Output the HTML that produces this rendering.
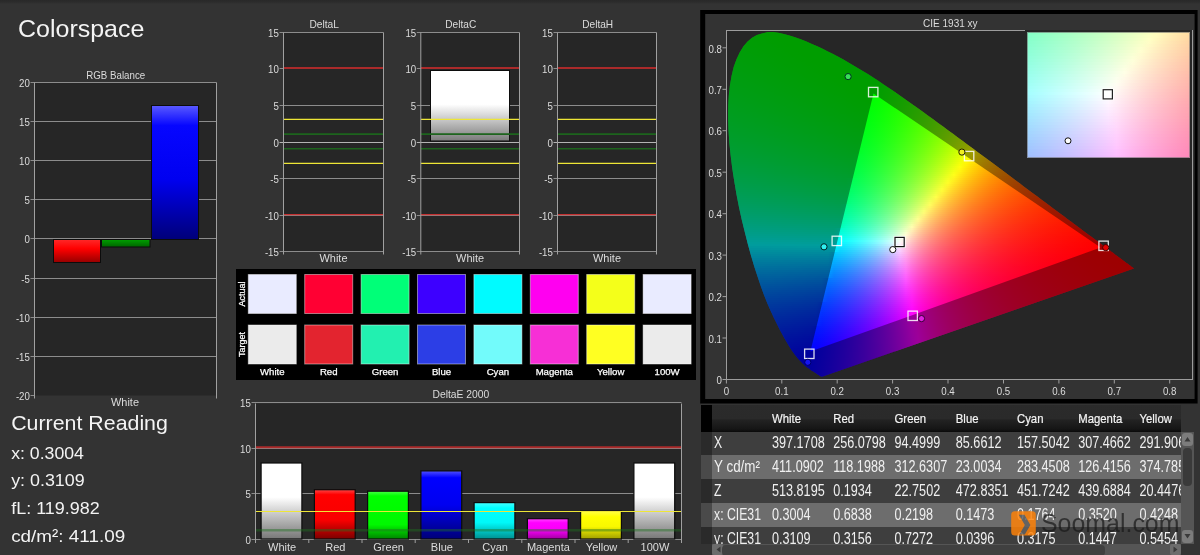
<!DOCTYPE html>
<html><head><meta charset="utf-8"><title>Colorspace</title>
<style>
html,body{margin:0;padding:0;background:#333;}
body{width:1200px;height:555px;overflow:hidden;position:relative;font-family:"Liberation Sans",sans-serif;color:#fff;}
#page{position:absolute;left:0;top:0;width:1200px;height:555px;overflow:hidden;background:#333;}
#topstrip{position:absolute;left:0;top:0;width:1200px;height:4px;background:linear-gradient(180deg,#292929,#2c2c2c 50%,#333);}
svg{position:absolute;left:0;top:0;will-change:transform;}
svg text{font-family:"Liberation Sans",sans-serif;}
#plot{position:absolute;left:726px;top:30px;width:467px;height:350px;background:#262626;border:1px solid #9c9c9c;box-sizing:border-box;}
#cie{position:absolute;left:726px;top:30px;width:414px;height:350px;clip-path:polygon(96.7px 346.6px,95.2px 346.6px,95.1px 346.5px,94.9px 346.5px,94.7px 346.4px,94.6px 346.3px,94.4px 346.2px,94.2px 346.1px,94.0px 346.0px,93.8px 345.8px,93.5px 345.7px,93.3px 345.5px,93.0px 345.3px,92.7px 345.1px,92.4px 344.9px,92.0px 344.7px,91.7px 344.4px,91.3px 344.2px,90.9px 343.9px,90.4px 343.6px,90.0px 343.3px,89.5px 343.0px,88.9px 342.6px,88.3px 342.2px,87.6px 341.8px,87.0px 341.3px,86.2px 340.9px,85.5px 340.4px,84.7px 339.9px,83.9px 339.3px,83.0px 338.6px,82.0px 338.0px,81.0px 337.2px,80.0px 336.4px,78.9px 335.5px,77.8px 334.5px,76.6px 333.4px,75.2px 332.1px,73.8px 330.6px,72.3px 328.9px,70.7px 326.9px,68.9px 324.7px,67.1px 322.2px,65.1px 319.4px,63.1px 316.3px,60.9px 312.6px,58.5px 308.6px,56.1px 304.1px,53.5px 299.2px,50.7px 293.6px,47.7px 287.4px,44.6px 280.7px,41.4px 273.4px,38.1px 265.3px,34.9px 256.5px,31.7px 247.0px,28.4px 236.9px,25.2px 226.2px,22.0px 214.7px,18.9px 202.5px,15.8px 189.9px,13.0px 177.3px,10.5px 164.4px,8.2px 151.1px,6.2px 137.9px,4.6px 125.0px,3.3px 112.5px,2.5px 100.1px,2.1px 88.1px,2.2px 76.7px,2.8px 65.8px,3.9px 55.5px,5.6px 45.8px,7.7px 37.1px,10.5px 29.3px,13.8px 22.3px,17.5px 16.3px,21.6px 11.4px,26.1px 7.7px,30.9px 5.1px,36.0px 3.4px,41.3px 2.3px,46.6px 2.1px,52.2px 2.8px,57.8px 4.1px,63.4px 5.5px,69.0px 7.2px,74.7px 9.3px,80.4px 11.6px,85.9px 13.9px,91.3px 16.3px,96.6px 18.8px,101.9px 21.4px,107.1px 24.0px,112.3px 26.7px,117.4px 29.5px,122.4px 32.4px,127.5px 35.4px,132.5px 38.4px,137.6px 41.5px,142.6px 44.6px,147.6px 47.8px,152.6px 51.1px,157.6px 54.4px,162.5px 57.7px,167.5px 61.1px,172.4px 64.5px,177.4px 68.0px,182.3px 71.5px,187.3px 75.0px,192.3px 78.5px,197.2px 82.1px,202.2px 85.7px,207.2px 89.3px,212.1px 92.9px,217.1px 96.5px,222.0px 100.2px,227.0px 103.8px,231.9px 107.4px,236.8px 111.0px,241.7px 114.7px,246.6px 118.3px,251.5px 121.9px,256.3px 125.5px,261.1px 129.1px,265.9px 132.6px,270.6px 136.1px,275.3px 139.6px,280.0px 143.1px,284.6px 146.6px,289.2px 150.0px,293.7px 153.3px,298.1px 156.7px,302.5px 159.9px,306.9px 163.2px,311.1px 166.3px,315.3px 169.4px,319.4px 172.5px,323.4px 175.5px,327.3px 178.4px,331.1px 181.2px,334.8px 184.0px,338.3px 186.6px,341.7px 189.2px,345.0px 191.6px,348.2px 194.0px,351.3px 196.3px,354.3px 198.5px,357.2px 200.7px,359.9px 202.7px,362.6px 204.7px,365.1px 206.5px,367.5px 208.3px,369.7px 210.0px,371.9px 211.6px,373.9px 213.1px,375.8px 214.5px,377.7px 215.9px,379.4px 217.2px,381.0px 218.4px,382.5px 219.5px,384.0px 220.6px,385.4px 221.7px,386.7px 222.6px,387.9px 223.5px,389.0px 224.4px,390.1px 225.2px,391.2px 226.0px,392.2px 226.7px,393.1px 227.4px,394.0px 228.1px,394.9px 228.7px,395.7px 229.3px,396.5px 229.9px,397.2px 230.5px,397.9px 231.0px,398.6px 231.5px,399.3px 232.0px,399.9px 232.5px,400.4px 232.9px,401.0px 233.3px,401.5px 233.6px,401.9px 234.0px,402.4px 234.3px,402.8px 234.6px,403.1px 234.9px,403.5px 235.1px,403.8px 235.4px,404.1px 235.6px,404.4px 235.8px,404.7px 236.0px,404.9px 236.2px,405.2px 236.4px,405.4px 236.5px,405.5px 236.7px,405.7px 236.8px,405.8px 236.9px,406.0px 237.0px,406.1px 237.1px,406.2px 237.2px,406.4px 237.3px,406.5px 237.4px,406.6px 237.5px,406.7px 237.5px,406.8px 237.6px,406.9px 237.7px,407.0px 237.7px,407.1px 237.8px,407.2px 237.9px,407.3px 238.0px,407.3px 238.0px,407.4px 238.1px,407.5px 238.1px,407.6px 238.2px,407.7px 238.3px,407.7px 238.3px,407.8px 238.3px,407.8px 238.4px,407.8px 238.4px,407.9px 238.4px,407.9px 238.4px,407.9px 238.5px,407.9px 238.5px,408.0px 238.5px,408.0px 238.5px,408.0px 238.5px);}
#cie i{display:block;height:2px;width:414px;}
#inset{position:absolute;left:1027px;top:32px;width:163px;height:126px;overflow:hidden;box-shadow:0 0 0 2px #262626;}
#inset::after{content:"";position:absolute;left:0;top:0;right:0;bottom:0;border:1px solid rgba(110,110,110,.6);}
#inset i{display:block;height:3px;width:163px;}
#tbl{position:absolute;left:701px;top:405px;width:480px;height:150px;overflow:hidden;}
#tbl div{position:absolute;left:0;width:480px;}
#tbl .hd{top:0;height:26.5px;background:linear-gradient(180deg,#2b2b2b 0%,#2a2a2a 50%,#222 56%,#161616 88%,#0a0a0a 100%);}
#tbl .hd b{position:absolute;left:0;top:0;width:11px;height:26.5px;background:#000;}
#tbl .r0{background:#3e3e3e;height:23.8px}
#tbl .r1{background:#6d6d6d;height:23.8px}
#hsb{position:absolute;left:701px;top:544px;width:480px;height:11px;background:#555;}
#hsb b{position:absolute;left:21px;top:0.5px;width:383px;height:11px;background:#404040;border-radius:4px;}
#hsb u{position:absolute;top:0;width:10.5px;height:11px;background:#6c6c6c;border-radius:2px;}
#vsb{position:absolute;left:1181px;top:431.5px;width:13px;height:112.5px;background:#555;}
#vsb .btn{position:absolute;left:1px;width:10.5px;height:13px;background:#7c7c7c;border-radius:3px;}
#vsb .thumb{position:absolute;left:2px;top:16.5px;width:9px;height:38px;background:#3a3a3a;border-radius:4px;}
</style></head>
<body><div id="page">
<div id="topstrip"></div>
<svg width="1200" height="555" viewBox="0 0 1200 555">
<defs>
<linearGradient id="gWht" x1="0" y1="0" x2="0" y2="1"><stop offset="0" stop-color="#fff"/><stop offset=".45" stop-color="#fff"/><stop offset="1" stop-color="#777"/></linearGradient>
<linearGradient id="gWhtC" x1="0" y1="0" x2="0" y2="1"><stop offset="0" stop-color="#fff"/><stop offset=".48" stop-color="#fff"/><stop offset="1" stop-color="#7a7a7a"/></linearGradient>
<linearGradient id="gRed" x1="0" y1="0" x2="0" y2="1"><stop offset="0" stop-color="#ff4646"/><stop offset="0.1" stop-color="#ff0000"/><stop offset="0.62" stop-color="#f80000"/><stop offset="1" stop-color="#7c0000"/></linearGradient>
<linearGradient id="gGrn" x1="0" y1="0" x2="0" y2="1"><stop offset="0" stop-color="#46ff46"/><stop offset="0.1" stop-color="#00ff00"/><stop offset="0.7" stop-color="#00f800"/><stop offset="1" stop-color="#008400"/></linearGradient>
<linearGradient id="gBlu" x1="0" y1="0" x2="0" y2="1"><stop offset="0" stop-color="#5050ff"/><stop offset="0.1" stop-color="#0000ff"/><stop offset="0.5" stop-color="#0000f0"/><stop offset="1" stop-color="#000078"/></linearGradient>
<linearGradient id="gCyn" x1="0" y1="0" x2="0" y2="1"><stop offset="0" stop-color="#46ffff"/><stop offset="0.15" stop-color="#00ffff"/><stop offset="0.55" stop-color="#00f8f8"/><stop offset="1" stop-color="#009090"/></linearGradient>
<linearGradient id="gMag" x1="0" y1="0" x2="0" y2="1"><stop offset="0" stop-color="#ff46ff"/><stop offset="0.2" stop-color="#ff00ff"/><stop offset="0.55" stop-color="#f800f8"/><stop offset="1" stop-color="#a000a0"/></linearGradient>
<linearGradient id="gYel" x1="0" y1="0" x2="0" y2="1"><stop offset="0" stop-color="#ffff46"/><stop offset="0.2" stop-color="#ffff00"/><stop offset="0.55" stop-color="#f8f800"/><stop offset="1" stop-color="#a0a000"/></linearGradient>
<linearGradient id="gBluP" x1="0" y1="0" x2="0" y2="1"><stop offset="0" stop-color="#5a5aff"/><stop offset=".15" stop-color="#0606ff"/><stop offset=".55" stop-color="#0000f0"/><stop offset="1" stop-color="#000078"/></linearGradient>
<linearGradient id="gRedN" x1="0" y1="0" x2="0" y2="1"><stop offset="0" stop-color="#ff2828"/><stop offset=".4" stop-color="#ff0000"/><stop offset="1" stop-color="#960000"/></linearGradient>
<linearGradient id="gGrnN" x1="0" y1="0" x2="0" y2="1"><stop offset="0" stop-color="#00a000"/><stop offset="1" stop-color="#006400"/></linearGradient>
</defs>
<rect x="34.5" y="82.5" width="182.0" height="313.0" fill="#262626" />
<line x1="30.5" y1="395.5" x2="34.5" y2="395.5" stroke="#8c8c8c" stroke-width="1" />
<text x="29.9" y="400.4" font-size="10.8" text-anchor="end" fill="#dcdcdc" textLength="14.0" lengthAdjust="spacingAndGlyphs" >-20</text>
<line x1="30.5" y1="356.5" x2="216.5" y2="356.5" stroke="#8c8c8c" stroke-width="1" />
<text x="29.9" y="361.4" font-size="10.8" text-anchor="end" fill="#dcdcdc" textLength="14.0" lengthAdjust="spacingAndGlyphs" >-15</text>
<line x1="30.5" y1="317.5" x2="216.5" y2="317.5" stroke="#8c8c8c" stroke-width="1" />
<text x="29.9" y="322.4" font-size="10.8" text-anchor="end" fill="#dcdcdc" textLength="14.0" lengthAdjust="spacingAndGlyphs" >-10</text>
<line x1="30.5" y1="278.5" x2="216.5" y2="278.5" stroke="#8c8c8c" stroke-width="1" />
<text x="29.9" y="283.4" font-size="10.8" text-anchor="end" fill="#dcdcdc" textLength="8.6" lengthAdjust="spacingAndGlyphs" >-5</text>
<line x1="30.5" y1="238.5" x2="216.5" y2="238.5" stroke="#8c8c8c" stroke-width="1" />
<text x="29.9" y="243.4" font-size="10.8" text-anchor="end" fill="#dcdcdc" textLength="5.4" lengthAdjust="spacingAndGlyphs" >0</text>
<line x1="30.5" y1="199.5" x2="216.5" y2="199.5" stroke="#8c8c8c" stroke-width="1" />
<text x="29.9" y="204.4" font-size="10.8" text-anchor="end" fill="#dcdcdc" textLength="5.4" lengthAdjust="spacingAndGlyphs" >5</text>
<line x1="30.5" y1="160.5" x2="216.5" y2="160.5" stroke="#8c8c8c" stroke-width="1" />
<text x="29.9" y="165.4" font-size="10.8" text-anchor="end" fill="#dcdcdc" textLength="10.8" lengthAdjust="spacingAndGlyphs" >10</text>
<line x1="30.5" y1="121.5" x2="216.5" y2="121.5" stroke="#8c8c8c" stroke-width="1" />
<text x="29.9" y="126.4" font-size="10.8" text-anchor="end" fill="#dcdcdc" textLength="10.8" lengthAdjust="spacingAndGlyphs" >15</text>
<line x1="30.5" y1="82.5" x2="216.5" y2="82.5" stroke="#8c8c8c" stroke-width="1" />
<text x="29.9" y="87.4" font-size="10.8" text-anchor="end" fill="#dcdcdc" textLength="10.8" lengthAdjust="spacingAndGlyphs" >20</text>
<line x1="34.5" y1="82.5" x2="34.5" y2="398.5" stroke="#a0a0a0" stroke-width="1" />
<line x1="216.5" y1="82.5" x2="216.5" y2="398.5" stroke="#a0a0a0" stroke-width="1" />
<rect x="53.5" y="239.5" width="47.0" height="23.0" fill="url(#gRedN)" stroke="#0c0c0c" stroke-width="1" />
<rect x="101.5" y="239.5" width="48.5" height="7.5" fill="url(#gGrnN)" stroke="#0c0c0c" stroke-width="1" />
<rect x="151.5" y="105.5" width="47.0" height="134.0" fill="url(#gBluP)" stroke="#0c0c0c" stroke-width="1" />
<text x="115.7" y="78.6" font-size="10.8" text-anchor="middle" fill="#dcdcdc" textLength="58.9" lengthAdjust="spacingAndGlyphs" >RGB Balance</text>
<text x="125.0" y="406.0" font-size="10.6" text-anchor="middle" fill="#dcdcdc" textLength="28.0" lengthAdjust="spacingAndGlyphs" >White</text>
<rect x="283.5" y="32.5" width="100.0" height="219.0" fill="#262626" />
<line x1="279.5" y1="251.5" x2="383.5" y2="251.5" stroke="#8c8c8c" stroke-width="1" />
<text x="278.9" y="256.4" font-size="10.8" text-anchor="end" fill="#dcdcdc" textLength="14.0" lengthAdjust="spacingAndGlyphs" >-15</text>
<line x1="279.5" y1="215.5" x2="383.5" y2="215.5" stroke="#8c8c8c" stroke-width="1" />
<text x="278.9" y="220.4" font-size="10.8" text-anchor="end" fill="#dcdcdc" textLength="14.0" lengthAdjust="spacingAndGlyphs" >-10</text>
<line x1="279.5" y1="178.5" x2="383.5" y2="178.5" stroke="#8c8c8c" stroke-width="1" />
<text x="278.9" y="183.4" font-size="10.8" text-anchor="end" fill="#dcdcdc" textLength="8.6" lengthAdjust="spacingAndGlyphs" >-5</text>
<line x1="279.5" y1="142.5" x2="383.5" y2="142.5" stroke="#b4b4b4" stroke-width="1" />
<text x="278.9" y="147.4" font-size="10.8" text-anchor="end" fill="#dcdcdc" textLength="5.4" lengthAdjust="spacingAndGlyphs" >0</text>
<line x1="279.5" y1="105.5" x2="383.5" y2="105.5" stroke="#8c8c8c" stroke-width="1" />
<text x="278.9" y="110.4" font-size="10.8" text-anchor="end" fill="#dcdcdc" textLength="5.4" lengthAdjust="spacingAndGlyphs" >5</text>
<line x1="279.5" y1="68.5" x2="383.5" y2="68.5" stroke="#8c8c8c" stroke-width="1" />
<text x="278.9" y="73.4" font-size="10.8" text-anchor="end" fill="#dcdcdc" textLength="10.8" lengthAdjust="spacingAndGlyphs" >10</text>
<line x1="279.5" y1="32.5" x2="383.5" y2="32.5" stroke="#8c8c8c" stroke-width="1" />
<text x="278.9" y="37.4" font-size="10.8" text-anchor="end" fill="#dcdcdc" textLength="10.8" lengthAdjust="spacingAndGlyphs" >15</text>
<line x1="283.5" y1="68.1" x2="383.5" y2="68.1" stroke="#aa2a2a" stroke-width="2" />
<line x1="283.5" y1="214.7" x2="383.5" y2="214.7" stroke="#c43030" stroke-width="1.3" />
<line x1="283.5" y1="119.4" x2="383.5" y2="119.4" stroke="#eee636" stroke-width="1.2" />
<line x1="283.5" y1="163.4" x2="383.5" y2="163.4" stroke="#eee636" stroke-width="1.2" />
<line x1="283.5" y1="134.1" x2="383.5" y2="134.1" stroke="#1d641d" stroke-width="1.6" />
<line x1="283.5" y1="148.7" x2="383.5" y2="148.7" stroke="#1d641d" stroke-width="1.6" />
<line x1="283.5" y1="32.5" x2="283.5" y2="254.5" stroke="#a0a0a0" stroke-width="1" />
<line x1="383.5" y1="32.5" x2="383.5" y2="254.5" stroke="#a0a0a0" stroke-width="1" />
<text x="324.2" y="27.8" font-size="10.8" text-anchor="middle" fill="#dcdcdc" textLength="29.5" lengthAdjust="spacingAndGlyphs" >DeltaL</text>
<text x="333.5" y="262.0" font-size="10.6" text-anchor="middle" fill="#dcdcdc" textLength="28.0" lengthAdjust="spacingAndGlyphs" >White</text>
<rect x="420.8" y="32.5" width="98.7" height="219.0" fill="#262626" />
<line x1="416.8" y1="251.5" x2="519.5" y2="251.5" stroke="#8c8c8c" stroke-width="1" />
<text x="416.2" y="256.4" font-size="10.8" text-anchor="end" fill="#dcdcdc" textLength="14.0" lengthAdjust="spacingAndGlyphs" >-15</text>
<line x1="416.8" y1="215.5" x2="519.5" y2="215.5" stroke="#8c8c8c" stroke-width="1" />
<text x="416.2" y="220.4" font-size="10.8" text-anchor="end" fill="#dcdcdc" textLength="14.0" lengthAdjust="spacingAndGlyphs" >-10</text>
<line x1="416.8" y1="178.5" x2="519.5" y2="178.5" stroke="#8c8c8c" stroke-width="1" />
<text x="416.2" y="183.4" font-size="10.8" text-anchor="end" fill="#dcdcdc" textLength="8.6" lengthAdjust="spacingAndGlyphs" >-5</text>
<line x1="416.8" y1="142.5" x2="519.5" y2="142.5" stroke="#b4b4b4" stroke-width="1" />
<text x="416.2" y="147.4" font-size="10.8" text-anchor="end" fill="#dcdcdc" textLength="5.4" lengthAdjust="spacingAndGlyphs" >0</text>
<line x1="416.8" y1="105.5" x2="519.5" y2="105.5" stroke="#8c8c8c" stroke-width="1" />
<text x="416.2" y="110.4" font-size="10.8" text-anchor="end" fill="#dcdcdc" textLength="5.4" lengthAdjust="spacingAndGlyphs" >5</text>
<line x1="416.8" y1="68.5" x2="519.5" y2="68.5" stroke="#8c8c8c" stroke-width="1" />
<text x="416.2" y="73.4" font-size="10.8" text-anchor="end" fill="#dcdcdc" textLength="10.8" lengthAdjust="spacingAndGlyphs" >10</text>
<line x1="416.8" y1="32.5" x2="519.5" y2="32.5" stroke="#8c8c8c" stroke-width="1" />
<text x="416.2" y="37.4" font-size="10.8" text-anchor="end" fill="#dcdcdc" textLength="10.8" lengthAdjust="spacingAndGlyphs" >15</text>
<rect x="430.5" y="70.5" width="79.0" height="70.5" fill="url(#gWhtC)" stroke="#0c0c0c" stroke-width="1" />
<line x1="420.8" y1="68.1" x2="519.5" y2="68.1" stroke="#aa2a2a" stroke-width="2" />
<line x1="420.8" y1="214.7" x2="519.5" y2="214.7" stroke="#c43030" stroke-width="1.3" />
<line x1="420.8" y1="119.4" x2="519.5" y2="119.4" stroke="#eee636" stroke-width="1.2" />
<line x1="420.8" y1="163.4" x2="519.5" y2="163.4" stroke="#eee636" stroke-width="1.2" />
<line x1="420.8" y1="134.1" x2="519.5" y2="134.1" stroke="#1d641d" stroke-width="1.6" />
<line x1="420.8" y1="148.7" x2="519.5" y2="148.7" stroke="#1d641d" stroke-width="1.6" />
<line x1="420.8" y1="32.5" x2="420.8" y2="254.5" stroke="#a0a0a0" stroke-width="1" />
<line x1="519.5" y1="32.5" x2="519.5" y2="254.5" stroke="#a0a0a0" stroke-width="1" />
<text x="460.8" y="27.8" font-size="10.8" text-anchor="middle" fill="#dcdcdc" textLength="31.0" lengthAdjust="spacingAndGlyphs" >DeltaC</text>
<text x="470.1" y="262.0" font-size="10.6" text-anchor="middle" fill="#dcdcdc" textLength="28.0" lengthAdjust="spacingAndGlyphs" >White</text>
<rect x="557.5" y="32.5" width="99.0" height="219.0" fill="#262626" />
<line x1="553.5" y1="251.5" x2="656.5" y2="251.5" stroke="#8c8c8c" stroke-width="1" />
<text x="552.9" y="256.4" font-size="10.8" text-anchor="end" fill="#dcdcdc" textLength="14.0" lengthAdjust="spacingAndGlyphs" >-15</text>
<line x1="553.5" y1="215.5" x2="656.5" y2="215.5" stroke="#8c8c8c" stroke-width="1" />
<text x="552.9" y="220.4" font-size="10.8" text-anchor="end" fill="#dcdcdc" textLength="14.0" lengthAdjust="spacingAndGlyphs" >-10</text>
<line x1="553.5" y1="178.5" x2="656.5" y2="178.5" stroke="#8c8c8c" stroke-width="1" />
<text x="552.9" y="183.4" font-size="10.8" text-anchor="end" fill="#dcdcdc" textLength="8.6" lengthAdjust="spacingAndGlyphs" >-5</text>
<line x1="553.5" y1="142.5" x2="656.5" y2="142.5" stroke="#b4b4b4" stroke-width="1" />
<text x="552.9" y="147.4" font-size="10.8" text-anchor="end" fill="#dcdcdc" textLength="5.4" lengthAdjust="spacingAndGlyphs" >0</text>
<line x1="553.5" y1="105.5" x2="656.5" y2="105.5" stroke="#8c8c8c" stroke-width="1" />
<text x="552.9" y="110.4" font-size="10.8" text-anchor="end" fill="#dcdcdc" textLength="5.4" lengthAdjust="spacingAndGlyphs" >5</text>
<line x1="553.5" y1="68.5" x2="656.5" y2="68.5" stroke="#8c8c8c" stroke-width="1" />
<text x="552.9" y="73.4" font-size="10.8" text-anchor="end" fill="#dcdcdc" textLength="10.8" lengthAdjust="spacingAndGlyphs" >10</text>
<line x1="553.5" y1="32.5" x2="656.5" y2="32.5" stroke="#8c8c8c" stroke-width="1" />
<text x="552.9" y="37.4" font-size="10.8" text-anchor="end" fill="#dcdcdc" textLength="10.8" lengthAdjust="spacingAndGlyphs" >15</text>
<line x1="557.5" y1="68.1" x2="656.5" y2="68.1" stroke="#aa2a2a" stroke-width="2" />
<line x1="557.5" y1="214.7" x2="656.5" y2="214.7" stroke="#c43030" stroke-width="1.3" />
<line x1="557.5" y1="119.4" x2="656.5" y2="119.4" stroke="#eee636" stroke-width="1.2" />
<line x1="557.5" y1="163.4" x2="656.5" y2="163.4" stroke="#eee636" stroke-width="1.2" />
<line x1="557.5" y1="134.1" x2="656.5" y2="134.1" stroke="#1d641d" stroke-width="1.6" />
<line x1="557.5" y1="148.7" x2="656.5" y2="148.7" stroke="#1d641d" stroke-width="1.6" />
<line x1="557.5" y1="32.5" x2="557.5" y2="254.5" stroke="#a0a0a0" stroke-width="1" />
<line x1="656.5" y1="32.5" x2="656.5" y2="254.5" stroke="#a0a0a0" stroke-width="1" />
<text x="597.7" y="27.8" font-size="10.8" text-anchor="middle" fill="#dcdcdc" textLength="31.0" lengthAdjust="spacingAndGlyphs" >DeltaH</text>
<text x="607.0" y="262.0" font-size="10.6" text-anchor="middle" fill="#dcdcdc" textLength="28.0" lengthAdjust="spacingAndGlyphs" >White</text>
<rect x="236.0" y="269.0" width="460.0" height="111.0" fill="#000" />
<rect x="248.3" y="274.5" width="48.0" height="39.0" fill="#e9ebff" stroke="rgba(255,255,255,0.45)" stroke-width="1" />
<rect x="248.3" y="325.0" width="48.0" height="39.0" fill="#ebebeb" stroke="rgba(255,255,255,0.45)" stroke-width="1" />
<text x="272.3" y="375.0" font-size="9.6" text-anchor="middle" fill="#fff" stroke="#fff" stroke-width="0.25">White</text>
<rect x="304.7" y="274.5" width="48.0" height="39.0" fill="#ff0033" stroke="rgba(255,255,255,0.45)" stroke-width="1" />
<rect x="304.7" y="325.0" width="48.0" height="39.0" fill="#e3242f" stroke="rgba(255,255,255,0.45)" stroke-width="1" />
<text x="328.7" y="375.0" font-size="9.6" text-anchor="middle" fill="#fff" stroke="#fff" stroke-width="0.25">Red</text>
<rect x="361.1" y="274.5" width="48.0" height="39.0" fill="#00ff78" stroke="rgba(255,255,255,0.45)" stroke-width="1" />
<rect x="361.1" y="325.0" width="48.0" height="39.0" fill="#22f0b0" stroke="rgba(255,255,255,0.45)" stroke-width="1" />
<text x="385.1" y="375.0" font-size="9.6" text-anchor="middle" fill="#fff" stroke="#fff" stroke-width="0.25">Green</text>
<rect x="417.5" y="274.5" width="48.0" height="39.0" fill="#3d00ff" stroke="rgba(255,255,255,0.45)" stroke-width="1" />
<rect x="417.5" y="325.0" width="48.0" height="39.0" fill="#2c3ee6" stroke="rgba(255,255,255,0.45)" stroke-width="1" />
<text x="441.5" y="375.0" font-size="9.6" text-anchor="middle" fill="#fff" stroke="#fff" stroke-width="0.25">Blue</text>
<rect x="473.9" y="274.5" width="48.0" height="39.0" fill="#00fbff" stroke="rgba(255,255,255,0.45)" stroke-width="1" />
<rect x="473.9" y="325.0" width="48.0" height="39.0" fill="#72fbfb" stroke="rgba(255,255,255,0.45)" stroke-width="1" />
<text x="497.9" y="375.0" font-size="9.6" text-anchor="middle" fill="#fff" stroke="#fff" stroke-width="0.25">Cyan</text>
<rect x="530.3" y="274.5" width="48.0" height="39.0" fill="#ff00f0" stroke="rgba(255,255,255,0.45)" stroke-width="1" />
<rect x="530.3" y="325.0" width="48.0" height="39.0" fill="#f72fd6" stroke="rgba(255,255,255,0.45)" stroke-width="1" />
<text x="554.3" y="375.0" font-size="9.6" text-anchor="middle" fill="#fff" stroke="#fff" stroke-width="0.25">Magenta</text>
<rect x="586.7" y="274.5" width="48.0" height="39.0" fill="#f4ff1a" stroke="rgba(255,255,255,0.45)" stroke-width="1" />
<rect x="586.7" y="325.0" width="48.0" height="39.0" fill="#ffff22" stroke="rgba(255,255,255,0.45)" stroke-width="1" />
<text x="610.7" y="375.0" font-size="9.6" text-anchor="middle" fill="#fff" stroke="#fff" stroke-width="0.25">Yellow</text>
<rect x="643.1" y="274.5" width="48.0" height="39.0" fill="#e9ebff" stroke="rgba(255,255,255,0.45)" stroke-width="1" />
<rect x="643.1" y="325.0" width="48.0" height="39.0" fill="#ebebeb" stroke="rgba(255,255,255,0.45)" stroke-width="1" />
<text x="667.1" y="375.0" font-size="9.6" text-anchor="middle" fill="#fff" stroke="#fff" stroke-width="0.25">100W</text>
<text x="0.0" y="0.0" font-size="9" text-anchor="middle" fill="#fff" stroke="#fff" stroke-width="0.25" transform="translate(245.3,294) rotate(-90)">Actual</text>
<text x="0.0" y="0.0" font-size="9" text-anchor="middle" fill="#fff" stroke="#fff" stroke-width="0.25" transform="translate(245.3,344.5) rotate(-90)">Target</text>
<rect x="255.5" y="403.5" width="426.0" height="136.0" fill="#262626" />
<line x1="251.5" y1="539.5" x2="681.5" y2="539.5" stroke="#8c8c8c" stroke-width="1" />
<text x="250.9" y="544.4" font-size="10.8" text-anchor="end" fill="#dcdcdc" textLength="5.4" lengthAdjust="spacingAndGlyphs" >0</text>
<line x1="251.5" y1="493.5" x2="681.5" y2="493.5" stroke="#8c8c8c" stroke-width="1" />
<text x="250.9" y="498.4" font-size="10.8" text-anchor="end" fill="#dcdcdc" textLength="5.4" lengthAdjust="spacingAndGlyphs" >5</text>
<line x1="251.5" y1="448.5" x2="681.5" y2="448.5" stroke="#8c8c8c" stroke-width="1" />
<text x="250.9" y="453.4" font-size="10.8" text-anchor="end" fill="#dcdcdc" textLength="10.8" lengthAdjust="spacingAndGlyphs" >10</text>
<line x1="251.5" y1="402.5" x2="681.5" y2="402.5" stroke="#8c8c8c" stroke-width="1" />
<text x="250.9" y="407.4" font-size="10.8" text-anchor="end" fill="#dcdcdc" textLength="10.8" lengthAdjust="spacingAndGlyphs" >15</text>
<rect x="261.1" y="463.0" width="40.8" height="76.0" fill="url(#gWht)" stroke="#0c0c0c" stroke-width="1.2" />
<text x="282.1" y="550.6" font-size="10.5" text-anchor="middle" fill="#dcdcdc" textLength="28.2" lengthAdjust="spacingAndGlyphs" >White</text>
<line x1="255.5" y1="539.5" x2="255.5" y2="543.0" stroke="#a0a0a0" stroke-width="1" />
<rect x="314.4" y="489.7" width="40.8" height="49.3" fill="url(#gRed)" stroke="#0c0c0c" stroke-width="1.2" />
<text x="335.4" y="550.6" font-size="10.5" text-anchor="middle" fill="#dcdcdc" textLength="20.2" lengthAdjust="spacingAndGlyphs" >Red</text>
<line x1="308.8" y1="539.5" x2="308.8" y2="543.0" stroke="#a0a0a0" stroke-width="1" />
<rect x="367.6" y="491.2" width="40.8" height="47.8" fill="url(#gGrn)" stroke="#0c0c0c" stroke-width="1.2" />
<text x="388.6" y="550.6" font-size="10.5" text-anchor="middle" fill="#dcdcdc" textLength="30.6" lengthAdjust="spacingAndGlyphs" >Green</text>
<line x1="362.0" y1="539.5" x2="362.0" y2="543.0" stroke="#a0a0a0" stroke-width="1" />
<rect x="420.9" y="470.9" width="40.8" height="68.1" fill="url(#gBlu)" stroke="#0c0c0c" stroke-width="1.2" />
<text x="441.9" y="550.6" font-size="10.5" text-anchor="middle" fill="#dcdcdc" textLength="22.1" lengthAdjust="spacingAndGlyphs" >Blue</text>
<line x1="415.2" y1="539.5" x2="415.2" y2="543.0" stroke="#a0a0a0" stroke-width="1" />
<rect x="474.1" y="502.6" width="40.8" height="36.4" fill="url(#gCyn)" stroke="#0c0c0c" stroke-width="1.2" />
<text x="495.1" y="550.6" font-size="10.5" text-anchor="middle" fill="#dcdcdc" textLength="25.7" lengthAdjust="spacingAndGlyphs" >Cyan</text>
<line x1="468.5" y1="539.5" x2="468.5" y2="543.0" stroke="#a0a0a0" stroke-width="1" />
<rect x="527.4" y="518.7" width="40.8" height="20.3" fill="url(#gMag)" stroke="#0c0c0c" stroke-width="1.2" />
<text x="548.4" y="550.6" font-size="10.5" text-anchor="middle" fill="#dcdcdc" textLength="42.9" lengthAdjust="spacingAndGlyphs" >Magenta</text>
<line x1="521.8" y1="539.5" x2="521.8" y2="543.0" stroke="#a0a0a0" stroke-width="1" />
<rect x="580.6" y="511.2" width="40.8" height="27.8" fill="url(#gYel)" stroke="#0c0c0c" stroke-width="1.2" />
<text x="601.6" y="550.6" font-size="10.5" text-anchor="middle" fill="#dcdcdc" textLength="31.5" lengthAdjust="spacingAndGlyphs" >Yellow</text>
<line x1="575.0" y1="539.5" x2="575.0" y2="543.0" stroke="#a0a0a0" stroke-width="1" />
<rect x="633.9" y="463.0" width="40.8" height="76.0" fill="url(#gWht)" stroke="#0c0c0c" stroke-width="1.2" />
<text x="654.9" y="550.6" font-size="10.5" text-anchor="middle" fill="#dcdcdc" textLength="28.8" lengthAdjust="spacingAndGlyphs" >100W</text>
<line x1="628.2" y1="539.5" x2="628.2" y2="543.0" stroke="#a0a0a0" stroke-width="1" />
<line x1="255.5" y1="447.3" x2="681.5" y2="447.3" stroke="#aa2a2a" stroke-width="2" />
<line x1="255.5" y1="511.5" x2="681.5" y2="511.5" stroke="#eee636" stroke-width="1.1" />
<line x1="255.5" y1="530.2" x2="681.5" y2="530.2" stroke="rgba(31,110,31,0.45)" stroke-width="2.4" />
<line x1="255.5" y1="403.5" x2="255.5" y2="543.0" stroke="#a0a0a0" stroke-width="1" />
<line x1="681.5" y1="403.5" x2="681.5" y2="543.0" stroke="#a0a0a0" stroke-width="1" />
<text x="460.9" y="397.8" font-size="10.8" text-anchor="middle" fill="#dcdcdc" textLength="56.8" lengthAdjust="spacingAndGlyphs" >DeltaE 2000</text>
<text x="18.0" y="37.4" font-size="24.4" text-anchor="start" fill="#f4f4f4" textLength="126.4" lengthAdjust="spacingAndGlyphs" >Colorspace</text>
<text x="11.2" y="429.7" font-size="20.4" text-anchor="start" fill="#f4f4f4" textLength="156.7" lengthAdjust="spacingAndGlyphs" >Current Reading</text>
<text x="11.2" y="458.6" font-size="17.3" text-anchor="start" fill="#f4f4f4" textLength="72.7" lengthAdjust="spacingAndGlyphs" >x: 0.3004</text>
<text x="11.2" y="486.3" font-size="17.3" text-anchor="start" fill="#f4f4f4" textLength="73.5" lengthAdjust="spacingAndGlyphs" >y: 0.3109</text>
<text x="11.2" y="514.2" font-size="17.3" text-anchor="start" fill="#f4f4f4" textLength="88.5" lengthAdjust="spacingAndGlyphs" >fL: 119.982</text>
<text x="11.2" y="541.8" font-size="17.3" text-anchor="start" fill="#f4f4f4" textLength="114.0" lengthAdjust="spacingAndGlyphs" >cd/m²: 411.09</text>
</svg>

<svg width="1200" height="555" viewBox="0 0 1200 555"><path d="M700.2 10H1197.6V403.5H700.2Z M705.2 14V399H1194.6V14Z" fill="#000" fill-rule="evenodd"/></svg>
<div id="plot"></div>
<div id="cie">
<i style="background:linear-gradient(90deg,#00ff09,#00ff08,#00ff06,#00ff05,#00ff04,#00ff03,#00ff02,#00ff01,#0f0,#0f0,#0f0,#0f0,#0f0,#0f0,#0f0,#0f0,#0f0,#0f0,#0f0,#0f0,#0f0,#0f0,#0f0,#0f0,#0f0,#0f0,#0f0,#0f0,#04ff00,#08ff00,#0eff00,#13ff00,#19ff00,#1fff00,#25ff00,#2cff00,#3f0,#3aff00,#41ff00,#49ff00,#50ff00,#58ff00,#60ff00,#69ff00,#72ff00,#7bff00,#84ff00,#8dff00,#97ff00,#a1ff00,#abff00,#b5ff00,#c0ff00,#cbff00,#d7ff00,#e2ff00,#ef0,#faff00,#fff700,#ffec00,#ffe100,#ffd700,#ffce00,#ffc500,#ffbc00,#ffb400,#ffad00,#ffa600,#ff9f00,#f90)"></i>
<i style="background:linear-gradient(90deg,#00ff09,#00ff08,#00ff07,#00ff06,#00ff05,#00ff04,#00ff02,#00ff01,#0f0,#0f0,#0f0,#0f0,#0f0,#0f0,#0f0,#0f0,#0f0,#0f0,#0f0,#0f0,#0f0,#0f0,#0f0,#0f0,#0f0,#0f0,#0f0,#0f0,#04ff00,#09ff00,#0eff00,#14ff00,#19ff00,#20ff00,#26ff00,#2dff00,#34ff00,#3bff00,#42ff00,#4aff00,#52ff00,#5aff00,#62ff00,#6bff00,#73ff00,#7cff00,#86ff00,#8fff00,#9f0,#a3ff00,#adff00,#b8ff00,#c3ff00,#ceff00,#d9ff00,#e5ff00,#f1ff00,#feff00,#fff400,#ffe900,#ffde00,#ffd400,#ffcb00,#ffc200,#ffba00,#ffb200,#ffab00,#ffa400,#ff9d00,#ff9700)"></i>
<i style="background:linear-gradient(90deg,#00ff0a,#00ff09,#00ff08,#00ff07,#00ff05,#00ff04,#00ff03,#00ff02,#00ff01,#0f0,#0f0,#0f0,#0f0,#0f0,#0f0,#0f0,#0f0,#0f0,#0f0,#0f0,#0f0,#0f0,#0f0,#0f0,#0f0,#0f0,#0f0,#0f0,#05ff00,#09ff00,#0fff00,#14ff00,#1aff00,#20ff00,#27ff00,#2eff00,#35ff00,#3cff00,#43ff00,#4bff00,#53ff00,#5bff00,#63ff00,#6cff00,#75ff00,#7eff00,#8f0,#91ff00,#9bff00,#a5ff00,#b0ff00,#baff00,#c5ff00,#d1ff00,#dcff00,#e8ff00,#f4ff00,#fffd00,#fff100,#ffe600,#ffdb00,#ffd100,#ffc800,#ffbf00,#ffb700,#ffb000,#ffa800,#ffa200,#ff9b00,#ff9500)"></i>
<i style="background:linear-gradient(90deg,#00ff0b,#00ff0a,#00ff08,#00ff07,#00ff06,#00ff05,#00ff04,#00ff02,#00ff01,#0f0,#0f0,#0f0,#0f0,#0f0,#0f0,#0f0,#0f0,#0f0,#0f0,#0f0,#0f0,#0f0,#0f0,#0f0,#0f0,#0f0,#0f0,#01ff00,#05ff00,#0aff00,#0fff00,#15ff00,#1bff00,#21ff00,#28ff00,#2fff00,#36ff00,#3dff00,#4f0,#4cff00,#54ff00,#5cff00,#65ff00,#6eff00,#7f0,#80ff00,#89ff00,#93ff00,#9dff00,#a8ff00,#b2ff00,#bdff00,#c8ff00,#d4ff00,#dfff00,#ebff00,#f8ff00,#fffa00,#fe0,#ffe300,#ffd800,#ffcf00,#ffc500,#ffbd00,#ffb500,#ffad00,#ffa600,#ff9f00,#f90,#ff9300)"></i>
<i style="background:linear-gradient(90deg,#00ff0c,#00ff0a,#00ff09,#00ff08,#00ff07,#00ff05,#00ff04,#00ff03,#00ff02,#00ff01,#0f0,#0f0,#0f0,#0f0,#0f0,#0f0,#0f0,#0f0,#0f0,#0f0,#0f0,#0f0,#0f0,#0f0,#0f0,#0f0,#0f0,#01ff00,#05ff00,#0aff00,#10ff00,#16ff00,#1cff00,#2f0,#29ff00,#2fff00,#37ff00,#3eff00,#46ff00,#4dff00,#56ff00,#5eff00,#67ff00,#6fff00,#78ff00,#82ff00,#8bff00,#95ff00,#9fff00,#af0,#b5ff00,#c0ff00,#cbff00,#d6ff00,#e2ff00,#efff00,#fbff00,#fff600,#ffeb00,#ffe000,#ffd500,#fc0,#ffc300,#ffba00,#ffb200,#ffab00,#ffa400,#ff9d00,#ff9700,#ff9100)"></i>
<i style="background:linear-gradient(90deg,#00ff0c,#00ff0b,#00ff0a,#00ff09,#00ff07,#00ff06,#00ff05,#00ff04,#00ff03,#00ff01,#0f0,#0f0,#0f0,#0f0,#0f0,#0f0,#0f0,#0f0,#0f0,#0f0,#0f0,#0f0,#0f0,#0f0,#0f0,#0f0,#0f0,#01ff00,#06ff00,#0bff00,#10ff00,#16ff00,#1cff00,#23ff00,#29ff00,#30ff00,#38ff00,#3fff00,#47ff00,#4fff00,#57ff00,#5fff00,#68ff00,#71ff00,#7aff00,#84ff00,#8dff00,#97ff00,#a2ff00,#acff00,#b7ff00,#c2ff00,#ceff00,#d9ff00,#e5ff00,#f2ff00,#ff0,#fff300,#ffe700,#fd0,#ffd200,#ffc900,#ffc000,#ffb800,#ffb000,#ffa900,#ffa200,#ff9b00,#ff9500,#ff8f00)"></i>
<i style="background:linear-gradient(90deg,#00ff0d,#00ff0c,#00ff0b,#00ff09,#00ff08,#00ff07,#00ff06,#00ff04,#00ff03,#00ff02,#00ff01,#0f0,#0f0,#0f0,#0f0,#0f0,#0f0,#0f0,#0f0,#0f0,#0f0,#0f0,#0f0,#0f0,#0f0,#0f0,#0f0,#02ff00,#06ff00,#0bff00,#1f0,#17ff00,#1dff00,#24ff00,#2aff00,#31ff00,#39ff00,#40ff00,#48ff00,#50ff00,#58ff00,#61ff00,#6aff00,#73ff00,#7cff00,#86ff00,#8fff00,#9aff00,#a4ff00,#afff00,#baff00,#c5ff00,#d1ff00,#dcff00,#e9ff00,#f5ff00,#fffc00,#fff000,#ffe400,#ffda00,#ffd000,#ffc600,#ffbd00,#ffb500,#ffad00,#ffa600,#ff9f00,#f90,#ff9300,#ff8d00)"></i>
<i style="background:linear-gradient(90deg,#00ff0e,#00ff0d,#00ff0b,#00ff0a,#00ff09,#00ff07,#00ff06,#00ff05,#00ff04,#00ff03,#00ff01,#0f0,#0f0,#0f0,#0f0,#0f0,#0f0,#0f0,#0f0,#0f0,#0f0,#0f0,#0f0,#0f0,#0f0,#0f0,#0f0,#02ff00,#07ff00,#0cff00,#12ff00,#17ff00,#1eff00,#24ff00,#2bff00,#32ff00,#3aff00,#41ff00,#49ff00,#51ff00,#5aff00,#62ff00,#6bff00,#74ff00,#7eff00,#8f0,#92ff00,#9cff00,#a6ff00,#b1ff00,#bcff00,#c8ff00,#d3ff00,#e0ff00,#ecff00,#f9ff00,#fff800,#ffec00,#ffe100,#ffd700,#ffcd00,#ffc300,#fb0,#ffb300,#ffab00,#ffa400,#ff9d00,#ff9700,#ff9100,#ff8b00)"></i>
<i style="background:linear-gradient(90deg,#00ff0f,#00ff0d,#00ff0c,#00ff0b,#00ff09,#00ff08,#00ff07,#00ff06,#00ff04,#00ff03,#00ff02,#00ff01,#0f0,#0f0,#0f0,#0f0,#0f0,#0f0,#0f0,#0f0,#0f0,#0f0,#0f0,#0f0,#0f0,#0f0,#0f0,#02ff00,#07ff00,#0cff00,#12ff00,#18ff00,#1fff00,#25ff00,#2cff00,#3f0,#3bff00,#43ff00,#4bff00,#53ff00,#5bff00,#64ff00,#6dff00,#76ff00,#80ff00,#8aff00,#94ff00,#9eff00,#a9ff00,#b4ff00,#bfff00,#cbff00,#d6ff00,#e3ff00,#efff00,#fcff00,#fff500,#ffe900,#ffde00,#ffd400,#ffca00,#ffc100,#ffb800,#ffb000,#ffa900,#ffa200,#ff9b00,#ff9400,#ff8e00,#ff8900)"></i>
<i style="background:linear-gradient(90deg,#00ff0f,#00ff0e,#00ff0d,#00ff0c,#00ff0a,#00ff09,#00ff08,#00ff06,#00ff05,#00ff04,#00ff03,#00ff01,#0f0,#0f0,#0f0,#0f0,#0f0,#0f0,#0f0,#0f0,#0f0,#0f0,#0f0,#0f0,#0f0,#0f0,#0f0,#03ff00,#08ff00,#0dff00,#13ff00,#19ff00,#1fff00,#26ff00,#2dff00,#34ff00,#3cff00,#4f0,#4cff00,#54ff00,#5dff00,#6f0,#6fff00,#78ff00,#82ff00,#8cff00,#96ff00,#a0ff00,#abff00,#b6ff00,#c2ff00,#cdff00,#d9ff00,#e6ff00,#f3ff00,#fffe00,#fff200,#ffe600,#ffdb00,#ffd100,#ffc700,#ffbe00,#ffb600,#ffae00,#ffa600,#ff9f00,#f90,#ff9200,#ff8c00,#ff8700)"></i>
<i style="background:linear-gradient(90deg,#00ff10,#00ff0f,#00ff0e,#00ff0c,#00ff0b,#00ff0a,#00ff08,#00ff07,#00ff06,#00ff05,#00ff03,#00ff02,#00ff01,#0f0,#0f0,#0f0,#0f0,#0f0,#0f0,#0f0,#0f0,#0f0,#0f0,#0f0,#0f0,#0f0,#0f0,#03ff00,#08ff00,#0eff00,#13ff00,#1aff00,#20ff00,#27ff00,#2eff00,#35ff00,#3dff00,#45ff00,#4dff00,#56ff00,#5eff00,#67ff00,#70ff00,#7aff00,#84ff00,#8eff00,#98ff00,#a3ff00,#aeff00,#b9ff00,#c4ff00,#d0ff00,#df0,#e9ff00,#f6ff00,#fffb00,#fe0,#ffe300,#ffd800,#ffce00,#ffc400,#fb0,#ffb300,#ffab00,#ffa400,#ff9d00,#ff9600,#ff9000,#ff8a00,#ff8500)"></i>
<i style="background:linear-gradient(90deg,#0f1,#00ff10,#00ff0e,#00ff0d,#00ff0c,#00ff0a,#00ff09,#00ff08,#00ff07,#00ff05,#00ff04,#00ff03,#00ff02,#0f0,#0f0,#0f0,#0f0,#0f0,#0f0,#0f0,#0f0,#0f0,#0f0,#0f0,#0f0,#0f0,#0f0,#04ff00,#09ff00,#0eff00,#14ff00,#1aff00,#21ff00,#28ff00,#2fff00,#36ff00,#3eff00,#46ff00,#4eff00,#57ff00,#60ff00,#69ff00,#72ff00,#7cff00,#86ff00,#90ff00,#9aff00,#a5ff00,#b0ff00,#bcff00,#c7ff00,#d3ff00,#e0ff00,#ecff00,#f9ff00,#fff700,#ffeb00,#ffdf00,#ffd500,#ffcb00,#ffc100,#ffb900,#ffb100,#ffa900,#ffa200,#ff9b00,#ff9400,#ff8e00,#f80,#ff8300)"></i>
<i style="background:linear-gradient(90deg,#00ff12,#0f1,#00ff0f,#00ff0e,#00ff0d,#00ff0b,#00ff0a,#00ff09,#00ff07,#00ff06,#00ff05,#00ff03,#00ff02,#00ff01,#0f0,#0f0,#0f0,#0f0,#0f0,#0f0,#0f0,#0f0,#0f0,#0f0,#0f0,#0f0,#0f0,#04ff00,#09ff00,#0fff00,#15ff00,#1bff00,#2f0,#29ff00,#30ff00,#38ff00,#3fff00,#47ff00,#50ff00,#58ff00,#61ff00,#6aff00,#74ff00,#7eff00,#8f0,#92ff00,#9dff00,#a8ff00,#b3ff00,#beff00,#caff00,#d6ff00,#e3ff00,#f0ff00,#fdff00,#fff400,#ffe800,#ffdc00,#ffd200,#ffc800,#ffbf00,#ffb600,#ffae00,#ffa600,#ff9f00,#ff9800,#ff9200,#ff8c00,#ff8600,#ff8100)"></i>
<i style="background:linear-gradient(90deg,#00ff13,#0f1,#00ff10,#00ff0f,#00ff0d,#00ff0c,#00ff0b,#00ff09,#00ff08,#00ff07,#00ff05,#00ff04,#00ff03,#00ff02,#0f0,#0f0,#0f0,#0f0,#0f0,#0f0,#0f0,#0f0,#0f0,#0f0,#0f0,#0f0,#0f0,#04ff00,#0aff00,#0fff00,#15ff00,#1cff00,#23ff00,#2aff00,#31ff00,#39ff00,#41ff00,#49ff00,#51ff00,#5aff00,#63ff00,#6cff00,#76ff00,#80ff00,#8aff00,#94ff00,#9fff00,#af0,#b5ff00,#c1ff00,#cdff00,#d9ff00,#e6ff00,#f3ff00,#fffd00,#fff000,#ffe400,#ffd900,#ffcf00,#ffc500,#ffbc00,#ffb300,#ffab00,#ffa400,#ff9d00,#ff9600,#ff9000,#ff8a00,#ff8400,#ff7f00)"></i>
<i style="background:linear-gradient(90deg,#00ff14,#00ff12,#0f1,#00ff10,#00ff0e,#00ff0d,#00ff0c,#00ff0a,#00ff09,#00ff07,#00ff06,#00ff05,#00ff03,#00ff02,#00ff01,#0f0,#0f0,#0f0,#0f0,#0f0,#0f0,#0f0,#0f0,#0f0,#0f0,#0f0,#0f0,#05ff00,#0aff00,#10ff00,#16ff00,#1dff00,#23ff00,#2bff00,#32ff00,#3aff00,#42ff00,#4aff00,#53ff00,#5bff00,#65ff00,#6eff00,#78ff00,#82ff00,#8cff00,#96ff00,#a1ff00,#adff00,#b8ff00,#c4ff00,#d0ff00,#df0,#eaff00,#f7ff00,#fffa00,#ffed00,#ffe100,#ffd600,#fc0,#ffc200,#ffb900,#ffb100,#ffa900,#ffa200,#ff9b00,#ff9400,#ff8e00,#f80,#ff8200,#ff7d00)"></i>
<i style="background:linear-gradient(90deg,#00ff15,#00ff13,#00ff12,#00ff10,#00ff0f,#00ff0e,#00ff0c,#00ff0b,#00ff0a,#00ff08,#00ff07,#00ff05,#00ff04,#00ff03,#00ff02,#0f0,#0f0,#0f0,#0f0,#0f0,#0f0,#0f0,#0f0,#0f0,#0f0,#0f0,#01ff00,#05ff00,#0bff00,#1f0,#17ff00,#1dff00,#24ff00,#2cff00,#3f0,#3bff00,#43ff00,#4bff00,#54ff00,#5dff00,#6f0,#70ff00,#7aff00,#84ff00,#8eff00,#9f0,#a4ff00,#afff00,#bf0,#c7ff00,#d3ff00,#e0ff00,#edff00,#faff00,#fff600,#ffe900,#ffde00,#ffd300,#ffc900,#ffbf00,#ffb700,#ffae00,#ffa600,#ff9f00,#ff9800,#ff9200,#ff8c00,#ff8600,#ff8000,#ff7b00)"></i>
<i style="background:linear-gradient(90deg,#00ff16,#00ff14,#00ff13,#0f1,#00ff10,#00ff0f,#00ff0d,#00ff0c,#00ff0a,#00ff09,#00ff08,#00ff06,#00ff05,#00ff04,#00ff02,#00ff01,#0f0,#0f0,#0f0,#0f0,#0f0,#0f0,#0f0,#0f0,#0f0,#0f0,#01ff00,#06ff00,#0bff00,#1f0,#17ff00,#1eff00,#25ff00,#2dff00,#34ff00,#3cff00,#4f0,#4dff00,#5f0,#5fff00,#68ff00,#72ff00,#7bff00,#86ff00,#90ff00,#9bff00,#a6ff00,#b2ff00,#beff00,#caff00,#d6ff00,#e3ff00,#f0ff00,#feff00,#fff300,#ffe600,#ffdb00,#ffd000,#ffc600,#ffbd00,#ffb400,#ffac00,#ffa400,#ff9d00,#ff9600,#ff9000,#ff8900,#ff8400,#ff7e00,#ff7900)"></i>
<i style="background:linear-gradient(90deg,#00ff16,#00ff15,#00ff14,#00ff12,#0f1,#00ff0f,#00ff0e,#00ff0d,#00ff0b,#00ff0a,#00ff08,#00ff07,#00ff06,#00ff04,#00ff03,#00ff02,#0f0,#0f0,#0f0,#0f0,#0f0,#0f0,#0f0,#0f0,#0f0,#0f0,#01ff00,#06ff00,#0cff00,#12ff00,#18ff00,#1fff00,#26ff00,#2eff00,#35ff00,#3dff00,#46ff00,#4eff00,#57ff00,#60ff00,#6aff00,#73ff00,#7dff00,#8f0,#92ff00,#9dff00,#a9ff00,#b4ff00,#c0ff00,#cdff00,#d9ff00,#e7ff00,#f4ff00,#fffc00,#ffef00,#ffe300,#ffd700,#ffcd00,#ffc300,#ffba00,#ffb100,#ffa900,#ffa200,#ff9a00,#ff9400,#ff8d00,#ff8700,#ff8200,#ff7c00,#f70)"></i>
<i style="background:linear-gradient(90deg,#00ff17,#00ff16,#00ff15,#00ff13,#00ff12,#00ff10,#00ff0f,#00ff0d,#00ff0c,#00ff0b,#00ff09,#00ff08,#00ff06,#00ff05,#00ff04,#00ff02,#00ff01,#0f0,#0f0,#0f0,#0f0,#0f0,#0f0,#0f0,#0f0,#0f0,#02ff00,#07ff00,#0cff00,#12ff00,#19ff00,#20ff00,#27ff00,#2fff00,#36ff00,#3eff00,#47ff00,#50ff00,#58ff00,#62ff00,#6bff00,#75ff00,#7fff00,#8aff00,#95ff00,#a0ff00,#abff00,#b7ff00,#c3ff00,#d0ff00,#df0,#eaff00,#f8ff00,#fff800,#ffeb00,#ffdf00,#ffd400,#ffca00,#ffc000,#ffb700,#ffaf00,#ffa700,#ff9f00,#ff9800,#ff9100,#ff8b00,#ff8500,#ff8000,#ff7a00,#ff7500)"></i>
<i style="background:linear-gradient(90deg,#00ff18,#00ff17,#00ff16,#00ff14,#00ff13,#0f1,#00ff10,#00ff0e,#00ff0d,#00ff0b,#00ff0a,#00ff09,#00ff07,#00ff06,#00ff04,#00ff03,#00ff02,#0f0,#0f0,#0f0,#0f0,#0f0,#0f0,#0f0,#0f0,#0f0,#02ff00,#07ff00,#0dff00,#13ff00,#1aff00,#21ff00,#28ff00,#30ff00,#37ff00,#40ff00,#48ff00,#51ff00,#5aff00,#63ff00,#6dff00,#7f0,#81ff00,#8cff00,#97ff00,#a2ff00,#aeff00,#baff00,#c6ff00,#d3ff00,#e0ff00,#ef0,#fbff00,#fff500,#ffe800,#ffdc00,#ffd100,#ffc700,#ffbd00,#ffb400,#ffac00,#ffa400,#ff9d00,#ff9600,#ff8f00,#ff8900,#ff8300,#ff7e00,#ff7800,#ff7300)"></i>
<i style="background:linear-gradient(90deg,#00ff19,#00ff18,#00ff17,#00ff15,#00ff14,#00ff12,#0f1,#00ff0f,#00ff0e,#00ff0c,#00ff0b,#00ff09,#00ff08,#00ff07,#00ff05,#00ff04,#00ff02,#00ff01,#0f0,#0f0,#0f0,#0f0,#0f0,#0f0,#0f0,#0f0,#03ff00,#08ff00,#0eff00,#14ff00,#1aff00,#2f0,#29ff00,#31ff00,#39ff00,#41ff00,#4aff00,#52ff00,#5cff00,#65ff00,#6fff00,#79ff00,#84ff00,#8eff00,#9f0,#a5ff00,#b1ff00,#bdff00,#c9ff00,#d6ff00,#e3ff00,#f1ff00,#ff0,#fff100,#ffe400,#ffd900,#ffce00,#ffc400,#ffba00,#ffb200,#ffa900,#ffa200,#ff9a00,#ff9300,#ff8d00,#ff8700,#ff8100,#ff7c00,#f70,#ff7200)"></i>
<i style="background:linear-gradient(90deg,#00ff1a,#00ff19,#00ff18,#00ff16,#00ff15,#00ff13,#00ff12,#00ff10,#00ff0f,#00ff0d,#00ff0c,#00ff0a,#00ff09,#00ff07,#00ff06,#00ff04,#00ff03,#00ff02,#0f0,#0f0,#0f0,#0f0,#0f0,#0f0,#0f0,#0f0,#03ff00,#08ff00,#0eff00,#15ff00,#1bff00,#2f0,#2aff00,#32ff00,#3aff00,#42ff00,#4bff00,#54ff00,#5dff00,#67ff00,#71ff00,#7bff00,#86ff00,#91ff00,#9cff00,#a7ff00,#b3ff00,#c0ff00,#cf0,#d9ff00,#e7ff00,#f5ff00,#fffb00,#fe0,#ffe100,#ffd600,#ffcb00,#ffc100,#ffb800,#ffaf00,#ffa700,#ff9f00,#ff9800,#ff9100,#ff8b00,#ff8500,#ff7f00,#ff7a00,#ff7500,#ff7000)"></i>
<i style="background:linear-gradient(90deg,#00ff1b,#00ff1a,#00ff19,#00ff17,#00ff16,#00ff14,#00ff13,#0f1,#00ff10,#00ff0e,#00ff0d,#00ff0b,#00ff0a,#00ff08,#00ff07,#00ff05,#00ff04,#00ff02,#00ff01,#0f0,#0f0,#0f0,#0f0,#0f0,#0f0,#0f0,#03ff00,#09ff00,#0fff00,#15ff00,#1cff00,#23ff00,#2bff00,#3f0,#3bff00,#43ff00,#4cff00,#5f0,#5fff00,#69ff00,#73ff00,#7dff00,#8f0,#93ff00,#9eff00,#af0,#b6ff00,#c3ff00,#d0ff00,#df0,#eaff00,#f9ff00,#fff700,#ffea00,#ffde00,#ffd200,#ffc800,#ffbe00,#ffb500,#ffac00,#ffa400,#ff9d00,#ff9600,#ff8f00,#ff8900,#ff8300,#ff7d00,#ff7800,#ff7300,#ff6e00)"></i>
<i style="background:linear-gradient(90deg,#00ff1c,#00ff1b,#00ff1a,#00ff18,#00ff17,#00ff15,#00ff14,#00ff12,#0f1,#00ff0f,#00ff0e,#00ff0c,#00ff0b,#00ff09,#00ff07,#00ff06,#00ff05,#00ff03,#00ff02,#00ff01,#0f0,#0f0,#0f0,#0f0,#0f0,#0f0,#04ff00,#09ff00,#0fff00,#16ff00,#1dff00,#24ff00,#2cff00,#34ff00,#3cff00,#45ff00,#4eff00,#57ff00,#61ff00,#6aff00,#75ff00,#7fff00,#8aff00,#95ff00,#a1ff00,#adff00,#b9ff00,#c6ff00,#d3ff00,#e0ff00,#ef0,#fcff00,#fff300,#ffe600,#ffda00,#ffcf00,#ffc500,#fb0,#ffb200,#ffa900,#ffa200,#ff9a00,#ff9300,#ff8d00,#ff8600,#ff8100,#ff7b00,#ff7600,#ff7100,#ff6c00)"></i>
<i style="background:linear-gradient(90deg,#00ff1e,#00ff1c,#00ff1b,#00ff19,#00ff18,#00ff16,#00ff15,#00ff13,#00ff12,#00ff10,#00ff0e,#00ff0d,#00ff0b,#00ff0a,#00ff08,#00ff07,#00ff05,#00ff04,#00ff02,#00ff01,#0f0,#0f0,#0f0,#0f0,#0f0,#0f0,#04ff00,#0aff00,#10ff00,#17ff00,#1eff00,#25ff00,#2dff00,#35ff00,#3dff00,#46ff00,#4fff00,#59ff00,#62ff00,#6cff00,#7f0,#81ff00,#8cff00,#98ff00,#a3ff00,#b0ff00,#bcff00,#c9ff00,#d6ff00,#e4ff00,#f2ff00,#fffe00,#fff000,#ffe300,#ffd700,#fc0,#ffc200,#ffb800,#ffaf00,#ffa700,#ff9f00,#ff9800,#ff9100,#ff8a00,#ff8400,#ff7e00,#ff7900,#ff7400,#ff6f00,#ff6a00)"></i>
<i style="background:linear-gradient(90deg,#00ff1f,#00ff1d,#00ff1c,#00ff1a,#00ff19,#00ff17,#00ff16,#00ff14,#00ff13,#0f1,#00ff0f,#00ff0e,#00ff0c,#00ff0b,#00ff09,#00ff08,#00ff06,#00ff05,#00ff03,#00ff02,#00ff01,#0f0,#0f0,#0f0,#0f0,#0f0,#05ff00,#0aff00,#1f0,#17ff00,#1fff00,#26ff00,#2eff00,#36ff00,#3fff00,#48ff00,#51ff00,#5aff00,#64ff00,#6eff00,#79ff00,#83ff00,#8fff00,#9aff00,#a6ff00,#b2ff00,#bfff00,#cf0,#d9ff00,#e7ff00,#f6ff00,#fffa00,#ffec00,#ffdf00,#ffd400,#ffc900,#ffbf00,#ffb500,#ffac00,#ffa400,#ff9c00,#ff9500,#ff8e00,#f80,#ff8200,#ff7c00,#f70,#ff7200,#ff6d00,#ff6800)"></i>
<i style="background:linear-gradient(90deg,#00ff20,#00ff1e,#00ff1d,#00ff1b,#00ff1a,#00ff18,#00ff17,#00ff15,#00ff14,#00ff12,#00ff10,#00ff0f,#00ff0d,#00ff0c,#00ff0a,#00ff09,#00ff07,#00ff05,#00ff04,#00ff03,#00ff01,#0f0,#0f0,#0f0,#0f0,#0f0,#05ff00,#0bff00,#1f0,#18ff00,#1fff00,#27ff00,#2fff00,#37ff00,#40ff00,#49ff00,#52ff00,#5cff00,#6f0,#70ff00,#7bff00,#86ff00,#91ff00,#9dff00,#a9ff00,#b5ff00,#c2ff00,#cfff00,#df0,#ebff00,#faff00,#fff600,#ffe800,#ffdc00,#ffd000,#ffc600,#ffbc00,#ffb200,#fa0,#ffa200,#ff9a00,#ff9300,#ff8c00,#ff8600,#ff8000,#ff7a00,#ff7500,#ff7000,#ff6b00,#ff6700)"></i>
<i style="background:linear-gradient(90deg,#00ff21,#00ff1f,#00ff1e,#00ff1c,#00ff1b,#00ff19,#00ff18,#00ff16,#00ff15,#00ff13,#0f1,#00ff10,#00ff0e,#00ff0d,#00ff0b,#00ff09,#00ff08,#00ff06,#00ff05,#00ff03,#00ff02,#00ff01,#0f0,#0f0,#0f0,#01ff00,#06ff00,#0cff00,#12ff00,#19ff00,#20ff00,#28ff00,#30ff00,#39ff00,#41ff00,#4aff00,#54ff00,#5eff00,#68ff00,#72ff00,#7dff00,#8f0,#93ff00,#9fff00,#acff00,#b8ff00,#c5ff00,#d3ff00,#e0ff00,#efff00,#fdff00,#fff200,#ffe500,#ffd800,#ffcd00,#ffc200,#ffb900,#ffaf00,#ffa700,#ff9f00,#ff9700,#ff9000,#ff8a00,#ff8400,#ff7e00,#ff7800,#ff7300,#ff6e00,#ff6900,#ff6500)"></i>
<i style="background:linear-gradient(90deg,#0f2,#00ff20,#00ff1f,#00ff1d,#00ff1c,#00ff1a,#00ff19,#00ff17,#00ff16,#00ff14,#00ff12,#0f1,#00ff0f,#00ff0e,#00ff0c,#00ff0a,#00ff09,#00ff07,#00ff06,#00ff04,#00ff03,#00ff01,#0f0,#0f0,#0f0,#01ff00,#06ff00,#0cff00,#13ff00,#1aff00,#21ff00,#29ff00,#31ff00,#3aff00,#43ff00,#4cff00,#5f0,#5fff00,#69ff00,#74ff00,#7fff00,#8aff00,#96ff00,#a2ff00,#aeff00,#bf0,#c8ff00,#d6ff00,#e4ff00,#f3ff00,#fffc00,#fe0,#ffe100,#ffd500,#ffca00,#ffbf00,#ffb600,#ffad00,#ffa400,#ff9c00,#ff9500,#ff8e00,#f80,#ff8100,#ff7c00,#ff7600,#ff7100,#ff6c00,#ff6700,#ff6300)"></i>
<i style="background:linear-gradient(90deg,#00ff23,#0f2,#00ff20,#00ff1f,#00ff1d,#00ff1b,#00ff1a,#00ff18,#00ff17,#00ff15,#00ff13,#00ff12,#00ff10,#00ff0f,#00ff0d,#00ff0b,#00ff0a,#00ff08,#00ff07,#00ff05,#00ff03,#00ff02,#00ff01,#0f0,#0f0,#01ff00,#07ff00,#0dff00,#14ff00,#1bff00,#2f0,#2aff00,#32ff00,#3bff00,#4f0,#4dff00,#57ff00,#61ff00,#6bff00,#76ff00,#81ff00,#8dff00,#98ff00,#a5ff00,#b1ff00,#beff00,#cf0,#d9ff00,#e8ff00,#f7ff00,#fff800,#ffea00,#fd0,#ffd200,#ffc600,#ffbc00,#ffb300,#fa0,#ffa200,#ff9a00,#ff9300,#ff8c00,#ff8500,#ff7f00,#ff7a00,#ff7400,#ff6f00,#ff6a00,#f60,#ff6100)"></i>
<i style="background:linear-gradient(90deg,#00ff24,#00ff23,#00ff21,#00ff20,#00ff1e,#00ff1d,#00ff1b,#00ff19,#00ff18,#00ff16,#00ff15,#00ff13,#0f1,#00ff10,#00ff0e,#00ff0c,#00ff0b,#00ff09,#00ff07,#00ff06,#00ff04,#00ff03,#00ff01,#0f0,#0f0,#02ff00,#07ff00,#0eff00,#14ff00,#1cff00,#23ff00,#2bff00,#34ff00,#3cff00,#45ff00,#4fff00,#59ff00,#63ff00,#6dff00,#78ff00,#83ff00,#8fff00,#9bff00,#a7ff00,#b4ff00,#c1ff00,#cfff00,#df0,#ecff00,#fbff00,#fff400,#ffe700,#ffda00,#ffce00,#ffc300,#ffb900,#ffb000,#ffa700,#ff9f00,#ff9700,#ff9000,#ff8900,#ff8300,#ff7d00,#f70,#ff7200,#ff6d00,#ff6800,#ff6400,#ff6000)"></i>
<i style="background:linear-gradient(90deg,#00ff25,#00ff24,#0f2,#00ff21,#00ff1f,#00ff1e,#00ff1c,#00ff1b,#00ff19,#00ff17,#00ff16,#00ff14,#00ff12,#0f1,#00ff0f,#00ff0d,#00ff0c,#00ff0a,#00ff08,#00ff07,#00ff05,#00ff03,#00ff02,#00ff01,#0f0,#02ff00,#08ff00,#0eff00,#15ff00,#1cff00,#24ff00,#2cff00,#35ff00,#3eff00,#47ff00,#50ff00,#5aff00,#65ff00,#6fff00,#7aff00,#86ff00,#91ff00,#9eff00,#af0,#b7ff00,#c5ff00,#d2ff00,#e1ff00,#efff00,#ff0,#fff100,#ffe300,#ffd600,#ffcb00,#ffc000,#ffb600,#ffad00,#ffa400,#ff9c00,#ff9500,#ff8e00,#ff8700,#ff8100,#ff7b00,#ff7500,#ff7000,#ff6b00,#f60,#ff6200,#ff5e00)"></i>
<i style="background:linear-gradient(90deg,#00ff27,#00ff25,#00ff24,#0f2,#00ff20,#00ff1f,#00ff1d,#00ff1c,#00ff1a,#00ff18,#00ff17,#00ff15,#00ff13,#00ff12,#00ff10,#00ff0e,#00ff0d,#00ff0b,#00ff09,#00ff08,#00ff06,#00ff04,#00ff03,#00ff01,#0f0,#03ff00,#08ff00,#0fff00,#16ff00,#1dff00,#25ff00,#2dff00,#36ff00,#3fff00,#48ff00,#52ff00,#5cff00,#67ff00,#71ff00,#7dff00,#8f0,#94ff00,#a0ff00,#adff00,#baff00,#c8ff00,#d6ff00,#e4ff00,#f3ff00,#fffb00,#ffed00,#ffdf00,#ffd300,#ffc700,#ffbd00,#ffb300,#fa0,#ffa200,#ff9a00,#ff9200,#ff8b00,#ff8500,#ff7f00,#ff7900,#ff7300,#ff6e00,#ff6900,#ff6500,#ff6000,#ff5c00)"></i>
<i style="background:linear-gradient(90deg,#00ff28,#00ff26,#00ff25,#00ff23,#0f2,#00ff20,#00ff1e,#00ff1d,#00ff1b,#00ff1a,#00ff18,#00ff16,#00ff15,#00ff13,#0f1,#00ff0f,#00ff0e,#00ff0c,#00ff0a,#00ff09,#00ff07,#00ff05,#00ff04,#00ff02,#00ff01,#03ff01,#09ff00,#10ff00,#17ff00,#1eff00,#26ff00,#2fff00,#37ff00,#40ff00,#4aff00,#54ff00,#5eff00,#68ff00,#73ff00,#7fff00,#8aff00,#97ff00,#a3ff00,#b0ff00,#bdff00,#cbff00,#d9ff00,#e8ff00,#f7ff00,#fff700,#ffe900,#ffdc00,#ffcf00,#ffc400,#ffba00,#ffb000,#ffa700,#ff9f00,#ff9700,#ff9000,#ff8900,#ff8200,#ff7c00,#f70,#ff7100,#ff6c00,#ff6700,#ff6300,#ff5e00,#ff5a00)"></i>
<i style="background:linear-gradient(90deg,#00ff29,#00ff28,#00ff26,#00ff24,#00ff23,#00ff21,#00ff20,#00ff1e,#00ff1c,#00ff1b,#00ff19,#00ff17,#00ff16,#00ff14,#00ff12,#0f1,#00ff0f,#00ff0d,#00ff0b,#00ff0a,#00ff08,#00ff06,#00ff04,#00ff03,#00ff01,#04ff02,#0aff00,#10ff00,#17ff00,#1fff00,#27ff00,#30ff00,#39ff00,#42ff00,#4bff00,#5f0,#60ff00,#6aff00,#76ff00,#81ff00,#8dff00,#9f0,#a6ff00,#b3ff00,#c1ff00,#cfff00,#df0,#ecff00,#fcff00,#fff300,#ffe500,#ffd800,#fc0,#ffc100,#ffb700,#ffad00,#ffa400,#ff9c00,#ff9400,#ff8d00,#ff8600,#ff8000,#ff7a00,#ff7500,#ff6f00,#ff6a00,#ff6500,#ff6100,#ff5d00,#ff5900)"></i>
<i style="background:linear-gradient(90deg,#00ff2a,#00ff29,#00ff27,#00ff26,#00ff24,#00ff23,#00ff21,#00ff1f,#00ff1e,#00ff1c,#00ff1a,#00ff19,#00ff17,#00ff15,#00ff13,#00ff12,#00ff10,#00ff0e,#00ff0c,#00ff0b,#00ff09,#00ff07,#00ff05,#00ff04,#00ff02,#04ff03,#0aff01,#1f0,#18ff00,#20ff00,#28ff00,#31ff00,#3aff00,#43ff00,#4dff00,#57ff00,#62ff00,#6cff00,#78ff00,#83ff00,#8fff00,#9cff00,#a9ff00,#b6ff00,#c4ff00,#d2ff00,#e1ff00,#f0ff00,#fffe00,#ffef00,#ffe100,#ffd400,#ffc900,#ffbe00,#ffb400,#fa0,#ffa200,#f90,#ff9200,#ff8b00,#ff8400,#ff7e00,#ff7800,#ff7200,#ff6d00,#ff6800,#ff6400,#ff5f00,#ff5b00,#ff5700)"></i>
<i style="background:linear-gradient(90deg,#00ff2c,#00ff2a,#00ff29,#00ff27,#00ff25,#00ff24,#0f2,#00ff21,#00ff1f,#00ff1d,#00ff1b,#00ff1a,#00ff18,#00ff16,#00ff15,#00ff13,#0f1,#00ff0f,#00ff0d,#00ff0c,#00ff0a,#00ff08,#00ff06,#00ff05,#00ff03,#05ff03,#0bff02,#12ff00,#19ff00,#21ff00,#29ff00,#32ff00,#3bff00,#45ff00,#4fff00,#59ff00,#63ff00,#6eff00,#7aff00,#86ff00,#92ff00,#9fff00,#acff00,#b9ff00,#c7ff00,#d6ff00,#e5ff00,#f4ff00,#fffa00,#ffeb00,#fd0,#ffd100,#ffc500,#ffba00,#ffb100,#ffa700,#ff9f00,#ff9700,#ff8f00,#f80,#ff8200,#ff7c00,#ff7600,#ff7000,#ff6b00,#f60,#ff6200,#ff5d00,#ff5900,#f50)"></i>
<i style="background:linear-gradient(90deg,#00ff2d,#00ff2c,#00ff2a,#00ff28,#00ff27,#00ff25,#00ff23,#0f2,#00ff20,#00ff1e,#00ff1d,#00ff1b,#00ff19,#00ff17,#00ff16,#00ff14,#00ff12,#00ff10,#00ff0f,#00ff0d,#00ff0b,#00ff09,#00ff07,#00ff06,#00ff04,#05ff04,#0bff03,#12ff01,#1aff00,#2f0,#2aff00,#3f0,#3dff00,#46ff00,#50ff00,#5bff00,#65ff00,#71ff00,#7cff00,#8f0,#95ff00,#a1ff00,#afff00,#bdff00,#cbff00,#d9ff00,#e9ff00,#f8ff00,#fff600,#ffe700,#ffda00,#ffcd00,#ffc200,#ffb700,#ffae00,#ffa400,#ff9c00,#ff9400,#ff8d00,#ff8600,#ff7f00,#ff7900,#ff7400,#ff6e00,#ff6900,#ff6400,#ff6000,#ff5b00,#ff5700,#ff5400)"></i>
<i style="background:linear-gradient(90deg,#00ff2e,#00ff2d,#00ff2b,#00ff2a,#00ff28,#00ff26,#00ff25,#00ff23,#00ff21,#00ff20,#00ff1e,#00ff1c,#00ff1a,#00ff19,#00ff17,#00ff15,#00ff13,#0f1,#00ff10,#00ff0e,#00ff0c,#00ff0a,#00ff08,#00ff07,#00ff07,#06ff05,#0cff04,#13ff02,#1bff00,#23ff00,#2cff00,#35ff00,#3eff00,#48ff00,#52ff00,#5cff00,#67ff00,#73ff00,#7eff00,#8bff00,#97ff00,#a4ff00,#b2ff00,#c0ff00,#ceff00,#df0,#edff00,#fdff00,#fff100,#ffe300,#ffd600,#ffca00,#ffbe00,#ffb400,#fa0,#ffa200,#f90,#ff9200,#ff8a00,#ff8400,#ff7d00,#f70,#ff7200,#ff6c00,#ff6700,#ff6200,#ff5e00,#ff5a00,#ff5600,#ff5200)"></i>
<i style="background:linear-gradient(90deg,#00ff30,#00ff2e,#00ff2d,#00ff2b,#00ff29,#00ff28,#00ff26,#00ff24,#00ff23,#00ff21,#00ff1f,#00ff1d,#00ff1c,#00ff1a,#00ff18,#00ff16,#00ff14,#00ff13,#0f1,#00ff0f,#00ff0d,#00ff0b,#00ff09,#00ff08,#01ff08,#06ff06,#0dff05,#14ff03,#1cff01,#24ff00,#2dff00,#36ff00,#3fff00,#49ff00,#54ff00,#5eff00,#69ff00,#75ff00,#81ff00,#8dff00,#9aff00,#a7ff00,#b5ff00,#c3ff00,#d2ff00,#e1ff00,#f1ff00,#fffd00,#ffed00,#ffdf00,#ffd200,#ffc600,#fb0,#ffb100,#ffa700,#ff9f00,#ff9700,#ff8f00,#f80,#ff8100,#ff7b00,#ff7500,#ff6f00,#ff6a00,#ff6500,#ff6100,#ff5c00,#ff5800,#ff5400,#ff5000)"></i>
<i style="background:linear-gradient(90deg,#00ff31,#00ff30,#00ff2e,#00ff2c,#00ff2b,#00ff29,#00ff27,#00ff26,#00ff24,#0f2,#00ff21,#00ff1f,#00ff1d,#00ff1b,#00ff19,#00ff18,#00ff16,#00ff14,#00ff12,#00ff10,#00ff0e,#00ff0c,#00ff0a,#00ff09,#01ff09,#07ff07,#0dff06,#15ff04,#1dff02,#25ff00,#2eff00,#37ff00,#41ff00,#4bff00,#5f0,#60ff00,#6bff00,#7f0,#83ff00,#90ff00,#9dff00,#af0,#b8ff00,#c7ff00,#d6ff00,#e5ff00,#f5ff00,#fff800,#ffe900,#ffdb00,#ffce00,#ffc300,#ffb800,#ffae00,#ffa500,#ff9c00,#ff9400,#ff8c00,#ff8500,#ff7f00,#ff7900,#ff7300,#ff6d00,#ff6800,#ff6300,#ff5f00,#ff5a00,#ff5600,#ff5200,#ff4f00)"></i>
<i style="background:linear-gradient(90deg,#0f3,#00ff31,#00ff2f,#00ff2e,#00ff2c,#00ff2b,#00ff29,#00ff27,#00ff25,#00ff24,#0f2,#00ff20,#00ff1e,#00ff1d,#00ff1b,#00ff19,#00ff17,#00ff15,#00ff13,#0f1,#00ff0f,#00ff0d,#00ff0c,#00ff0a,#01ff0b,#07ff09,#0eff07,#16ff05,#1eff03,#26ff01,#2fff00,#38ff00,#42ff00,#4cff00,#57ff00,#62ff00,#6eff00,#79ff00,#86ff00,#93ff00,#a0ff00,#adff00,#bcff00,#caff00,#daff00,#e9ff00,#faff00,#fff400,#ffe500,#ffd700,#ffcb00,#ffbf00,#ffb500,#ffab00,#ffa200,#f90,#ff9100,#ff8a00,#ff8300,#ff7c00,#ff7600,#ff7100,#ff6b00,#f60,#ff6100,#ff5d00,#ff5800,#ff5400,#ff5100,#ff4d00)"></i>
<i style="background:linear-gradient(90deg,#00ff34,#0f3,#00ff31,#00ff2f,#00ff2e,#00ff2c,#00ff2a,#00ff29,#00ff27,#00ff25,#00ff23,#00ff21,#00ff20,#00ff1e,#00ff1c,#00ff1a,#00ff18,#00ff16,#00ff14,#00ff13,#0f1,#00ff0f,#00ff0d,#00ff0b,#02ff0c,#08ff0a,#0fff08,#17ff06,#1fff04,#27ff02,#30ff00,#3aff00,#4f0,#4eff00,#59ff00,#64ff00,#70ff00,#7cff00,#8f0,#95ff00,#a3ff00,#b1ff00,#bfff00,#ceff00,#df0,#edff00,#feff00,#fff000,#ffe100,#ffd400,#ffc700,#ffbc00,#ffb100,#ffa800,#ff9f00,#ff9600,#ff8e00,#ff8700,#ff8000,#ff7a00,#ff7400,#ff6e00,#ff6900,#ff6400,#ff5f00,#ff5b00,#ff5700,#ff5300,#ff4f00,#ff4b00)"></i>
<i style="background:linear-gradient(90deg,#00ff36,#00ff34,#00ff32,#00ff31,#00ff2f,#00ff2d,#00ff2c,#00ff2a,#00ff28,#00ff26,#00ff25,#00ff23,#00ff21,#00ff1f,#00ff1d,#00ff1b,#00ff1a,#00ff18,#00ff16,#00ff14,#00ff12,#00ff10,#00ff0e,#00ff0c,#02ff0d,#09ff0b,#10ff09,#17ff07,#20ff05,#28ff03,#32ff01,#3bff00,#45ff00,#50ff00,#5bff00,#6f0,#72ff00,#7eff00,#8bff00,#98ff00,#a6ff00,#b4ff00,#c3ff00,#d2ff00,#e1ff00,#f2ff00,#fffb00,#ffec00,#fd0,#ffd000,#ffc400,#ffb800,#ffae00,#ffa500,#ff9c00,#ff9400,#ff8c00,#ff8500,#ff7e00,#ff7800,#ff7200,#ff6c00,#ff6700,#ff6200,#ff5d00,#ff5900,#f50,#ff5100,#ff4d00,#ff4a00)"></i>
<i style="background:linear-gradient(90deg,#00ff37,#00ff35,#00ff34,#00ff32,#00ff31,#00ff2f,#00ff2d,#00ff2b,#00ff2a,#00ff28,#00ff26,#00ff24,#0f2,#00ff21,#00ff1f,#00ff1d,#00ff1b,#00ff19,#00ff17,#00ff15,#00ff13,#0f1,#00ff0f,#00ff0d,#03ff0e,#09ff0c,#10ff0a,#18ff08,#21ff06,#2aff04,#33ff02,#3dff00,#47ff00,#52ff00,#5dff00,#68ff00,#74ff00,#81ff00,#8eff00,#9bff00,#a9ff00,#b7ff00,#c6ff00,#d6ff00,#e6ff00,#f6ff00,#fff700,#ffe700,#ffd900,#fc0,#ffc000,#ffb500,#ffab00,#ffa200,#f90,#ff9100,#ff8900,#ff8200,#ff7c00,#ff7500,#ff7000,#ff6a00,#ff6500,#ff6000,#ff5c00,#ff5700,#ff5300,#ff4f00,#ff4c00,#ff4800)"></i>
<i style="background:linear-gradient(90deg,#00ff39,#00ff37,#00ff35,#00ff34,#00ff32,#00ff30,#00ff2f,#00ff2d,#00ff2b,#00ff29,#00ff28,#00ff26,#00ff24,#0f2,#00ff20,#00ff1e,#00ff1c,#00ff1a,#00ff18,#00ff16,#00ff14,#00ff12,#00ff10,#00ff0e,#03ff0f,#0aff0d,#11ff0b,#19ff09,#22ff07,#2bff05,#34ff03,#3eff01,#49ff00,#53ff00,#5fff00,#6aff00,#7f0,#83ff00,#90ff00,#9eff00,#acff00,#bf0,#caff00,#daff00,#eaff00,#fbff00,#fff200,#ffe300,#ffd500,#ffc800,#ffbd00,#ffb200,#ffa800,#ff9f00,#ff9600,#ff8e00,#ff8700,#ff8000,#ff7900,#ff7300,#ff6d00,#ff6800,#ff6300,#ff5e00,#ff5a00,#f50,#ff5100,#ff4d00,#ff4a00,#ff4600)"></i>
<i style="background:linear-gradient(90deg,#00ff3a,#00ff39,#00ff37,#00ff35,#00ff34,#00ff32,#00ff30,#00ff2e,#00ff2d,#00ff2b,#00ff29,#00ff27,#00ff25,#00ff24,#0f2,#00ff20,#00ff1e,#00ff1c,#00ff1a,#00ff18,#00ff16,#00ff14,#00ff12,#00ff10,#04ff11,#0bff0f,#12ff0d,#1aff0a,#23ff08,#2cff06,#36ff04,#40ff02,#4aff00,#5f0,#61ff00,#6dff00,#79ff00,#86ff00,#93ff00,#a1ff00,#afff00,#beff00,#ceff00,#deff00,#ef0,#ff0,#fe0,#ffdf00,#ffd100,#ffc500,#ffb900,#ffae00,#ffa500,#ff9c00,#ff9300,#ff8b00,#ff8400,#ff7d00,#f70,#ff7100,#ff6b00,#f60,#ff6100,#ff5c00,#ff5800,#ff5400,#ff5000,#ff4c00,#ff4800,#ff4500)"></i>
<i style="background:linear-gradient(90deg,#00ff3c,#00ff3a,#00ff39,#00ff37,#00ff35,#0f3,#00ff32,#00ff30,#00ff2e,#00ff2c,#00ff2b,#00ff29,#00ff27,#00ff25,#00ff23,#00ff21,#00ff1f,#00ff1d,#00ff1b,#00ff19,#00ff17,#00ff15,#00ff13,#0f1,#04ff12,#0bff10,#13ff0e,#1bff0c,#24ff09,#2dff07,#37ff05,#41ff03,#4cff01,#57ff00,#63ff00,#6fff00,#7bff00,#8f0,#96ff00,#a4ff00,#b3ff00,#c2ff00,#d1ff00,#e2ff00,#f3ff00,#fffa00,#ffea00,#ffdb00,#ffcd00,#ffc100,#ffb600,#ffab00,#ffa200,#f90,#ff9000,#ff8900,#ff8100,#ff7b00,#ff7400,#ff6f00,#ff6900,#ff6400,#ff5f00,#ff5a00,#ff5600,#ff5200,#ff4e00,#ff4a00,#ff4700,#ff4300)"></i>
<i style="background:linear-gradient(90deg,#00ff3d,#00ff3c,#00ff3a,#00ff38,#00ff37,#00ff35,#0f3,#00ff32,#00ff30,#00ff2e,#00ff2c,#00ff2a,#00ff28,#00ff27,#00ff25,#00ff23,#00ff21,#00ff1f,#00ff1d,#00ff1b,#00ff19,#00ff16,#00ff14,#00ff12,#05ff14,#0cff11,#14ff0f,#1cff0d,#25ff0b,#2fff09,#38ff06,#43ff04,#4eff02,#59ff00,#65ff00,#71ff00,#7eff00,#8bff00,#9f0,#a7ff00,#b6ff00,#c5ff00,#d5ff00,#e6ff00,#f7ff00,#fff500,#ffe500,#ffd700,#ffca00,#ffbd00,#ffb200,#ffa800,#ff9f00,#ff9600,#ff8e00,#ff8600,#ff7f00,#ff7800,#ff7200,#ff6c00,#ff6700,#ff6200,#ff5d00,#ff5800,#ff5400,#ff5000,#ff4c00,#ff4800,#ff4500,#ff4200)"></i>
<i style="background:linear-gradient(90deg,#00ff3f,#00ff3d,#00ff3c,#00ff3a,#00ff38,#00ff37,#00ff35,#0f3,#00ff31,#00ff30,#00ff2e,#00ff2c,#00ff2a,#00ff28,#00ff26,#00ff24,#0f2,#00ff20,#00ff1e,#00ff1c,#00ff1a,#00ff18,#00ff16,#00ff14,#06ff15,#0dff13,#15ff11,#1dff0e,#26ff0c,#30ff0a,#3aff08,#44ff05,#4fff03,#5bff01,#67ff00,#73ff00,#80ff00,#8eff00,#9cff00,#af0,#baff00,#c9ff00,#daff00,#eaff00,#fcff00,#fff100,#ffe100,#ffd300,#ffc600,#ffba00,#ffaf00,#ffa500,#ff9b00,#ff9300,#ff8b00,#ff8300,#ff7c00,#ff7600,#ff7000,#ff6a00,#ff6500,#ff6000,#ff5b00,#ff5600,#ff5200,#ff4e00,#ff4a00,#ff4700,#ff4300,#ff4000)"></i>
<i style="background:linear-gradient(90deg,#00ff41,#00ff3f,#00ff3d,#00ff3c,#00ff3a,#00ff38,#00ff37,#00ff35,#0f3,#00ff31,#00ff2f,#00ff2e,#00ff2c,#00ff2a,#00ff28,#00ff26,#00ff24,#0f2,#00ff20,#00ff1e,#00ff1c,#00ff19,#00ff17,#00ff19,#06ff17,#0dff14,#16ff12,#1eff10,#27ff0d,#31ff0b,#3bff09,#46ff07,#51ff04,#5dff02,#69ff00,#76ff00,#83ff00,#91ff00,#9fff00,#aeff00,#bdff00,#cdff00,#deff00,#efff00,#fffd00,#ffec00,#fd0,#ffcf00,#ffc200,#ffb600,#ffac00,#ffa200,#ff9800,#ff9000,#f80,#ff8100,#ff7a00,#ff7300,#ff6d00,#ff6800,#ff6300,#ff5e00,#ff5900,#f50,#ff5000,#ff4c00,#ff4900,#ff4500,#ff4200,#ff3f00)"></i>
<i style="background:linear-gradient(90deg,#00ff42,#00ff41,#00ff3f,#00ff3e,#00ff3c,#00ff3a,#00ff38,#00ff37,#00ff35,#0f3,#00ff31,#00ff2f,#00ff2d,#00ff2b,#00ff29,#00ff27,#00ff25,#00ff23,#00ff21,#00ff1f,#00ff1d,#00ff1b,#00ff19,#01ff1a,#07ff18,#0eff16,#16ff14,#1fff11,#29ff0f,#33ff0d,#3dff0a,#48ff08,#53ff06,#5fff03,#6bff01,#78ff00,#86ff00,#94ff00,#a2ff00,#b1ff00,#c1ff00,#d1ff00,#e2ff00,#f4ff00,#fff800,#ffe800,#ffd900,#ffcb00,#ffbe00,#ffb300,#ffa800,#ff9e00,#ff9500,#ff8d00,#ff8500,#ff7e00,#f70,#ff7100,#ff6b00,#f60,#ff6000,#ff5c00,#ff5700,#ff5300,#ff4f00,#ff4b00,#ff4700,#ff4300,#ff4000,#ff3d00)"></i>
<i style="background:linear-gradient(90deg,#0f4,#00ff43,#00ff41,#00ff3f,#00ff3e,#00ff3c,#00ff3a,#00ff38,#00ff36,#00ff35,#0f3,#00ff31,#00ff2f,#00ff2d,#00ff2b,#00ff29,#00ff27,#00ff25,#00ff23,#00ff21,#00ff1f,#00ff1c,#00ff1a,#01ff1c,#07ff1a,#0fff17,#17ff15,#20ff13,#2aff10,#34ff0e,#3fff0c,#4aff09,#55ff07,#61ff05,#6eff02,#7bff00,#89ff00,#97ff00,#a6ff00,#b5ff00,#c5ff00,#d5ff00,#e6ff00,#f8ff00,#fff400,#ffe300,#ffd400,#ffc700,#fb0,#ffaf00,#ffa500,#ff9b00,#ff9200,#ff8a00,#ff8300,#ff7c00,#ff7500,#ff6f00,#ff6900,#ff6300,#ff5e00,#ff5a00,#f50,#ff5100,#ff4d00,#ff4900,#ff4500,#ff4200,#ff3f00,#ff3b00)"></i>
<i style="background:linear-gradient(90deg,#00ff46,#0f4,#00ff43,#00ff41,#00ff3f,#00ff3e,#00ff3c,#00ff3a,#00ff38,#00ff36,#00ff34,#0f3,#00ff31,#00ff2f,#00ff2d,#00ff2b,#00ff29,#00ff27,#00ff25,#0f2,#00ff20,#00ff1e,#00ff1c,#01ff1e,#08ff1b,#10ff19,#18ff17,#21ff14,#2bff12,#35ff0f,#40ff0d,#4bff0b,#57ff08,#63ff06,#70ff04,#7eff01,#8bff00,#9aff00,#a9ff00,#b8ff00,#c9ff00,#daff00,#ebff00,#fdff00,#ffef00,#ffdf00,#ffd000,#ffc300,#ffb700,#ffac00,#ffa200,#ff9800,#ff8f00,#ff8700,#ff8000,#ff7900,#ff7200,#ff6c00,#ff6700,#ff6100,#ff5c00,#ff5800,#ff5300,#ff4f00,#ff4b00,#ff4700,#f40,#ff4000,#ff3d00,#ff3a00)"></i>
<i style="background:linear-gradient(90deg,#00ff48,#00ff46,#00ff45,#00ff43,#00ff41,#00ff3f,#00ff3e,#00ff3c,#00ff3a,#00ff38,#00ff36,#00ff34,#00ff32,#00ff30,#00ff2e,#00ff2c,#00ff2a,#00ff28,#00ff26,#00ff24,#0f2,#00ff20,#00ff1d,#02ff1f,#09ff1d,#11ff1b,#19ff18,#23ff16,#2cff13,#37ff11,#42ff0f,#4dff0c,#59ff0a,#66ff07,#73ff05,#80ff02,#8eff00,#9dff00,#acff00,#bcff00,#cdff00,#deff00,#f0ff00,#fffc00,#ffea00,#ffda00,#fc0,#ffbf00,#ffb300,#ffa800,#ff9e00,#ff9500,#ff8d00,#ff8500,#ff7d00,#ff7600,#ff7000,#ff6a00,#ff6400,#ff5f00,#ff5a00,#ff5600,#ff5100,#ff4d00,#ff4900,#ff4500,#ff4200,#ff3f00,#ff3b00,#ff3800)"></i>
<i style="background:linear-gradient(90deg,#00ff4a,#00ff48,#00ff46,#00ff45,#00ff43,#00ff41,#00ff3f,#00ff3e,#00ff3c,#00ff3a,#00ff38,#00ff36,#00ff34,#00ff32,#00ff30,#00ff2e,#00ff2c,#00ff2a,#00ff28,#00ff26,#00ff24,#00ff21,#00ff1f,#03ff21,#0aff1f,#12ff1c,#1aff1a,#24ff18,#2eff15,#38ff13,#43ff10,#4fff0e,#5bff0b,#68ff09,#75ff06,#83ff04,#91ff01,#a0ff00,#b0ff00,#c0ff00,#d1ff00,#e2ff00,#f5ff00,#fff700,#ffe600,#ffd600,#ffc800,#fb0,#ffb000,#ffa500,#ff9b00,#ff9200,#ff8a00,#ff8200,#ff7b00,#ff7400,#ff6e00,#ff6800,#ff6200,#ff5d00,#ff5800,#ff5400,#ff4f00,#ff4b00,#ff4700,#f40,#ff4000,#ff3d00,#ff3a00,#ff3700)"></i>
<i style="background:linear-gradient(90deg,#00ff4c,#00ff4a,#00ff48,#00ff47,#00ff45,#00ff43,#00ff41,#00ff40,#00ff3e,#00ff3c,#00ff3a,#00ff38,#00ff36,#00ff34,#00ff32,#00ff30,#00ff2e,#00ff2c,#00ff2a,#00ff28,#00ff25,#00ff23,#00ff21,#03ff23,#0aff21,#12ff1e,#1bff1c,#25ff19,#2fff17,#3aff14,#45ff12,#51ff0f,#5dff0d,#6aff0a,#78ff07,#86ff05,#94ff03,#a4ff00,#b4ff00,#c4ff00,#d5ff00,#e7ff00,#faff00,#fff200,#ffe100,#ffd200,#ffc400,#ffb800,#ffac00,#ffa200,#ff9800,#ff8f00,#ff8700,#ff7f00,#ff7800,#ff7100,#ff6b00,#ff6500,#ff6000,#ff5b00,#ff5600,#ff5200,#ff4d00,#ff4900,#ff4600,#ff4200,#ff3f00,#ff3b00,#ff3800,#ff3500)"></i>
<i style="background:linear-gradient(90deg,#00ff4e,#00ff4c,#00ff4a,#00ff49,#00ff47,#00ff45,#00ff43,#00ff41,#00ff40,#00ff3e,#00ff3c,#00ff3a,#00ff38,#00ff36,#00ff34,#00ff32,#00ff30,#00ff2e,#00ff2c,#00ff29,#00ff27,#00ff25,#00ff23,#04ff25,#0bff22,#13ff20,#1dff1e,#26ff1b,#31ff19,#3cff16,#47ff13,#53ff11,#60ff0e,#6dff0c,#7aff09,#89ff06,#98ff04,#a7ff01,#b7ff00,#c8ff00,#daff00,#ecff00,#ff0,#ffed00,#ffdc00,#ffce00,#ffc000,#ffb400,#ffa900,#ff9e00,#ff9500,#ff8c00,#ff8400,#ff7c00,#ff7500,#ff6f00,#ff6900,#ff6300,#ff5e00,#ff5900,#ff5400,#ff5000,#ff4c00,#ff4800,#f40,#ff4000,#ff3d00,#ff3a00,#ff3700,#ff3400)"></i>
<i style="background:linear-gradient(90deg,#00ff50,#00ff4e,#00ff4c,#00ff4a,#00ff49,#00ff47,#00ff45,#00ff43,#00ff42,#00ff40,#00ff3e,#00ff3c,#00ff3a,#00ff38,#00ff36,#00ff34,#00ff32,#00ff30,#00ff2d,#00ff2b,#00ff29,#00ff27,#00ff24,#04ff27,#0cff24,#14ff22,#1eff1f,#28ff1d,#32ff1a,#3dff18,#49ff15,#55ff12,#62ff10,#6fff0d,#7dff0a,#8cff08,#9bff05,#abff03,#bf0,#cf0,#deff00,#f1ff00,#fffa00,#ffe800,#ffd800,#ffc900,#ffbc00,#ffb000,#ffa500,#ff9b00,#ff9200,#ff8900,#ff8100,#ff7a00,#ff7300,#ff6c00,#f60,#ff6100,#ff5c00,#ff5700,#ff5200,#ff4e00,#ff4a00,#ff4600,#ff4200,#ff3f00,#ff3b00,#ff3800,#ff3500,#f30)"></i>
<i style="background:linear-gradient(90deg,#00ff52,#00ff50,#00ff4e,#00ff4c,#00ff4b,#00ff49,#00ff47,#00ff45,#0f4,#00ff42,#00ff40,#00ff3e,#00ff3c,#00ff3a,#00ff38,#00ff36,#00ff34,#00ff31,#00ff2f,#00ff2d,#00ff2b,#00ff29,#00ff26,#05ff29,#0dff26,#15ff24,#1fff21,#29ff1f,#34ff1c,#3fff1a,#4bff17,#57ff14,#64ff12,#72ff0f,#80ff0c,#8fff09,#9eff07,#aeff04,#bfff02,#d1ff00,#e3ff00,#f6ff00,#fff500,#ffe300,#ffd400,#ffc500,#ffb800,#ffac00,#ffa200,#ff9800,#ff8f00,#ff8600,#ff7e00,#f70,#ff7000,#ff6a00,#ff6400,#ff5f00,#ff5900,#f50,#ff5000,#ff4c00,#ff4800,#f40,#ff4000,#ff3d00,#ff3a00,#ff3700,#ff3400,#ff3100)"></i>
<i style="background:linear-gradient(90deg,#00ff54,#00ff52,#00ff50,#00ff4f,#00ff4d,#00ff4b,#00ff49,#00ff47,#00ff46,#0f4,#00ff42,#00ff40,#00ff3e,#00ff3c,#00ff3a,#00ff38,#00ff36,#0f3,#00ff31,#00ff2f,#00ff2d,#00ff2a,#00ff28,#06ff2b,#0dff28,#16ff26,#20ff23,#2aff21,#35ff1e,#41ff1b,#4dff19,#59ff16,#67ff13,#74ff11,#83ff0e,#92ff0b,#a2ff08,#b2ff05,#c3ff03,#d5ff00,#e8ff00,#fbff00,#fff000,#ffdf00,#ffcf00,#ffc100,#ffb400,#ffa900,#ff9e00,#ff9400,#ff8b00,#ff8300,#ff7b00,#ff7400,#ff6e00,#ff6800,#ff6200,#ff5c00,#ff5700,#ff5300,#ff4e00,#ff4a00,#ff4600,#ff4200,#ff3f00,#ff3b00,#ff3800,#ff3500,#ff3200,#ff3000)"></i>
<i style="background:linear-gradient(90deg,#00ff56,#00ff54,#00ff52,#00ff51,#00ff4f,#00ff4d,#00ff4b,#00ff49,#00ff48,#00ff46,#0f4,#00ff42,#00ff40,#00ff3e,#00ff3c,#00ff3a,#00ff38,#00ff35,#0f3,#00ff31,#00ff2f,#00ff2c,#00ff2a,#06ff2d,#0eff2a,#17ff28,#21ff25,#2cff23,#37ff20,#42ff1d,#4fff1b,#5cff18,#69ff15,#77ff12,#86ff0f,#95ff0d,#a5ff0a,#b6ff07,#c7ff04,#daff02,#edff00,#fffe00,#ffeb00,#ffda00,#ffcb00,#ffbd00,#ffb100,#ffa500,#ff9b00,#ff9100,#f80,#ff8000,#ff7900,#ff7200,#ff6b00,#ff6500,#ff6000,#ff5a00,#f50,#ff5100,#ff4c00,#ff4800,#f40,#ff4000,#ff3d00,#ff3a00,#ff3700,#ff3400,#ff3100,#ff2e00)"></i>
<i style="background:linear-gradient(90deg,#00ff58,#00ff56,#00ff54,#00ff53,#00ff51,#00ff4f,#00ff4d,#00ff4c,#00ff4a,#00ff48,#00ff46,#0f4,#00ff42,#00ff40,#00ff3e,#00ff3c,#00ff3a,#00ff38,#00ff35,#0f3,#00ff31,#00ff2e,#00ff31,#07ff2f,#0fff2c,#18ff2a,#22ff27,#2dff25,#38ff22,#44ff1f,#51ff1d,#5eff1a,#6cff17,#7aff14,#89ff11,#99ff0e,#a9ff0b,#baff09,#ccff06,#deff03,#f2ff00,#fff800,#ffe600,#ffd500,#ffc600,#ffb900,#ffad00,#ffa200,#ff9700,#ff8e00,#ff8500,#ff7d00,#ff7600,#ff6f00,#ff6900,#ff6300,#ff5d00,#ff5800,#ff5300,#ff4f00,#ff4a00,#ff4600,#ff4200,#ff3f00,#ff3b00,#ff3800,#ff3500,#ff3200,#ff2f00,#ff2d00)"></i>
<i style="background:linear-gradient(90deg,#00ff5a,#00ff58,#00ff57,#0f5,#00ff53,#00ff51,#00ff50,#00ff4e,#00ff4c,#00ff4a,#00ff48,#00ff46,#0f4,#00ff42,#00ff40,#00ff3e,#00ff3c,#00ff3a,#00ff37,#00ff35,#0f3,#00ff31,#01ff34,#08ff31,#10ff2f,#1aff2c,#24ff29,#2fff27,#3aff24,#46ff21,#53ff1f,#60ff1c,#6eff19,#7dff16,#8cff13,#9cff10,#adff0d,#beff0a,#d0ff07,#e3ff04,#f7ff02,#fff300,#ffe100,#ffd100,#ffc200,#ffb500,#ffa900,#ff9e00,#ff9400,#ff8b00,#ff8200,#ff7b00,#ff7300,#ff6d00,#f60,#ff6000,#ff5b00,#ff5600,#ff5100,#ff4d00,#ff4800,#f40,#ff4100,#ff3d00,#ff3a00,#ff3600,#f30,#ff3100,#ff2e00,#ff2b00)"></i>
<i style="background:linear-gradient(90deg,#00ff5c,#00ff5b,#00ff59,#00ff57,#0f5,#00ff54,#00ff52,#00ff50,#00ff4e,#00ff4c,#00ff4a,#00ff48,#00ff46,#0f4,#00ff42,#00ff40,#00ff3e,#00ff3c,#00ff3a,#00ff37,#00ff35,#0f3,#01ff36,#08ff33,#11ff31,#1bff2e,#25ff2c,#30ff29,#3cff26,#48ff24,#55ff21,#63ff1e,#71ff1b,#80ff18,#8fff15,#a0ff12,#b1ff0f,#c2ff0c,#d5ff09,#e8ff06,#fcff03,#fe0,#ffdc00,#fc0,#ffbe00,#ffb100,#ffa500,#ff9b00,#ff9100,#f80,#ff7f00,#ff7800,#ff7100,#ff6a00,#ff6400,#ff5e00,#ff5900,#ff5400,#ff4f00,#ff4b00,#ff4600,#ff4200,#ff3f00,#ff3b00,#ff3800,#ff3500,#ff3200,#ff2f00,#ff2c00,#ff2a00)"></i>
<i style="background:linear-gradient(90deg,#00ff5e,#00ff5d,#00ff5b,#00ff59,#00ff58,#00ff56,#00ff54,#00ff52,#00ff50,#00ff4f,#00ff4d,#00ff4b,#00ff49,#00ff47,#00ff45,#00ff42,#00ff40,#00ff3e,#00ff3c,#00ff3a,#00ff37,#00ff35,#02ff38,#09ff36,#12ff33,#1cff31,#26ff2e,#32ff2b,#3dff29,#4aff26,#57ff23,#65ff20,#74ff1d,#83ff1a,#93ff17,#a3ff14,#b5ff11,#c7ff0e,#daff0b,#edff08,#fffc05,#ffe902,#ffd700,#ffc800,#ffba00,#ffad00,#ffa200,#ff9700,#ff8d00,#ff8500,#ff7c00,#ff7500,#ff6e00,#ff6700,#ff6100,#ff5c00,#ff5600,#ff5200,#ff4d00,#ff4900,#f40,#ff4100,#ff3d00,#ff3a00,#ff3600,#f30,#ff3000,#ff2e00,#ff2b00,#ff2900)"></i>
<i style="background:linear-gradient(90deg,#00ff61,#00ff5f,#00ff5d,#00ff5c,#00ff5a,#00ff58,#00ff56,#0f5,#00ff53,#00ff51,#00ff4f,#00ff4d,#00ff4b,#00ff49,#00ff47,#00ff45,#00ff43,#00ff40,#00ff3e,#00ff3c,#00ff3a,#00ff37,#02ff3b,#0aff38,#13ff36,#1dff33,#28ff30,#33ff2e,#3fff2b,#4cff28,#5aff25,#68ff22,#76ff1f,#86ff1c,#96ff19,#a7ff16,#b9ff13,#cbff10,#deff0d,#f3ff09,#fff706,#ffe403,#ffd300,#ffc300,#ffb600,#ffa900,#ff9e00,#ff9400,#ff8a00,#ff8100,#ff7900,#ff7200,#ff6b00,#ff6500,#ff5f00,#ff5900,#ff5400,#ff4f00,#ff4b00,#ff4700,#ff4300,#ff3f00,#ff3b00,#ff3800,#ff3500,#ff3200,#ff2f00,#ff2c00,#ff2a00,#ff2700)"></i>
<i style="background:linear-gradient(90deg,#00ff63,#00ff62,#00ff60,#00ff5e,#00ff5c,#00ff5b,#00ff59,#00ff57,#0f5,#00ff53,#00ff51,#00ff4f,#00ff4d,#00ff4b,#00ff49,#00ff47,#00ff45,#00ff43,#00ff40,#00ff3e,#00ff3c,#00ff39,#03ff3d,#0bff3b,#14ff38,#1eff35,#29ff33,#35ff30,#41ff2d,#4eff2a,#5cff28,#6aff25,#79ff22,#89ff1f,#9aff1b,#abff18,#bdff15,#d0ff12,#e4ff0f,#f8ff0b,#fff108,#ffde04,#ffce02,#ffbf00,#ffb200,#ffa500,#ff9a00,#ff9000,#ff8700,#ff7e00,#f70,#ff6f00,#ff6900,#ff6200,#ff5d00,#ff5700,#ff5200,#ff4d00,#ff4900,#ff4500,#ff4100,#ff3d00,#ff3a00,#ff3600,#f30,#ff3000,#ff2d00,#ff2b00,#ff2800,#ff2600)"></i>
<i style="background:linear-gradient(90deg,#0f6,#00ff64,#00ff62,#00ff61,#00ff5f,#00ff5d,#00ff5b,#00ff59,#00ff58,#00ff56,#00ff54,#00ff52,#00ff50,#00ff4e,#00ff4c,#00ff4a,#00ff47,#00ff45,#00ff43,#00ff41,#00ff3e,#00ff3c,#03ff40,#0cff3d,#15ff3b,#1fff38,#2bff35,#37ff33,#43ff30,#50ff2d,#5eff2a,#6dff27,#7cff24,#8cff21,#9dff1e,#afff1b,#c1ff17,#d5ff14,#e9ff11,#feff0d,#ffec09,#ffd906,#ffc903,#fb0,#ffae00,#ffa200,#ff9700,#ff8d00,#ff8400,#ff7b00,#ff7400,#ff6d00,#f60,#ff6000,#ff5a00,#f50,#ff5000,#ff4b00,#ff4700,#ff4300,#ff3f00,#ff3b00,#ff3800,#ff3500,#ff3200,#ff2f00,#ff2c00,#ff2900,#ff2700,#ff2400)"></i>
<i style="background:linear-gradient(90deg,#00ff68,#0f6,#00ff65,#00ff63,#00ff61,#00ff60,#00ff5e,#00ff5c,#00ff5a,#00ff58,#00ff56,#00ff54,#00ff52,#00ff50,#00ff4e,#00ff4c,#00ff4a,#00ff48,#00ff45,#00ff43,#00ff41,#00ff3e,#04ff42,#0dff40,#16ff3d,#21ff3b,#2cff38,#38ff35,#45ff32,#53ff2f,#61ff2c,#70ff29,#7fff26,#90ff23,#a1ff20,#b3ff1d,#c6ff1a,#daff16,#eeff13,#fffa0f,#ffe60b,#ffd507,#ffc504,#ffb601,#fa0,#ff9e00,#ff9300,#ff8a00,#ff8100,#ff7800,#ff7100,#ff6a00,#ff6300,#ff5d00,#ff5800,#ff5300,#ff4e00,#ff4900,#ff4500,#ff4100,#ff3d00,#ff3900,#ff3600,#f30,#ff3000,#ff2d00,#ff2a00,#ff2800,#ff2500,#ff2300)"></i>
<i style="background:linear-gradient(90deg,#00ff6b,#00ff69,#00ff67,#0f6,#00ff64,#00ff62,#00ff60,#00ff5e,#00ff5d,#00ff5b,#00ff59,#00ff57,#0f5,#00ff53,#00ff51,#00ff4f,#00ff4c,#00ff4a,#00ff48,#00ff46,#00ff43,#00ff41,#05ff45,#0dff42,#17ff40,#22ff3d,#2eff3a,#3aff38,#47ff35,#55ff32,#63ff2f,#73ff2c,#83ff29,#93ff26,#a5ff23,#b7ff1f,#cbff1c,#dfff19,#f4ff15,#fff511,#ffe10c,#ffd009,#ffc005,#ffb203,#ffa600,#ff9a00,#ff9000,#ff8600,#ff7d00,#ff7500,#ff6e00,#ff6700,#ff6100,#ff5b00,#f50,#ff5000,#ff4c00,#ff4700,#ff4300,#ff3f00,#ff3b00,#ff3800,#ff3400,#ff3100,#ff2e00,#ff2c00,#ff2900,#ff2600,#ff2400,#f20)"></i>
<i style="background:linear-gradient(90deg,#00ff6d,#00ff6c,#00ff6a,#00ff68,#0f6,#00ff65,#00ff63,#00ff61,#00ff5f,#00ff5d,#00ff5b,#00ff59,#00ff57,#0f5,#00ff53,#00ff51,#00ff4f,#00ff4d,#00ff4b,#00ff48,#00ff46,#00ff43,#05ff48,#0eff45,#19ff43,#24ff40,#2fff3d,#3cff3a,#49ff38,#57ff35,#66ff32,#76ff2f,#86ff2c,#97ff28,#a9ff25,#bcff22,#cfff1e,#e4ff1b,#faff17,#ffef13,#ffdc0e,#ffcb0a,#ffbc07,#ffae04,#ffa201,#ff9600,#ff8c00,#ff8300,#ff7a00,#ff7300,#ff6b00,#ff6500,#ff5e00,#ff5900,#ff5300,#ff4e00,#ff4900,#ff4500,#ff4100,#ff3d00,#ff3900,#ff3600,#f30,#ff3000,#ff2d00,#ff2a00,#ff2700,#ff2500,#ff2300,#ff2000)"></i>
<i style="background:linear-gradient(90deg,#00ff70,#00ff6e,#00ff6c,#00ff6b,#00ff69,#00ff67,#0f6,#00ff64,#00ff62,#00ff60,#00ff5e,#00ff5c,#00ff5a,#00ff58,#00ff56,#00ff54,#00ff52,#00ff4f,#00ff4d,#00ff4b,#00ff49,#00ff46,#06ff4b,#0fff48,#1aff45,#25ff43,#31ff40,#3eff3d,#4bff3a,#5aff37,#69ff34,#79ff31,#89ff2e,#9bff2b,#adff28,#c0ff24,#d4ff21,#eaff1e,#fffe1a,#ffe914,#ffd710,#ffc60c,#ffb708,#ffaa05,#ff9e02,#ff9300,#ff8900,#ff8000,#f70,#ff7000,#ff6800,#ff6200,#ff5c00,#ff5600,#ff5100,#ff4c00,#ff4700,#ff4300,#ff3f00,#ff3b00,#ff3800,#ff3400,#ff3100,#ff2e00,#ff2b00,#ff2900,#ff2600,#ff2400,#ff2100,#ff1f00)"></i>
<i style="background:linear-gradient(90deg,#00ff72,#00ff71,#00ff6f,#00ff6e,#00ff6c,#00ff6a,#00ff68,#00ff67,#00ff65,#00ff63,#00ff61,#00ff5f,#00ff5d,#00ff5b,#00ff59,#00ff57,#00ff54,#00ff52,#00ff50,#00ff4e,#00ff4b,#00ff49,#07ff4e,#10ff4b,#1bff48,#26ff46,#33ff43,#40ff40,#4eff3d,#5cff3a,#6cff37,#7cff34,#8dff31,#9fff2e,#b1ff2b,#c5ff27,#daff24,#efff20,#fff81c,#ffe416,#ffd211,#ffc10d,#ffb309,#ffa606,#ff9a04,#ff8f01,#ff8500,#ff7c00,#ff7400,#ff6d00,#f60,#ff5f00,#ff5900,#ff5400,#ff4f00,#ff4a00,#ff4500,#ff4100,#ff3d00,#ff3900,#ff3600,#f30,#ff2f00,#ff2c00,#ff2a00,#ff2700,#ff2500,#f20,#ff2000,#ff1e00)"></i>
<i style="background:linear-gradient(90deg,#00ff75,#00ff74,#00ff72,#00ff70,#00ff6f,#00ff6d,#00ff6b,#00ff69,#00ff67,#0f6,#00ff64,#00ff62,#00ff60,#00ff5e,#00ff5c,#00ff59,#00ff57,#0f5,#00ff53,#00ff50,#00ff4e,#00ff53,#08ff51,#11ff4e,#1cff4b,#28ff49,#34ff46,#42ff43,#50ff40,#5fff3d,#6fff3a,#7fff37,#90ff34,#a3ff31,#b6ff2d,#caff2a,#dfff27,#f5ff23,#fff21e,#ffde18,#ffcc13,#ffbd0f,#ffae0b,#ffa208,#ff9605,#ff8c02,#ff8200,#ff7900,#ff7100,#ff6a00,#ff6300,#ff5d00,#ff5700,#ff5100,#ff4c00,#ff4800,#ff4300,#ff3f00,#ff3b00,#ff3700,#ff3400,#ff3100,#ff2e00,#ff2b00,#ff2800,#ff2600,#ff2300,#ff2100,#ff1f00,#ff1d00)"></i>
<i style="background:linear-gradient(90deg,#00ff78,#00ff76,#00ff75,#00ff73,#00ff71,#00ff70,#00ff6e,#00ff6c,#00ff6a,#00ff68,#00ff67,#00ff65,#00ff63,#00ff61,#00ff5f,#00ff5c,#00ff5a,#00ff58,#00ff56,#00ff53,#00ff51,#00ff56,#09ff54,#13ff51,#1eff4f,#29ff4c,#36ff49,#44ff46,#52ff43,#62ff40,#72ff3d,#82ff3a,#94ff37,#a7ff34,#baff30,#cfff2d,#e5ff29,#fbff26,#ffed20,#ffd91a,#ffc715,#ffb810,#ffaa0c,#ff9e09,#ff9206,#ff8803,#ff7f01,#ff7600,#ff6e00,#ff6700,#ff6000,#ff5a00,#ff5400,#ff4f00,#ff4a00,#ff4500,#ff4100,#ff3d00,#ff3900,#ff3600,#ff3200,#ff2f00,#ff2c00,#ff2900,#ff2700,#ff2400,#f20,#ff1f00,#ff1d00,#ff1b00)"></i>
<i style="background:linear-gradient(90deg,#00ff7b,#00ff79,#00ff78,#00ff76,#00ff74,#00ff73,#00ff71,#00ff6f,#00ff6d,#00ff6b,#00ff6a,#00ff68,#0f6,#00ff64,#00ff62,#00ff5f,#00ff5d,#00ff5b,#00ff59,#00ff56,#00ff54,#01ff59,#0aff57,#14ff54,#1fff52,#2bff4f,#38ff4c,#46ff4a,#55ff47,#64ff44,#75ff41,#86ff3d,#98ff3a,#abff37,#bfff34,#d4ff30,#eaff2c,#fffd28,#ffe722,#ffd41c,#ffc316,#ffb312,#ffa60e,#ff9a0a,#ff8f07,#ff8504,#ff7b02,#ff7300,#ff6b00,#ff6400,#ff5e00,#ff5800,#ff5200,#ff4d00,#ff4800,#ff4300,#ff3f00,#ff3b00,#ff3700,#ff3400,#ff3100,#ff2d00,#ff2b00,#ff2800,#ff2500,#ff2300,#ff2000,#ff1e00,#ff1c00,#ff1a00)"></i>
<i style="background:linear-gradient(90deg,#00ff7e,#00ff7c,#00ff7b,#00ff79,#0f7,#00ff76,#00ff74,#00ff72,#00ff70,#00ff6e,#00ff6d,#00ff6b,#00ff69,#00ff67,#00ff65,#00ff62,#00ff60,#00ff5e,#00ff5c,#00ff59,#00ff57,#02ff5d,#0aff5a,#15ff58,#20ff55,#2dff52,#3aff50,#48ff4d,#57ff4a,#67ff47,#78ff44,#8aff41,#9cff3e,#b0ff3a,#c4ff37,#daff33,#f0ff30,#fff62a,#ffe123,#ffce1d,#ffbe18,#ffaf13,#ffa20f,#ff960c,#ff8b08,#ff8106,#ff7803,#ff7001,#ff6800,#ff6100,#ff5b00,#f50,#ff5000,#ff4a00,#ff4600,#ff4100,#ff3d00,#ff3900,#ff3600,#ff3200,#ff2f00,#ff2c00,#ff2900,#ff2600,#ff2400,#ff2100,#ff1f00,#ff1d00,#ff1b00,#ff1900)"></i>
<i style="background:linear-gradient(90deg,#00ff81,#00ff7f,#00ff7e,#00ff7c,#00ff7a,#00ff79,#0f7,#00ff75,#00ff73,#00ff72,#00ff70,#00ff6e,#00ff6c,#00ff6a,#00ff68,#0f6,#00ff63,#00ff61,#00ff5f,#00ff5d,#00ff5a,#02ff60,#0bff5e,#16ff5b,#22ff59,#2fff56,#3cff53,#4bff50,#5aff4d,#6aff4a,#7bff47,#8dff44,#a0ff41,#b4ff3e,#c9ff3a,#dfff37,#f6ff33,#fff02c,#ffdb25,#ffc91f,#ffb91a,#ffaa15,#ff9d11,#ff920d,#ff870a,#ff7e07,#ff7504,#ff6d02,#ff6500,#ff5f00,#ff5800,#ff5300,#ff4d00,#ff4800,#ff4300,#ff3f00,#ff3b00,#ff3700,#ff3400,#ff3000,#ff2d00,#ff2a00,#ff2700,#ff2500,#f20,#ff2000,#ff1e00,#ff1b00,#ff1900,#ff1700)"></i>
<i style="background:linear-gradient(90deg,#00ff84,#00ff82,#00ff81,#00ff7f,#00ff7e,#00ff7c,#00ff7a,#00ff78,#0f7,#00ff75,#00ff73,#00ff71,#00ff6f,#00ff6d,#00ff6b,#00ff69,#00ff67,#00ff65,#00ff62,#00ff60,#00ff5e,#03ff64,#0cff61,#17ff5f,#23ff5c,#30ff5a,#3eff57,#4dff54,#5dff51,#6dff4e,#7fff4b,#91ff48,#a5ff44,#b9ff41,#ceff3e,#e5ff3a,#fdff36,#ffea2e,#ffd627,#ffc421,#ffb41b,#ffa616,#ff9912,#ff8e0e,#ff840b,#ff7a08,#ff7205,#ff6a03,#ff6301,#ff5c00,#ff5600,#ff5000,#ff4b00,#ff4600,#ff4100,#ff3d00,#ff3900,#ff3500,#ff3200,#ff2f00,#ff2b00,#ff2900,#ff2600,#ff2300,#ff2100,#ff1e00,#ff1c00,#ff1a00,#ff1800,#ff1600)"></i>
<i style="background:linear-gradient(90deg,#00ff87,#00ff86,#00ff84,#00ff82,#00ff81,#00ff7f,#00ff7d,#00ff7c,#00ff7a,#00ff78,#00ff76,#00ff74,#00ff72,#00ff70,#00ff6e,#00ff6c,#00ff6a,#00ff68,#0f6,#00ff63,#00ff61,#04ff67,#0dff65,#19ff62,#25ff60,#32ff5d,#40ff5a,#4fff58,#5fff55,#70ff52,#82ff4f,#95ff4b,#a9ff48,#beff45,#d4ff41,#ebff3e,#fffb39,#ffe430,#ffd029,#ffbf23,#ffaf1d,#ffa218,#ff9514,#ff8a10,#ff800c,#ff7709,#ff6e06,#ff6704,#ff6002,#ff5900,#ff5300,#ff4e00,#ff4800,#f40,#ff3f00,#ff3b00,#ff3700,#f30,#ff3000,#ff2d00,#ff2a00,#ff2700,#ff2400,#f20,#ff1f00,#ff1d00,#ff1b00,#ff1900,#ff1700,#ff1500)"></i>
<i style="background:linear-gradient(90deg,#00ff8a,#00ff89,#00ff87,#00ff86,#00ff84,#00ff82,#00ff81,#00ff7f,#00ff7d,#00ff7b,#00ff7a,#00ff78,#00ff76,#00ff74,#00ff72,#00ff70,#00ff6e,#00ff6b,#00ff69,#00ff67,#00ff64,#04ff6b,#0eff69,#1aff66,#26ff64,#34ff61,#43ff5e,#52ff5b,#62ff59,#74ff56,#86ff52,#99ff4f,#aeff4c,#c3ff49,#daff45,#f1ff42,#fff43b,#ffde32,#ffcb2b,#ffba24,#ffab1f,#ff9d1a,#ff9115,#ff8611,#ff7c0d,#ff730a,#ff6b07,#ff6405,#ff5d03,#ff5701,#ff5100,#ff4b00,#ff4600,#ff4100,#ff3d00,#ff3900,#ff3500,#ff3200,#ff2e00,#ff2b00,#ff2800,#ff2500,#ff2300,#ff2000,#ff1e00,#ff1c00,#ff1a00,#ff1800,#ff1600,#ff1400)"></i>
<i style="background:linear-gradient(90deg,#00ff8e,#00ff8c,#00ff8b,#00ff89,#00ff87,#00ff86,#00ff84,#00ff82,#00ff81,#00ff7f,#00ff7d,#00ff7b,#00ff79,#0f7,#00ff75,#00ff73,#00ff71,#00ff6f,#00ff6d,#00ff6a,#00ff68,#05ff6f,#10ff6d,#1bff6a,#28ff68,#36ff65,#45ff62,#55ff5f,#65ff5d,#77ff5a,#8aff56,#9eff53,#b2ff50,#c8ff4d,#e0ff49,#f8ff45,#ffee3d,#ffd834,#ffc52d,#ffb526,#ffa620,#ff991b,#ff8d16,#ff8312,#ff790f,#ff700c,#ff6809,#ff6106,#ff5a04,#ff5402,#ff4e00,#ff4900,#f40,#ff3f00,#ff3b00,#ff3700,#f30,#ff3000,#ff2c00,#ff2900,#ff2600,#ff2400,#ff2100,#ff1f00,#ff1c00,#ff1a00,#ff1800,#ff1600,#ff1400,#ff1300)"></i>
<i style="background:linear-gradient(90deg,#00ff91,#00ff8f,#00ff8e,#00ff8c,#00ff8b,#00ff89,#0f8,#00ff86,#00ff84,#00ff82,#00ff81,#00ff7f,#00ff7d,#00ff7b,#00ff79,#0f7,#00ff75,#00ff73,#00ff70,#00ff6e,#00ff6c,#06ff73,#11ff71,#1dff6e,#2aff6c,#38ff69,#47ff66,#57ff64,#69ff61,#7bff5e,#8eff5b,#a2ff57,#b7ff54,#ceff51,#e6ff4d,#ffff4a,#ffe73f,#ffd236,#ffc02f,#ffb028,#ffa222,#ff951d,#ff8918,#ff7f14,#ff7510,#ff6d0d,#ff650a,#ff5e07,#ff5705,#ff5103,#ff4c01,#ff4600,#ff4200,#ff3d00,#ff3900,#ff3500,#ff3100,#ff2e00,#ff2b00,#ff2800,#ff2500,#f20,#ff2000,#ff1d00,#ff1b00,#ff1900,#ff1700,#ff1500,#ff1300,#f10)"></i>
<i style="background:linear-gradient(90deg,#00ff94,#00ff93,#00ff91,#00ff90,#00ff8e,#00ff8d,#00ff8b,#00ff89,#0f8,#00ff86,#00ff84,#00ff82,#00ff81,#00ff7f,#00ff7d,#00ff7b,#00ff79,#00ff76,#00ff74,#00ff72,#00ff70,#07ff77,#12ff75,#1eff73,#2cff70,#3aff6d,#4aff6b,#5aff68,#6cff65,#7eff62,#92ff5f,#a7ff5c,#bdff58,#d4ff55,#ecff52,#fff84c,#ffe141,#ffcd38,#ffbb31,#ffab2a,#ff9d24,#ff911e,#ff8519,#ff7b15,#ff7211,#ff6a0e,#ff620b,#ff5b08,#ff5506,#ff4f04,#ff4902,#f40,#ff3f00,#ff3b00,#ff3700,#f30,#ff2f00,#ff2c00,#ff2900,#ff2600,#ff2300,#ff2100,#ff1e00,#ff1c00,#ff1a00,#ff1800,#ff1600,#ff1400,#ff1200,#ff1000)"></i>
<i style="background:linear-gradient(90deg,#00ff98,#00ff96,#00ff95,#00ff94,#00ff92,#00ff90,#00ff8f,#00ff8d,#00ff8b,#00ff8a,#0f8,#00ff86,#00ff84,#00ff82,#00ff80,#00ff7e,#00ff7c,#00ff7a,#00ff78,#00ff76,#00ff74,#08ff7c,#13ff79,#20ff77,#2eff74,#3cff72,#4cff6f,#5dff6c,#6fff69,#82ff66,#96ff63,#abff60,#c2ff5d,#daff5a,#f3ff56,#fff24e,#ffdb44,#ffc73a,#ffb632,#ffa62b,#ff9925,#ff8d20,#ff821b,#ff7817,#ff6f13,#ff660f,#ff5f0c,#ff5809,#ff5207,#ff4c05,#ff4703,#ff4201,#ff3d00,#ff3900,#ff3500,#ff3100,#ff2e00,#ff2a00,#ff2700,#ff2400,#f20,#ff1f00,#ff1d00,#ff1a00,#ff1800,#ff1600,#ff1400,#ff1300,#f10,#ff0f00)"></i>
<i style="background:linear-gradient(90deg,#00ff9c,#00ff9a,#0f9,#00ff97,#00ff96,#00ff94,#00ff93,#00ff91,#00ff8f,#00ff8e,#00ff8c,#00ff8a,#0f8,#00ff86,#00ff84,#00ff82,#00ff80,#00ff7e,#00ff7c,#00ff7a,#00ff78,#09ff80,#14ff7e,#21ff7b,#2fff79,#3fff76,#4fff74,#60ff71,#73ff6e,#86ff6b,#9bff68,#b0ff65,#c8ff62,#e0ff5e,#faff5b,#ffeb50,#ffd546,#ffc13c,#ffb134,#ffa22d,#ff9427,#ff8821,#ff7e1c,#ff7418,#ff6b14,#ff6310,#ff5c0d,#ff550a,#ff4f08,#ff4a06,#ff4403,#ff3f02,#ff3b00,#ff3700,#f30,#ff2f00,#ff2c00,#ff2900,#ff2600,#ff2300,#ff2000,#ff1e00,#ff1b00,#ff1900,#ff1700,#ff1500,#ff1300,#f10,#ff1000,#ff0e00)"></i>
<i style="background:linear-gradient(90deg,#00ff9f,#00ff9e,#00ff9c,#00ff9b,#00ff9a,#00ff98,#00ff96,#00ff95,#00ff93,#00ff92,#00ff90,#00ff8e,#00ff8c,#00ff8a,#0f8,#00ff87,#00ff85,#00ff82,#00ff80,#00ff7e,#00ff87,#0aff85,#16ff82,#23ff80,#31ff7e,#41ff7b,#52ff78,#63ff76,#76ff73,#8aff70,#9fff6d,#b6ff6a,#cdff67,#e6ff63,#fffd5f,#ffe452,#ffcf48,#ffbc3e,#ffac36,#ff9d2f,#ff9029,#ff8423,#ff7a1e,#ff7119,#ff6815,#ff6012,#ff590e,#ff530b,#ff4d09,#ff4706,#ff4204,#ff3d02,#ff3901,#ff3500,#ff3100,#ff2d00,#ff2a00,#ff2700,#ff2400,#ff2100,#ff1e00,#ff1c00,#ff1a00,#ff1800,#ff1600,#ff1400,#ff1200,#ff1000,#ff0e00,#ff0d00)"></i>
<i style="background:linear-gradient(90deg,#00ffa3,#00ffa2,#00ffa0,#00ff9f,#00ff9d,#00ff9c,#00ff9a,#0f9,#00ff97,#00ff96,#00ff94,#00ff92,#00ff90,#00ff8f,#00ff8d,#00ff8b,#00ff89,#00ff87,#00ff85,#00ff82,#01ff8c,#0bff8a,#17ff87,#25ff85,#34ff82,#43ff80,#54ff7d,#67ff7b,#7aff78,#8eff75,#a4ff72,#bbff6f,#d3ff6c,#edff68,#fff661,#ffde55,#ffc94a,#ffb740,#ffa738,#ff9831,#ff8c2a,#ff8024,#ff761f,#ff6d1b,#ff6517,#ff5d13,#ff5610,#ff500d,#ff4a0a,#ff4407,#ff3f05,#ff3b03,#ff3702,#f30,#ff2f00,#ff2b00,#ff2800,#ff2500,#f20,#ff1f00,#ff1d00,#ff1b00,#ff1800,#ff1600,#ff1400,#ff1200,#f10,#ff0f00,#ff0d00,#ff0c00)"></i>
<i style="background:linear-gradient(90deg,#00ffa7,#00ffa6,#00ffa4,#00ffa3,#00ffa1,#00ffa0,#00ff9f,#00ff9d,#00ff9b,#00ff9a,#00ff98,#00ff96,#00ff95,#00ff93,#00ff91,#00ff8f,#00ff8d,#00ff8b,#00ff89,#00ff87,#02ff91,#0cff8f,#19ff8c,#27ff8a,#36ff88,#46ff85,#57ff82,#6aff80,#7eff7d,#93ff7a,#a9ff77,#c1ff74,#daff71,#f4ff6e,#ffef64,#ffd757,#ffc34c,#ffb142,#ffa23a,#ff9432,#ff882c,#ff7c26,#ff7321,#ff6a1c,#ff6118,#ff5a14,#ff5311,#ff4d0e,#ff470b,#ff4208,#ff3d06,#ff3904,#ff3402,#ff3001,#ff2d00,#ff2900,#ff2600,#ff2300,#ff2000,#ff1e00,#ff1b00,#ff1900,#ff1700,#ff1500,#ff1300,#f10,#ff0f00,#ff0e00,#ff0c00,#ff0b00)"></i>
<i style="background:linear-gradient(90deg,#00ffab,#0fa,#00ffa8,#00ffa7,#00ffa6,#00ffa4,#00ffa3,#00ffa1,#00ffa0,#00ff9e,#00ff9c,#00ff9b,#0f9,#00ff97,#00ff95,#00ff94,#00ff92,#00ff90,#00ff8e,#00ff8c,#03ff96,#0dff94,#1aff91,#28ff8f,#38ff8d,#49ff8a,#5bff88,#6eff85,#82ff83,#97ff80,#aeff7d,#c7ff7a,#e0ff77,#fcff73,#ffe866,#ffd159,#ffbd4e,#ffac44,#ff9d3c,#ff8f34,#ff832d,#ff7928,#ff6f22,#ff661e,#ff5e19,#ff5715,#ff5012,#ff4a0f,#ff450c,#ff4009,#ff3b07,#ff3605,#ff3203,#ff2e02,#ff2b00,#ff2800,#ff2400,#f20,#ff1f00,#ff1c00,#ff1a00,#ff1800,#ff1600,#ff1400,#ff1200,#ff1000,#ff0e00,#ff0d00,#ff0b00,#ff0a00)"></i>
<i style="background:linear-gradient(90deg,#00ffaf,#00ffae,#00ffad,#00ffab,#0fa,#00ffa8,#00ffa7,#00ffa6,#00ffa4,#00ffa3,#00ffa1,#00ff9f,#00ff9e,#00ff9c,#00ff9a,#00ff98,#00ff96,#00ff94,#00ff92,#00ff90,#03ff9b,#0fff99,#1cff97,#2aff95,#3aff92,#4bff90,#5eff8d,#71ff8b,#86ff88,#9cff85,#b4ff83,#cdff80,#e7ff7c,#fffb77,#ffe168,#ffcb5b,#ffb850,#ffa746,#ff983d,#ff8b36,#ff7f2f,#ff7529,#ff6b24,#ff631f,#ff5b1b,#ff5417,#ff4e13,#ff4810,#ff420d,#ff3d0a,#ff3808,#ff3406,#ff3004,#ff2c02,#ff2901,#ff2600,#ff2300,#ff2000,#ff1d00,#ff1b00,#ff1800,#ff1600,#ff1400,#ff1200,#ff1000,#ff0f00,#ff0d00,#ff0b00,#ff0a00,#ff0900)"></i>
<i style="background:linear-gradient(90deg,#00ffb3,#00ffb2,#00ffb1,#00ffb0,#00ffae,#00ffad,#00ffab,#0fa,#00ffa9,#00ffa7,#00ffa6,#00ffa4,#00ffa2,#00ffa1,#00ff9f,#00ff9d,#00ff9b,#0f9,#00ff97,#00ff95,#04ffa1,#10ff9e,#1dff9c,#2cff9a,#3dff98,#4eff96,#61ff93,#75ff91,#8bff8e,#a1ff8b,#b9ff89,#d3ff86,#eeff83,#fff37a,#ffda6a,#ffc55d,#ffb252,#ffa248,#ff933f,#ff8737,#ff7b31,#ff712b,#ff6825,#ff5f20,#ff581c,#ff5118,#ff4b14,#ff4511,#ff400e,#ff3b0b,#ff3609,#ff3207,#ff2e05,#ff2a03,#ff2701,#ff2400,#ff2100,#ff1e00,#ff1c00,#ff1900,#ff1700,#ff1500,#ff1300,#f10,#ff0f00,#ff0d00,#ff0c00,#ff0a00,#ff0900,#ff0800)"></i>
<i style="background:linear-gradient(90deg,#00ffb8,#00ffb6,#00ffb5,#00ffb4,#00ffb3,#00ffb1,#00ffb0,#00ffaf,#00ffad,#00ffac,#0fa,#00ffa9,#00ffa7,#00ffa5,#00ffa4,#00ffa2,#00ffa0,#00ff9e,#00ff9c,#00ff9a,#05ffa6,#11ffa4,#1fffa2,#2fffa0,#3fff9e,#51ff9c,#65ff99,#79ff97,#8fff94,#a6ff92,#bfff8f,#daff8c,#f6ff89,#ffec7c,#ffd46c,#ffbf5f,#ffac54,#ff9d4a,#ff8f41,#ff8239,#ff7732,#ff6d2c,#ff6427,#ff5c22,#ff551d,#ff4e19,#ff4816,#ff4212,#ff3d0f,#ff380c,#ff340a,#ff3008,#ff2c06,#ff2904,#ff2502,#ff2201,#ff1f00,#ff1d00,#ff1a00,#ff1800,#ff1500,#ff1300,#f10,#ff1000,#ff0e00,#ff0c00,#ff0b00,#ff0900,#ff0800,#ff0700)"></i>
<i style="background:linear-gradient(90deg,#00ffbc,#0fb,#00ffba,#00ffb9,#00ffb7,#00ffb6,#00ffb5,#00ffb3,#00ffb2,#00ffb1,#00ffaf,#00ffae,#00ffac,#0fa,#00ffa9,#00ffa7,#00ffa5,#00ffa4,#00ffa2,#00ffa0,#06ffac,#13ffaa,#21ffa8,#31ffa6,#42ffa4,#54ffa2,#68ffa0,#7dff9d,#94ff9b,#acff98,#c6ff95,#e1ff93,#feff90,#ffe57e,#ffcd6f,#ffb961,#ffa756,#ff984b,#ff8a43,#ff7e3b,#ff7334,#ff692e,#ff6128,#ff5923,#ff521f,#ff4b1a,#ff4517,#ff4013,#ff3b10,#ff360e,#ff320b,#ff2e09,#ff2a07,#ff2705,#ff2303,#ff2001,#ff1e00,#ff1b00,#ff1800,#ff1600,#ff1400,#ff1200,#ff1000,#ff0e00,#ff0d00,#ff0b00,#ff0a00,#ff0800,#ff0700,#ff0600)"></i>
<i style="background:linear-gradient(90deg,#00ffc1,#00ffc0,#00ffbe,#00ffbd,#00ffbc,#0fb,#00ffba,#00ffb8,#00ffb7,#00ffb6,#00ffb4,#00ffb3,#00ffb1,#00ffb0,#00ffae,#00ffac,#00ffab,#00ffa9,#00ffa7,#00ffa5,#07ffb2,#14ffb0,#23ffae,#33ffac,#45ffaa,#58ffa8,#6cffa6,#82ffa4,#99ffa1,#b2ff9f,#ccff9c,#e8ff9a,#fff893,#ffdd80,#ffc671,#ffb363,#ffa258,#ff934d,#ff8544,#ff7a3c,#ff6f35,#ff662f,#ff5d2a,#ff5624,#ff4f20,#ff481c,#ff4218,#ff3d15,#ff3811,#ff340f,#ff2f0c,#ff2c0a,#ff2807,#ff2505,#ff2204,#ff1f02,#ff1c01,#ff1900,#ff1700,#ff1500,#ff1300,#f10,#ff0f00,#ff0d00,#ff0b00,#ff0a00,#ff0800,#ff0700,#ff0600,#ff0500)"></i>
<i style="background:linear-gradient(90deg,#00ffc5,#00ffc4,#00ffc3,#00ffc2,#00ffc1,#00ffc0,#00ffbf,#00ffbd,#00ffbc,#0fb,#00ffb9,#00ffb8,#00ffb6,#00ffb5,#00ffb3,#00ffb2,#00ffb0,#00ffaf,#00ffad,#00ffab,#08ffb8,#16ffb7,#25ffb5,#35ffb3,#47ffb1,#5bffaf,#70ffad,#86ffab,#9effa8,#b8ffa6,#d3ffa4,#f0ffa1,#fff095,#ffd683,#ffc073,#ffad65,#ff9c59,#ff8e4f,#ff8146,#ff763e,#ff6b37,#ff6231,#ff5a2b,#ff5226,#ff4c21,#ff451d,#ff4019,#ff3b16,#ff3612,#ff3110,#ff2d0d,#ff2a0b,#ff2608,#ff2306,#ff2004,#ff1d03,#ff1a01,#ff1800,#ff1500,#ff1300,#f10,#ff0f00,#ff0d00,#ff0c00,#ff0a00,#ff0900,#ff0700,#ff0600,#ff0500,#ff0400)"></i>
<i style="background:linear-gradient(90deg,#00ffca,#00ffc9,#00ffc8,#00ffc7,#00ffc6,#00ffc5,#00ffc4,#00ffc2,#00ffc1,#00ffc0,#00ffbf,#00ffbd,#00ffbc,#0fb,#00ffb9,#00ffb8,#00ffb6,#00ffb4,#00ffb3,#00ffb1,#09ffbf,#17ffbd,#27ffbc,#38ffba,#4affb8,#5effb6,#74ffb4,#8bffb2,#a4ffb0,#beffae,#daffab,#f8ffa9,#ffe997,#ffcf85,#ffba75,#ffa767,#ff975b,#ff8951,#ff7d48,#ff7140,#ff6839,#ff5f32,#ff572c,#ff4f27,#ff4923,#ff431e,#ff3d1a,#ff3817,#ff3314,#ff2f11,#ff2b0e,#ff270b,#ff2409,#ff2107,#ff1e05,#ff1b04,#ff1902,#ff1601,#ff1400,#ff1200,#ff1000,#ff0e00,#ff0c00,#ff0b00,#ff0900,#ff0800,#ff0600,#ff0500,#ff0400,#ff0300)"></i>
<i style="background:linear-gradient(90deg,#00ffcf,#00ffce,#00ffcd,#0fc,#00ffcb,#00ffca,#00ffc9,#00ffc8,#00ffc7,#00ffc5,#00ffc4,#00ffc3,#00ffc2,#00ffc0,#00ffbf,#00ffbd,#00ffbc,#00ffba,#00ffb9,#00ffb7,#0bffc6,#19ffc4,#29ffc3,#3affc1,#4dffbf,#62ffbe,#78ffbc,#90ffba,#a9ffb8,#c4ffb5,#e1ffb3,#fffeb0,#ffe19a,#ffc987,#ffb477,#ffa269,#ff925d,#ff8453,#ff784a,#ff6d41,#ff643a,#ff5b34,#ff532e,#ff4c29,#ff4624,#ff401f,#ff3b1c,#ff3618,#ff3115,#ff2d12,#ff290f,#ff250c,#ff220a,#ff1f08,#ff1c06,#ff1904,#ff1703,#ff1501,#ff1200,#ff1000,#ff0e00,#ff0d00,#ff0b00,#ff0900,#ff0800,#ff0700,#ff0500,#ff0400,#ff0300,#ff0200)"></i>
<i style="background:linear-gradient(90deg,#00ffd4,#00ffd3,#00ffd2,#00ffd1,#00ffd0,#00ffcf,#00ffce,#00ffcd,#0fc,#00ffcb,#00ffca,#00ffc9,#00ffc7,#00ffc6,#00ffc5,#00ffc3,#00ffc2,#00ffc1,#00ffbf,#00ffce,#0cffcd,#1bffcc,#2bffca,#3dffc9,#51ffc7,#66ffc5,#7dffc3,#95ffc2,#afffc0,#cbffbe,#e9ffbb,#fff5b2,#ffd99c,#ffc289,#ffae79,#ff9c6b,#ff8d5f,#ff8055,#ff744b,#ff6943,#ff603c,#ff5835,#ff502f,#ff492a,#ff4325,#ff3d21,#ff381d,#ff3319,#ff2f16,#ff2b13,#ff2710,#ff230d,#ff200b,#ff1d09,#ff1a07,#ff1805,#ff1503,#ff1302,#ff1101,#ff0f00,#ff0d00,#ff0b00,#ff0a00,#ff0800,#ff0700,#ff0500,#ff0400,#ff0300,#ff0200,#ff0100)"></i>
<i style="background:linear-gradient(90deg,#00ffd9,#00ffd9,#00ffd8,#00ffd7,#00ffd6,#00ffd5,#00ffd4,#00ffd3,#00ffd2,#00ffd1,#00ffd0,#00ffcf,#00ffce,#0fc,#00ffcb,#00ffca,#00ffc8,#00ffc7,#00ffc6,#01ffd6,#0dffd5,#1cffd3,#2dffd2,#40ffd0,#54ffcf,#6affcd,#81ffcc,#9affca,#b5ffc8,#d2ffc6,#f1ffc4,#ffedb5,#ffd29e,#ffbb8b,#ffa87b,#ff976d,#ff8861,#ff7b56,#ff704d,#ff6545,#ff5c3d,#ff5437,#ff4d31,#ff462b,#ff4026,#ff3a22,#ff351e,#ff311a,#ff2c17,#ff2814,#ff2511,#ff210e,#ff1e0c,#ff1b0a,#ff1908,#ff1606,#ff1404,#ff1203,#ff1001,#ff0e00,#ff0c00,#ff0a00,#ff0900,#ff0700,#ff0600,#ff0400,#ff0300,#ff0200,#ff0100,#f00)"></i>
<i style="background:linear-gradient(90deg,#00ffdf,#00ffde,#0fd,#00ffdc,#00ffdc,#00ffdb,#00ffda,#00ffd9,#00ffd8,#00ffd7,#00ffd6,#00ffd5,#00ffd4,#00ffd3,#00ffd1,#00ffd0,#00ffcf,#00ffce,#0fc,#02ffdd,#0fffdc,#1effdb,#30ffda,#43ffd9,#58ffd7,#6effd6,#86ffd4,#a0ffd3,#bcffd1,#daffcf,#faffce,#ffe5b7,#ffcba0,#ffb58d,#ffa27d,#ff916f,#ff8363,#ff7658,#ff6b4f,#ff6246,#ff593f,#ff5138,#ff4a32,#ff432d,#ff3d28,#ff3823,#ff331f,#ff2e1b,#ff2a18,#ff2615,#ff2312,#ff1f0f,#ff1c0d,#ff1a0b,#ff1708,#ff1507,#ff1205,#ff1003,#ff0e02,#ff0c01,#ff0b00,#ff0900,#ff0700,#ff0600,#ff0500,#ff0300,#ff0200,#ff0100,#f00,#f00)"></i>
<i style="background:linear-gradient(90deg,#00ffe4,#00ffe4,#00ffe3,#00ffe2,#00ffe1,#00ffe1,#00ffe0,#00ffdf,#00ffde,#0fd,#00ffdc,#00ffdb,#00ffda,#00ffd9,#00ffd8,#00ffd7,#00ffd6,#00ffd5,#00ffd3,#03ffe5,#10ffe4,#20ffe3,#32ffe2,#46ffe1,#5bffe0,#72ffdf,#8bffdd,#a6ffdc,#c3ffda,#e2ffd9,#fffbd4,#ffddb9,#ffc4a3,#ffae8f,#ff9c7f,#ff8c71,#ff7e65,#ff725a,#ff6750,#ff5e48,#ff5540,#ff4d3a,#ff4634,#ff402e,#ff3a29,#ff3524,#ff3020,#ff2c1d,#ff2819,#ff2416,#ff2113,#ff1e10,#ff1b0e,#ff180b,#ff1509,#ff1307,#ff1106,#ff0f04,#ff0d03,#ff0b01,#ff0900,#ff0800,#ff0600,#ff0500,#ff0400,#ff0300,#ff0100,#ff0100,#f00,#f00)"></i>
<i style="background:linear-gradient(90deg,#00ffea,#00ffe9,#00ffe9,#00ffe8,#00ffe7,#00ffe7,#00ffe6,#00ffe5,#00ffe4,#00ffe4,#00ffe3,#00ffe2,#00ffe1,#00ffe0,#00ffdf,#00ffde,#0fd,#00ffdc,#00ffdb,#04ffee,#12ffed,#22ffec,#35ffeb,#49ffea,#5fffe9,#77ffe8,#91ffe7,#acffe6,#caffe4,#eaffe3,#fff2d6,#ffd5bb,#ffbda5,#ffa892,#ff9681,#ff8773,#ff7967,#ff6e5c,#ff6352,#ff5a4a,#ff5242,#ff4a3b,#ff4335,#ff3d2f,#ff382a,#ff3326,#ff2e22,#ff2a1e,#ff261a,#ff2217,#ff1f14,#ff1c11,#ff190f,#ff160c,#ff140a,#ff1108,#ff0f06,#ff0d05,#ff0b03,#ff0a02,#ff0801,#ff0700,#ff0500,#ff0400,#ff0300,#ff0200,#ff0100,#f00,#f00,#f00)"></i>
<i style="background:linear-gradient(90deg,#00fff0,#00ffef,#00ffef,#0fe,#0fe,#00ffed,#00ffec,#00ffec,#00ffeb,#00ffea,#00ffe9,#00ffe9,#00ffe8,#00ffe7,#00ffe6,#00ffe5,#00ffe4,#00ffe3,#00ffe2,#05fff6,#14fff6,#25fff5,#38fff4,#4dfff3,#63fff2,#7cfff2,#96fff1,#b3fff0,#d2ffef,#f3ffee,#ffead9,#ffcdbe,#ffb6a7,#ffa294,#ff9183,#ff8275,#ff7568,#ff695d,#ff5f54,#ff564b,#ff4e44,#ff473d,#ff4036,#ff3a31,#ff352c,#ff3027,#ff2b23,#ff271f,#ff241b,#ff2018,#ff1d15,#ff1a12,#ff1710,#ff140d,#ff120b,#ff1009,#ff0e07,#ff0c05,#ff0a04,#ff0802,#ff0701,#ff0500,#ff0400,#ff0300,#ff0200,#ff0100,#f00,#f00,#f00,#f00)"></i>
<i style="background:linear-gradient(90deg,#00fff6,#00fff6,#00fff5,#00fff5,#00fff4,#00fff4,#00fff3,#00fff2,#00fff2,#00fff1,#00fff0,#00fff0,#00ffef,#0fe,#0fe,#00ffed,#00ffec,#00ffeb,#00ffea,#06ffff,#15ffff,#27fffe,#3bfffe,#50fffd,#68fffc,#81fffc,#9cfffb,#bafffa,#dafffa,#fcfff9,#ffe1db,#ffc6c0,#ffafa9,#ff9c96,#ff8b85,#ff7d77,#ff706a,#ff655f,#ff5b55,#ff524d,#ff4b45,#ff443e,#ff3d38,#ff3732,#ff322d,#ff2d28,#ff2924,#ff2520,#ff211c,#ff1e19,#ff1b16,#ff1813,#ff1510,#ff130e,#ff100c,#ff0e0a,#ff0c08,#ff0a06,#ff0905,#ff0703,#ff0602,#ff0401,#ff0300,#ff0200,#ff0100,#f00,#f00,#f00,#f00,#f00)"></i>
<i style="background:linear-gradient(90deg,#00fffc,#00fffc,#00fffc,#00fffb,#00fffb,#00fffa,#00fffa,#00fff9,#00fff9,#00fff8,#00fff8,#00fff7,#00fff7,#00fff6,#00fff5,#00fff5,#00fff4,#00fff3,#00fff3,#07f6ff,#16f6ff,#28f6ff,#3cf7ff,#51f7ff,#69f7ff,#82f8ff,#9ef8ff,#bcf8ff,#ddf9ff,#fff8fe,#ffd9dd,#ffbec2,#ffa8ab,#ff9698,#ff8687,#ff7879,#ff6b6c,#ff6161,#ff5757,#ff4f4e,#ff4747,#ff4040,#ff3a39,#ff3533,#ff302e,#ff2b29,#ff2725,#ff2321,#ff1f1d,#ff1c1a,#ff1917,#ff1614,#ff1311,#ff110f,#ff0f0d,#ff0d0b,#ff0b09,#ff0907,#ff0705,#ff0604,#ff0402,#ff0301,#ff0200,#ff0100,#f00,#f00,#f00,#f00,#f00,#f00)"></i>
<i style="background:linear-gradient(90deg,#00fbff,#00fcff,#00fcff,#00fcff,#00fdff,#00fdff,#00fdff,#00feff,#00feff,#00feff,#0ff,#0ff,#00fffe,#00fffe,#00fffd,#00fffd,#00fffc,#00fffc,#00fffb,#08edff,#17edff,#29edff,#3cedff,#52edff,#69edff,#82edff,#9eedff,#bef,#dbeeff,#feeeff,#ffd0df,#ffb7c4,#ffa2ad,#ff909a,#ff8089,#ff737a,#ff676e,#ff5d63,#ff5359,#ff4b50,#ff4448,#ff3d41,#ff373b,#ff3235,#ff2d30,#ff282b,#ff2426,#ff2122,#ff1d1f,#ff1a1b,#ff1718,#ff1415,#ff1212,#ff0f10,#ff0d0e,#ff0b0b,#ff0909,#ff0808,#ff0606,#ff0504,#ff0303,#ff0202,#ff0101,#f00,#f00,#f00,#f00,#f00,#f00,#f00)"></i>
<i style="background:linear-gradient(90deg,#00f5ff,#00f5ff,#00f5ff,#00f6ff,#00f6ff,#00f6ff,#00f6ff,#00f6ff,#00f7ff,#00f7ff,#00f7ff,#00f7ff,#00f8ff,#00f8ff,#00f8ff,#00f9ff,#00f9ff,#00f9ff,#00faff,#09e4ff,#18e4ff,#2ae4ff,#3de4ff,#52e4ff,#69e4ff,#82e3ff,#9de3ff,#bae3ff,#dae3ff,#fce3ff,#ffc8e1,#ffb0c6,#ff9baf,#ff8a9c,#ff7b8b,#ff6e7c,#ff6270,#ff5864,#ff505a,#ff4852,#ff414a,#ff3a42,#ff343c,#ff2f36,#ff2a31,#ff262c,#ff2227,#ff1e23,#ff1b20,#ff181c,#ff1519,#ff1316,#ff1013,#ff0e11,#ff0c0e,#ff0a0c,#ff080a,#ff0608,#ff0507,#ff0405,#ff0204,#ff0102,#ff0001,#f00,#f00,#f00,#f00,#f00,#f00,#f00)"></i>
<i style="background:linear-gradient(90deg,#00efff,#00efff,#00efff,#00efff,#00efff,#00efff,#00efff,#00efff,#00f0ff,#00f0ff,#00f0ff,#00f0ff,#00f0ff,#00f0ff,#00f0ff,#00f1ff,#00f1ff,#00f1ff,#00f1ff,#0adcff,#19dcff,#2adbff,#3edbff,#52dbff,#69daff,#82daff,#9dd9ff,#b9d9ff,#d8d9ff,#fad8ff,#ffc0e3,#ffa9c8,#ff95b1,#ff849e,#ff768d,#ff697e,#ff5e71,#ff5466,#ff4c5c,#ff4453,#ff3d4b,#ff3744,#ff313d,#ff2c37,#ff2832,#ff242d,#ff2029,#ff1c25,#ff1921,#ff161d,#ff131a,#ff1117,#ff0e14,#ff0c12,#ff0a0f,#ff080d,#ff070b,#ff0509,#ff0407,#ff0206,#ff0104,#ff0003,#ff0002,#ff0001,#f00,#f00,#f00,#f00,#f00,#f00)"></i>
<i style="background:linear-gradient(90deg,#00e9ff,#00e9ff,#00e9ff,#00e9ff,#00e9ff,#00e9ff,#00e9ff,#00e9ff,#00e9ff,#00e9ff,#00e9ff,#00e9ff,#00e9ff,#00e9ff,#00e9ff,#00e9ff,#00e9ff,#00e8ff,#00e8ff,#0bd4ff,#1ad3ff,#2bd3ff,#3ed2ff,#53d2ff,#69d1ff,#82d0ff,#9cd0ff,#b8cfff,#d7ceff,#f8ceff,#ffb8e5,#ffa2ca,#ff8fb3,#ff7ea0,#ff718f,#ff6480,#ff5a73,#ff5068,#ff485e,#ff4155,#ff3a4d,#ff3445,#ff2f3f,#ff2a39,#ff2533,#ff212e,#ff1e2a,#ff1a26,#ff1722,#ff141e,#ff121b,#ff0f18,#ff0d15,#ff0b13,#ff0910,#ff070e,#ff050c,#ff040a,#ff0308,#ff0106,#ff0005,#ff0003,#ff0002,#ff0001,#f00,#f00,#f00,#f00,#f00,#f00)"></i>
<i style="background:linear-gradient(90deg,#00e3ff,#00e3ff,#00e3ff,#00e2ff,#00e2ff,#00e2ff,#00e2ff,#00e2ff,#00e2ff,#00e2ff,#00e2ff,#00e1ff,#00e1ff,#00e1ff,#00e1ff,#00e1ff,#00e1ff,#00e0ff,#00cdff,#0cccff,#1bcbff,#2ccbff,#3fcaff,#53c9ff,#6ac8ff,#82c7ff,#9cc7ff,#b8c6ff,#d6c5ff,#f6c4ff,#ffb1e7,#ff9bcc,#ff89b5,#ff79a1,#ff6b91,#ff6082,#ff5575,#ff4c69,#ff445f,#ff3d56,#ff374e,#ff3147,#ff2c40,#ff273a,#ff2335,#ff1f30,#ff1b2b,#ff1827,#ff1523,#ff121f,#ff101c,#ff0d19,#ff0b16,#ff0913,#ff0711,#ff060f,#ff040d,#ff030b,#ff0209,#ff0107,#ff0006,#ff0004,#ff0003,#ff0002,#ff0001,#f00,#f00,#f00,#f00,#f00)"></i>
<i style="background:linear-gradient(90deg,#0df,#0df,#0df,#00dcff,#00dcff,#00dcff,#00dcff,#00dbff,#00dbff,#00dbff,#00dbff,#00daff,#00daff,#00daff,#00daff,#00d9ff,#00d9ff,#00d9ff,#01c5ff,#0dc4ff,#1cc3ff,#2dc3ff,#3fc2ff,#54c1ff,#6ac0ff,#82bfff,#9bbeff,#b7bcff,#d4bbff,#f4baff,#ffa9e9,#ff94ce,#ff83b7,#ff73a3,#ff6692,#ff5b84,#ff5177,#ff496b,#ff4161,#ff3a58,#ff3450,#ff2e48,#ff2941,#ff253b,#ff2036,#ff1d31,#ff192c,#ff1628,#ff1324,#ff1020,#ff0e1d,#ff0c1a,#ff0a17,#ff0814,#ff0612,#ff0410,#ff030d,#ff020b,#ff010a,#ff0008,#ff0006,#ff0005,#ff0003,#ff0002,#ff0001,#f00,#f00,#f00,#f00,#f00)"></i>
<i style="background:linear-gradient(90deg,#00d7ff,#00d7ff,#00d7ff,#00d6ff,#00d6ff,#00d6ff,#00d5ff,#00d5ff,#00d5ff,#00d4ff,#00d4ff,#00d4ff,#00d3ff,#00d3ff,#00d2ff,#00d2ff,#00d1ff,#00d1ff,#02beff,#0ebdff,#1dbcff,#2ebbff,#40baff,#54b9ff,#6ab7ff,#81b6ff,#9bb5ff,#b6b4ff,#d3b2ff,#f2b1ff,#ffa2eb,#ff8ed0,#ff7db9,#ff6ea5,#ff6294,#ff5785,#ff4d78,#ff456d,#ff3d62,#ff3759,#ff3151,#ff2b4a,#ff2643,#ff223d,#ff1e37,#ff1a32,#ff172d,#ff1429,#ff1125,#ff0f21,#ff0c1e,#ff0a1b,#ff0818,#ff0615,#ff0513,#ff0310,#ff020e,#ff010c,#ff000a,#ff0009,#ff0007,#ff0005,#ff0004,#ff0003,#ff0002,#ff0001,#f00,#f00,#f00,#f00)"></i>
<i style="background:linear-gradient(90deg,#00d2ff,#00d1ff,#00d1ff,#00d1ff,#00d0ff,#00d0ff,#00cfff,#00cfff,#00ceff,#00ceff,#00cdff,#00cdff,#0cf,#0cf,#00cbff,#00cbff,#00caff,#00c9ff,#02b6ff,#0fb5ff,#1eb4ff,#2eb3ff,#41b2ff,#55b1ff,#6aafff,#81aeff,#9aadff,#b5abff,#d2a9ff,#f1a8ff,#ff9aed,#ff87d2,#f7b,#ff69a7,#ff5d96,#ff5287,#ff497a,#ff416e,#ff3a64,#ff335b,#ff2e52,#ff284b,#ff2444,#ff203e,#ff1c38,#ff1833,#ff152f,#ff122a,#ff0f26,#ff0d22,#ff0b1f,#ff091c,#ff0719,#ff0516,#ff0314,#ff0211,#ff010f,#ff000d,#ff000b,#ff0009,#ff0008,#ff0006,#ff0005,#ff0003,#ff0002,#ff0001,#f00,#f00,#f00,#f00)"></i>
<i style="background:linear-gradient(90deg,#0cf,#0cf,#00cbff,#00cbff,#00caff,#00caff,#00c9ff,#00c9ff,#00c8ff,#00c8ff,#00c7ff,#00c6ff,#00c6ff,#00c5ff,#00c4ff,#00c4ff,#00c3ff,#00c2ff,#03afff,#10aeff,#1eadff,#2facff,#41aaff,#55a9ff,#6aa8ff,#81a6ff,#9aa4ff,#b4a3ff,#d1a1ff,#ef9fff,#ff93ef,#ff81d4,#ff71bd,#ff64a9,#ff5898,#ff4e89,#ff457c,#ff3d70,#ff3666,#ff305c,#ff2b54,#ff264c,#ff2146,#ff1d3f,#ff193a,#ff1634,#ff1330,#ff102b,#ff0e27,#ff0b23,#ff0920,#ff071d,#ff051a,#ff0417,#ff0214,#ff0112,#ff0010,#ff000e,#ff000c,#ff000a,#ff0008,#ff0007,#ff0005,#ff0004,#ff0003,#ff0002,#ff0001,#f00,#f00,#f00)"></i>
<i style="background:linear-gradient(90deg,#00c7ff,#00c6ff,#00c6ff,#00c5ff,#00c5ff,#00c4ff,#00c3ff,#00c3ff,#00c2ff,#00c1ff,#00c1ff,#00c0ff,#00bfff,#00beff,#00beff,#00bdff,#00bcff,#0bf,#04a9ff,#11a7ff,#1fa6ff,#30a5ff,#42a3ff,#55a2ff,#6aa0ff,#819eff,#999cff,#b39bff,#cf99ff,#ed97ff,#ff8cf1,#ff7bd6,#ff6cbf,#ff5fab,#ff539a,#ff4a8b,#ff417d,#ff3a72,#ff3367,#ff2d5e,#ff2855,#ff234e,#ff1f47,#ff1b41,#ff173b,#ff1436,#ff1131,#ff0e2c,#ff0c28,#ff0a25,#ff0721,#ff061e,#ff041b,#ff0218,#ff0115,#ff0013,#f01,#ff000e,#ff000d,#ff000b,#ff0009,#ff0007,#ff0006,#ff0004,#ff0003,#ff0002,#ff0001,#f00,#f00,#f00)"></i>
<i style="background:linear-gradient(90deg,#00c1ff,#00c1ff,#00c0ff,#00c0ff,#00bfff,#00beff,#00beff,#00bdff,#00bcff,#0bf,#0bf,#00baff,#00b9ff,#00b8ff,#00b7ff,#00b6ff,#00b5ff,#00b4ff,#05a2ff,#11a1ff,#209fff,#309eff,#429cff,#569aff,#6a99ff,#8197ff,#9995ff,#b393ff,#ce91ff,#ec8eff,#ff86f3,#ff74d8,#ff66c1,#ff5aad,#ff4f9b,#ff468c,#ff3d7f,#ff3673,#ff3069,#ff2a5f,#ff2557,#ff204f,#ff1c48,#ff1842,#ff153c,#ff1237,#ff0f32,#ff0c2e,#ff0a29,#ff0826,#ff0622,#ff041f,#ff031c,#ff0119,#ff0016,#ff0014,#f01,#ff000f,#ff000d,#ff000b,#ff000a,#ff0008,#ff0006,#ff0005,#ff0004,#ff0003,#ff0001,#ff0001,#f00,#f00)"></i>
<i style="background:linear-gradient(90deg,#00bcff,#00bcff,#0bf,#00baff,#00b9ff,#00b9ff,#00b8ff,#00b7ff,#00b6ff,#00b5ff,#00b4ff,#00b4ff,#00b3ff,#00b2ff,#00b1ff,#00afff,#00aeff,#00adff,#069cff,#129aff,#2198ff,#3197ff,#4395ff,#5693ff,#6b91ff,#818fff,#988dff,#b28bff,#cd89ff,#ea87ff,#ff7ff5,#ff6eda,#ff61c2,#ff55ae,#ff4a9d,#ff418e,#ff3a81,#ff3375,#ff2c6a,#ff2761,#ff2258,#ff1e51,#ff1a4a,#ff1643,#ff133d,#ff1038,#ff0d33,#ff0b2f,#ff082a,#ff0627,#ff0423,#ff0320,#ff011d,#ff001a,#ff0017,#ff0015,#ff0012,#ff0010,#ff000e,#ff000c,#ff000a,#ff0009,#ff0007,#ff0006,#ff0004,#ff0003,#ff0002,#ff0001,#f00,#f00)"></i>
<i style="background:linear-gradient(90deg,#00b7ff,#00b6ff,#00b6ff,#00b5ff,#00b4ff,#00b3ff,#00b2ff,#00b1ff,#00b1ff,#00b0ff,#00afff,#00aeff,#00adff,#00abff,#0af,#00a9ff,#00a8ff,#00a7ff,#0795ff,#1394ff,#2292ff,#3290ff,#438eff,#568cff,#6b8aff,#8188ff,#9886ff,#b184ff,#cc81ff,#e97fff,#ff78f7,#ff69dc,#ff5bc4,#ff50b0,#ff469f,#ff3d90,#ff3682,#ff2f76,#ff296c,#ff2462,#ff1f5a,#ff1b52,#ff174b,#ff1445,#ff113f,#ff0e39,#ff0b34,#ff0930,#ff072c,#ff0528,#ff0324,#ff0221,#ff001e,#ff001b,#ff0018,#ff0015,#ff0013,#f01,#ff000f,#ff000d,#ff000b,#ff0009,#ff0008,#ff0006,#ff0005,#ff0004,#ff0002,#ff0001,#ff0001,#f00)"></i>
<i style="background:linear-gradient(90deg,#00b2ff,#00b1ff,#00b1ff,#00b0ff,#00afff,#00aeff,#00adff,#00acff,#00abff,#0af,#00a9ff,#00a8ff,#00a7ff,#00a5ff,#00a4ff,#00a3ff,#00a2ff,#00a0ff,#078fff,#148dff,#238cff,#328aff,#48f,#5786ff,#6b84ff,#8081ff,#987fff,#b07dff,#cb7aff,#e778ff,#ff72f9,#ff63dd,#ff56c6,#ff4bb2,#ff42a1,#ff3991,#ff3284,#ff2c78,#ff266d,#ff2164,#ff1c5b,#ff1853,#ff154c,#ff1146,#ff0e40,#ff0c3a,#ff0935,#ff0731,#ff052d,#ff0329,#ff0225,#f02,#ff001e,#ff001c,#ff0019,#ff0016,#ff0014,#ff0012,#ff0010,#ff000e,#ff000c,#ff000a,#ff0008,#ff0007,#ff0006,#ff0004,#ff0003,#ff0002,#ff0001,#f00)"></i>
<i style="background:linear-gradient(90deg,#00adff,#00acff,#00abff,#00abff,#0af,#00a9ff,#00a8ff,#00a7ff,#00a5ff,#00a4ff,#00a3ff,#00a2ff,#00a1ff,#009fff,#009eff,#009dff,#009bff,#009aff,#0889ff,#1587ff,#2385ff,#3383ff,#4481ff,#577fff,#6b7dff,#807bff,#9778ff,#b076ff,#ca73ff,#e670ff,#ff6cfb,#ff5ddf,#ff51c8,#ff46b4,#ff3da2,#ff3593,#ff2f86,#ff287a,#ff236f,#ff1e65,#ff1a5d,#ff1655,#ff124e,#ff0f47,#ff0c41,#ff0a3c,#ff0837,#ff0532,#ff042e,#ff022a,#ff0126,#ff0023,#ff001f,#ff001c,#ff001a,#ff0017,#ff0015,#ff0012,#ff0010,#ff000e,#ff000c,#ff000b,#ff0009,#ff0008,#ff0006,#ff0005,#ff0004,#ff0002,#ff0001,#ff0001)"></i>
<i style="background:linear-gradient(90deg,#00a8ff,#00a7ff,#00a6ff,#00a6ff,#00a4ff,#00a3ff,#00a2ff,#00a1ff,#00a0ff,#009fff,#009eff,#009cff,#009bff,#009aff,#0098ff,#0097ff,#0095ff,#0094ff,#0983ff,#1681ff,#247fff,#347dff,#457bff,#5779ff,#6b77ff,#8074ff,#9772ff,#af6fff,#c96cff,#e469ff,#ff65fc,#ff58e1,#ff4cca,#ff42b6,#ff39a4,#ff3295,#ff2b87,#ff257b,#ff2070,#ff1b67,#ff175e,#ff1356,#ff104f,#ff0d48,#ff0a42,#ff083d,#ff0638,#ff0433,#ff022f,#ff012b,#ff0027,#ff0024,#ff0020,#ff001d,#ff001b,#ff0018,#ff0015,#ff0013,#f01,#ff000f,#ff000d,#ff000b,#ff000a,#ff0008,#ff0007,#ff0005,#ff0004,#ff0003,#ff0002,#ff0001)"></i>
<i style="background:linear-gradient(90deg,#00a4ff,#00a3ff,#00a2ff,#00a1ff,#009fff,#009eff,#009dff,#009cff,#009bff,#009aff,#0098ff,#0097ff,#0096ff,#0094ff,#0093ff,#0091ff,#008fff,#008eff,#0a7eff,#177cff,#257aff,#3477ff,#4575ff,#5873ff,#6b70ff,#806eff,#976bff,#ae69ff,#c866ff,#e363ff,#ff5ffe,#ff52e3,#ff47cb,#ff3db7,#ff35a6,#ff2e96,#ff2889,#ff227d,#ff1d72,#ff1968,#ff155f,#ff1157,#ff0e50,#ff0b4a,#ff0844,#ff063e,#ff0439,#ff0234,#ff0130,#ff002c,#ff0028,#ff0025,#ff0021,#ff001e,#ff001b,#ff0019,#ff0016,#ff0014,#ff0012,#ff0010,#ff000e,#ff000c,#ff000a,#ff0009,#ff0007,#ff0006,#ff0005,#ff0003,#ff0002,#ff0001)"></i>
<i style="background:linear-gradient(90deg,#009fff,#009eff,#009dff,#009cff,#009bff,#09f,#0098ff,#0097ff,#0096ff,#0094ff,#0093ff,#0092ff,#0090ff,#008fff,#008dff,#008bff,#008aff,#017aff,#0b78ff,#1776ff,#2574ff,#3572ff,#466fff,#586dff,#6b6aff,#8068ff,#9665ff,#ae62ff,#c75fff,#e25cff,#fe59ff,#ff4de5,#ff42cd,#ff39b9,#ff31a7,#ff2a98,#ff248a,#ff1f7e,#ff1a73,#ff166a,#ff1261,#ff0f59,#ff0c51,#ff094b,#ff0745,#ff043f,#ff033a,#ff0135,#ff0031,#ff002d,#ff0029,#ff0026,#f02,#ff001f,#ff001c,#ff001a,#ff0017,#ff0015,#ff0013,#f01,#ff000f,#ff000d,#ff000b,#ff0009,#ff0008,#ff0007,#ff0005,#ff0004,#ff0003,#ff0002)"></i>
<i style="background:linear-gradient(90deg,#009aff,#09f,#0098ff,#0097ff,#0096ff,#0095ff,#0093ff,#0092ff,#0091ff,#008fff,#008eff,#008cff,#008bff,#0089ff,#08f,#0086ff,#0084ff,#0175ff,#0c73ff,#1870ff,#266eff,#366cff,#466aff,#5867ff,#6b64ff,#8062ff,#965fff,#ad5cff,#c659ff,#e056ff,#fc53ff,#ff48e6,#ff3dcf,#ff35bb,#ff2da9,#ff279a,#ff218c,#ff1c80,#ff1775,#ff136b,#ff1062,#ff0c5a,#ff0a53,#ff074c,#ff0546,#ff0340,#ff013b,#ff0036,#ff0032,#ff002e,#ff002a,#ff0026,#ff0023,#ff0020,#ff001d,#ff001a,#ff0018,#ff0016,#ff0013,#f01,#ff000f,#ff000d,#ff000c,#ff000a,#ff0009,#ff0007,#ff0006,#ff0005,#ff0003,#ff0002)"></i>
<i style="background:linear-gradient(90deg,#0096ff,#0095ff,#0094ff,#0092ff,#0091ff,#0090ff,#008eff,#008dff,#008cff,#008aff,#0089ff,#0087ff,#0086ff,#0084ff,#0082ff,#0080ff,#007fff,#026fff,#0c6dff,#196bff,#2769ff,#3666ff,#4764ff,#5961ff,#6c5fff,#805cff,#9559ff,#ac56ff,#c553ff,#df50ff,#fb4dff,#ff43e8,#ff39d1,#ff31bc,#ff29ab,#ff239b,#ff1e8d,#ff1981,#ff1476,#ff116c,#ff0d63,#ff0a5b,#ff0854,#ff054d,#ff0347,#ff0142,#ff003c,#ff0037,#f03,#ff002f,#ff002b,#ff0027,#ff0024,#ff0021,#ff001e,#ff001b,#ff0019,#ff0016,#ff0014,#ff0012,#ff0010,#ff000e,#ff000c,#ff000b,#ff0009,#ff0008,#ff0006,#ff0005,#ff0004,#ff0003)"></i>
<i style="background:linear-gradient(90deg,#0091ff,#0090ff,#008fff,#008eff,#008cff,#008bff,#008aff,#08f,#0087ff,#0085ff,#0084ff,#0082ff,#0080ff,#007fff,#007dff,#007bff,#0079ff,#036aff,#0d68ff,#1a66ff,#2864ff,#3761ff,#475fff,#595cff,#6c59ff,#8056ff,#9554ff,#ac51ff,#c44dff,#de4aff,#f947ff,#ff3eea,#ff34d2,#ff2cbe,#ff26ac,#ff209d,#ff1a8f,#ff1683,#ff1278,#ff0e6e,#ff0b65,#ff085d,#ff0655,#ff034f,#ff0248,#ff0043,#ff003d,#ff0039,#ff0034,#ff0030,#ff002c,#ff0028,#ff0025,#f02,#ff001f,#ff001c,#ff001a,#ff0017,#ff0015,#ff0013,#f01,#ff000f,#ff000d,#ff000b,#ff000a,#ff0008,#ff0007,#ff0006,#ff0004,#ff0003)"></i>
<i style="background:linear-gradient(90deg,#008dff,#008cff,#008bff,#0089ff,#08f,#0087ff,#0085ff,#0084ff,#0082ff,#0080ff,#007fff,#007dff,#007bff,#007aff,#0078ff,#0076ff,#0074ff,#0365ff,#0e63ff,#1a61ff,#285eff,#375cff,#4859ff,#5957ff,#6c54ff,#8051ff,#954eff,#ab4bff,#c348ff,#d4f,#f841ff,#ff39eb,#ff30d4,#ff28c0,#ff22ae,#ff1c9e,#ff1791,#ff1384,#ff0f79,#ff0c6f,#ff0966,#ff065e,#ff0457,#ff0250,#ff004a,#f04,#ff003f,#ff003a,#ff0035,#ff0031,#ff002d,#ff0029,#ff0026,#ff0023,#ff0020,#ff001d,#ff001a,#ff0018,#ff0016,#ff0013,#f01,#ff0010,#ff000e,#ff000c,#ff000a,#ff0009,#ff0007,#ff0006,#ff0005,#ff0004)"></i>
<i style="background:linear-gradient(90deg,#0089ff,#08f,#0086ff,#0085ff,#0083ff,#0082ff,#0081ff,#007fff,#007dff,#007cff,#007aff,#0078ff,#07f,#0075ff,#0073ff,#0071ff,#006fff,#0460ff,#0f5eff,#1b5cff,#2959ff,#3857ff,#4854ff,#5951ff,#6c4fff,#804cff,#9449ff,#ab46ff,#c242ff,#db3fff,#f63bff,#ff34ed,#ff2cd6,#ff24c1,#ff1eb0,#ff19a0,#ff1492,#ff1086,#ff0d7b,#ff0971,#ff0768,#ff045f,#ff0258,#ff0051,#ff004b,#ff0045,#ff0040,#ff003b,#ff0036,#ff0032,#ff002e,#ff002a,#ff0027,#ff0024,#ff0021,#ff001e,#ff001b,#ff0019,#ff0016,#ff0014,#ff0012,#ff0010,#ff000e,#ff000d,#ff000b,#ff000a,#ff0008,#ff0007,#ff0005,#ff0004)"></i>
<i style="background:linear-gradient(90deg,#0085ff,#0083ff,#0082ff,#0081ff,#007fff,#007eff,#007cff,#007aff,#0079ff,#07f,#0075ff,#0074ff,#0072ff,#0070ff,#006eff,#006cff,#006aff,#055cff,#0f59ff,#1c57ff,#2a54ff,#3852ff,#484fff,#5a4cff,#6c4aff,#7f47ff,#9443ff,#aa40ff,#c13dff,#da3aff,#f536ff,#ff2fef,#ff27d7,#ff21c3,#ff1bb1,#ff16a1,#ff1194,#ff0d87,#ff0a7c,#ff0772,#ff0569,#ff0261,#ff0159,#ff0052,#ff004c,#ff0046,#ff0041,#ff003c,#ff0037,#f03,#ff002f,#ff002b,#ff0028,#ff0025,#f02,#ff001f,#ff001c,#ff001a,#ff0017,#ff0015,#ff0013,#f01,#ff000f,#ff000d,#ff000c,#ff000a,#ff0009,#ff0007,#ff0006,#ff0005)"></i>
<i style="background:linear-gradient(90deg,#0081ff,#007fff,#007eff,#007cff,#007bff,#0079ff,#0078ff,#0076ff,#0074ff,#0073ff,#0071ff,#006fff,#006dff,#006bff,#0069ff,#0067ff,#0065ff,#0557ff,#1055ff,#1d52ff,#2a50ff,#394dff,#494aff,#5a47ff,#6c45ff,#7f42ff,#943eff,#aa3bff,#c138ff,#d934ff,#f331ff,#ff2bf0,#ff23d9,#ff1dc5,#ff17b3,#ff13a3,#ff0e95,#ff0b89,#ff087d,#ff0573,#ff036a,#ff0162,#ff005a,#ff0053,#ff004d,#ff0047,#ff0042,#ff003d,#ff0038,#ff0034,#ff0030,#ff002c,#ff0029,#ff0025,#f02,#ff0020,#ff001d,#ff001a,#ff0018,#ff0016,#ff0014,#ff0012,#ff0010,#ff000e,#ff000c,#ff000b,#ff0009,#ff0008,#ff0007,#ff0005)"></i>
<i style="background:linear-gradient(90deg,#007dff,#007bff,#007aff,#0078ff,#07f,#0075ff,#0073ff,#0072ff,#0070ff,#006eff,#006cff,#006bff,#0069ff,#0067ff,#0065ff,#0062ff,#0060ff,#0653ff,#1150ff,#1d4eff,#2b4bff,#3a48ff,#4946ff,#5a43ff,#6c40ff,#7f3dff,#933aff,#a936ff,#c033ff,#d82fff,#f22cff,#ff26f2,#ff1fda,#ff19c6,#ff14b4,#ff10a5,#ff0c97,#ff088a,#ff057f,#ff0375,#ff016c,#ff0063,#ff005c,#f05,#ff004e,#ff0048,#ff0043,#ff003e,#ff0039,#ff0035,#ff0031,#ff002d,#ff002a,#ff0026,#ff0023,#ff0020,#ff001e,#ff001b,#ff0019,#ff0016,#ff0014,#ff0012,#ff0010,#ff000f,#ff000d,#ff000b,#ff000a,#ff0008,#ff0007,#ff0006)"></i>
<i style="background:linear-gradient(90deg,#0079ff,#07f,#0076ff,#0074ff,#0072ff,#0071ff,#006fff,#006dff,#006cff,#006aff,#0068ff,#06f,#0064ff,#0062ff,#0060ff,#005eff,#005cff,#074eff,#124cff,#1e49ff,#2c46ff,#3a44ff,#4a41ff,#5a3eff,#6c3bff,#7f38ff,#9335ff,#a832ff,#bf2eff,#d72bff,#f027ff,#ff22f4,#ff1bdc,#ff16c8,#ff11b6,#ff0da6,#ff0998,#ff068c,#ff0380,#ff0176,#ff006d,#ff0065,#ff005d,#ff0056,#ff004f,#ff004a,#f04,#ff003f,#ff003a,#ff0036,#ff0032,#ff002e,#ff002b,#ff0027,#ff0024,#ff0021,#ff001e,#ff001c,#ff0019,#ff0017,#ff0015,#ff0013,#f01,#ff000f,#ff000e,#ff000c,#ff000a,#ff0009,#ff0008,#ff0006)"></i>
<i style="background:linear-gradient(90deg,#0075ff,#0073ff,#0072ff,#0070ff,#006eff,#006dff,#006bff,#0069ff,#0068ff,#06f,#0064ff,#0062ff,#0060ff,#005eff,#005cff,#0059ff,#0057ff,#084aff,#1247ff,#1f45ff,#2c42ff,#3b3fff,#4a3dff,#5b3aff,#6c37ff,#7f33ff,#9330ff,#a82dff,#be2aff,#d626ff,#ef22ff,#ff1ef5,#ff17de,#ff12c9,#ff0eb7,#ff0aa8,#ff069a,#ff048d,#ff0182,#f07,#ff006e,#f06,#ff005e,#ff0057,#ff0051,#ff004b,#ff0045,#ff0040,#ff003b,#ff0037,#f03,#ff002f,#ff002b,#ff0028,#ff0025,#f02,#ff001f,#ff001d,#ff001a,#ff0018,#ff0016,#ff0014,#ff0012,#ff0010,#ff000e,#ff000d,#ff000b,#ff000a,#ff0008,#ff0007)"></i>
<i style="background:linear-gradient(90deg,#0071ff,#006fff,#006eff,#006cff,#006aff,#0069ff,#0067ff,#0065ff,#0063ff,#0062ff,#0060ff,#005eff,#005cff,#0059ff,#0057ff,#05f,#0053ff,#0846ff,#1343ff,#1f40ff,#2d3eff,#3b3bff,#4b38ff,#5b35ff,#6c32ff,#7f2fff,#932cff,#a729ff,#bd25ff,#d522ff,#ed1eff,#ff19f7,#ff14df,#ff0fcb,#ff0bb9,#ff07a9,#ff049b,#ff028e,#ff0083,#ff0079,#ff0070,#ff0067,#ff005f,#ff0058,#ff0052,#ff004c,#ff0046,#ff0041,#ff003c,#ff0038,#ff0034,#ff0030,#ff002c,#ff0029,#ff0026,#ff0023,#ff0020,#ff001d,#ff001b,#ff0019,#ff0016,#ff0014,#ff0012,#f01,#ff000f,#ff000d,#ff000c,#ff000a,#ff0009,#ff0007)"></i>
<i style="background:linear-gradient(90deg,#006dff,#006cff,#006aff,#0068ff,#0067ff,#0065ff,#0063ff,#0061ff,#005fff,#005dff,#005bff,#0059ff,#0057ff,#05f,#0053ff,#0051ff,#04f,#0941ff,#143fff,#203cff,#2d3aff,#3c37ff,#4b34ff,#5b31ff,#6c2eff,#7f2bff,#9228ff,#a724ff,#bd21ff,#d41dff,#ec1aff,#ff15f8,#ff10e1,#ff0ccc,#ff08ba,#ff05ab,#ff029c,#ff0090,#ff0084,#ff007a,#ff0071,#ff0068,#ff0061,#ff005a,#ff0053,#ff004d,#ff0047,#ff0042,#ff003d,#ff0039,#ff0035,#ff0031,#ff002d,#ff002a,#ff0027,#ff0024,#ff0021,#ff001e,#ff001c,#ff0019,#ff0017,#ff0015,#ff0013,#f01,#ff0010,#ff000e,#ff000c,#ff000b,#ff0009,#ff0008)"></i>
<i style="background:linear-gradient(90deg,#0069ff,#0068ff,#06f,#0064ff,#0063ff,#0061ff,#005fff,#005dff,#005bff,#0059ff,#0057ff,#05f,#0053ff,#0051ff,#004fff,#004cff,#0140ff,#0a3dff,#153bff,#2138ff,#2e36ff,#3c33ff,#4b30ff,#5b2dff,#6d2aff,#7f27ff,#9223ff,#a620ff,#bc1dff,#d319ff,#eb16ff,#ff12fa,#ff0de2,#ff09ce,#ff05bc,#ff02ac,#ff009e,#ff0091,#ff0086,#ff007c,#ff0072,#ff006a,#ff0062,#ff005b,#ff0054,#ff004e,#ff0048,#ff0043,#ff003e,#ff003a,#ff0036,#ff0032,#ff002e,#ff002b,#ff0028,#ff0025,#f02,#ff001f,#ff001d,#ff001a,#ff0018,#ff0016,#ff0014,#ff0012,#ff0010,#ff000e,#ff000d,#ff000b,#ff000a,#ff0009)"></i>
<i style="background:linear-gradient(90deg,#06f,#0064ff,#0062ff,#0061ff,#005fff,#005dff,#005bff,#0059ff,#0058ff,#0056ff,#0053ff,#0051ff,#004fff,#004dff,#004bff,#0048ff,#013cff,#0a3aff,#1537ff,#2134ff,#2e32ff,#3d2fff,#4c2cff,#5c29ff,#6d26ff,#7f23ff,#921fff,#a61cff,#bb19ff,#d215ff,#ea12ff,#ff0efb,#ff09e4,#ff06cf,#ff03bd,#ff00ae,#ff009f,#ff0093,#ff0087,#ff007d,#ff0073,#ff006b,#ff0063,#ff005c,#f05,#ff004f,#ff004a,#f04,#ff003f,#ff003b,#ff0037,#f03,#ff002f,#ff002c,#ff0028,#ff0025,#ff0023,#ff0020,#ff001d,#ff001b,#ff0019,#ff0017,#ff0015,#ff0013,#f01,#ff000f,#ff000d,#ff000c,#ff000a,#ff0009)"></i>
<i style="background:linear-gradient(90deg,#0062ff,#0061ff,#005fff,#005dff,#005bff,#0059ff,#0058ff,#0056ff,#0054ff,#0052ff,#0050ff,#004dff,#004bff,#0049ff,#0047ff,#04f,#0238ff,#0b36ff,#1633ff,#2230ff,#2f2eff,#3d2bff,#4c28ff,#5c25ff,#6d22ff,#7f1fff,#921cff,#a518ff,#bb15ff,#d111ff,#e80eff,#ff0afd,#ff06e5,#ff03d1,#ff00bf,#ff00af,#ff00a1,#ff0094,#ff0089,#ff007e,#ff0075,#ff006c,#ff0064,#ff005d,#ff0056,#ff0050,#ff004b,#ff0045,#ff0041,#ff003c,#ff0038,#ff0034,#ff0030,#ff002d,#ff0029,#ff0026,#ff0023,#ff0021,#ff001e,#ff001c,#ff0019,#ff0017,#ff0015,#ff0013,#f01,#ff0010,#ff000e,#ff000d,#ff000b,#ff000a)"></i>
<i style="background:linear-gradient(90deg,#005fff,#005dff,#005bff,#005aff,#0058ff,#0056ff,#0054ff,#0052ff,#0050ff,#004eff,#004cff,#004aff,#0047ff,#0045ff,#0043ff,#0040ff,#0335ff,#0c32ff,#172fff,#232dff,#302aff,#3e27ff,#4c24ff,#5c21ff,#6d1eff,#7f1bff,#9118ff,#a515ff,#ba11ff,#d00eff,#e70aff,#ff07fe,#ff03e7,#ff01d2,#ff00c0,#ff00b0,#ff00a2,#ff0095,#ff008a,#ff0080,#ff0076,#ff006d,#f06,#ff005e,#ff0058,#ff0051,#ff004c,#ff0046,#ff0042,#ff003d,#ff0039,#ff0035,#ff0031,#ff002d,#ff002a,#ff0027,#ff0024,#ff0021,#ff001f,#ff001c,#ff001a,#ff0018,#ff0016,#ff0014,#ff0012,#ff0010,#ff000f,#ff000d,#ff000c,#ff000a)"></i>
<i style="background:linear-gradient(90deg,#005bff,#005aff,#0058ff,#0056ff,#0054ff,#0052ff,#0050ff,#004eff,#004cff,#004aff,#0048ff,#0046ff,#04f,#0041ff,#003fff,#003dff,#0331ff,#0d2eff,#172cff,#2329ff,#3026ff,#3e23ff,#4d21ff,#5c1eff,#6d1bff,#7e17ff,#9114ff,#a511ff,#b90eff,#cf0aff,#e607ff,#fe04ff,#ff01e8,#ff00d4,#ff00c2,#ff00b2,#ff00a4,#ff0097,#ff008b,#ff0081,#f07,#ff006f,#ff0067,#ff005f,#ff0059,#ff0053,#ff004d,#ff0047,#ff0043,#ff003e,#ff003a,#ff0036,#ff0032,#ff002e,#ff002b,#ff0028,#ff0025,#f02,#ff0020,#ff001d,#ff001b,#ff0019,#ff0017,#ff0015,#ff0013,#f01,#ff000f,#ff000e,#ff000c,#ff000b)"></i>
<i style="background:linear-gradient(90deg,#0058ff,#0056ff,#0054ff,#0053ff,#0051ff,#004fff,#004dff,#004bff,#0049ff,#0047ff,#0045ff,#0042ff,#0040ff,#003eff,#003bff,#0039ff,#042eff,#0d2bff,#1828ff,#2426ff,#3123ff,#3e20ff,#4d1dff,#5d1aff,#6d17ff,#7e14ff,#9111ff,#a40eff,#b90aff,#ce07ff,#e504ff,#fd01ff,#ff00ea,#ff00d5,#ff00c3,#ff00b3,#ff00a5,#ff0098,#ff008d,#ff0082,#ff0079,#ff0070,#ff0068,#ff0061,#ff005a,#ff0054,#ff004e,#ff0049,#f04,#ff003f,#ff003b,#ff0037,#f03,#ff002f,#ff002c,#ff0029,#ff0026,#ff0023,#ff0020,#ff001e,#ff001c,#ff0019,#ff0017,#ff0015,#ff0013,#ff0012,#ff0010,#ff000e,#ff000d,#ff000b)"></i>
<i style="background:linear-gradient(90deg,#05f,#0053ff,#0051ff,#004fff,#004dff,#004bff,#0049ff,#0047ff,#0045ff,#0043ff,#0041ff,#003fff,#003cff,#003aff,#0038ff,#0035ff,#052aff,#0e27ff,#1925ff,#2522ff,#311fff,#3f1cff,#4d1aff,#5d17ff,#6d14ff,#7e11ff,#900dff,#a40aff,#b807ff,#cd04ff,#e401ff,#fb00ff,#ff00eb,#ff00d7,#ff00c5,#ff00b5,#ff00a6,#ff009a,#ff008e,#ff0083,#ff007a,#ff0071,#ff0069,#ff0062,#ff005b,#f05,#ff004f,#ff004a,#ff0045,#ff0040,#ff003c,#ff0037,#ff0034,#ff0030,#ff002d,#ff002a,#ff0027,#ff0024,#ff0021,#ff001f,#ff001c,#ff001a,#ff0018,#ff0016,#ff0014,#ff0012,#f01,#ff000f,#ff000d,#ff000c)"></i>
<i style="background:linear-gradient(90deg,#0051ff,#004fff,#004eff,#004cff,#004aff,#0048ff,#0046ff,#04f,#0042ff,#0040ff,#003eff,#003bff,#0039ff,#0037ff,#0034ff,#0032ff,#0527ff,#0f24ff,#1921ff,#251fff,#321cff,#3f19ff,#4e16ff,#5d13ff,#6d10ff,#7e0dff,#900aff,#a307ff,#b704ff,#cc02ff,#e300ff,#fa00ff,#ff00ed,#ff00d8,#ff00c6,#ff00b6,#ff00a8,#ff009b,#ff008f,#ff0085,#ff007b,#ff0072,#ff006a,#ff0063,#ff005c,#ff0056,#ff0050,#ff004b,#ff0046,#ff0041,#ff003c,#ff0038,#ff0035,#ff0031,#ff002e,#ff002a,#ff0027,#ff0025,#f02,#ff001f,#ff001d,#ff001b,#ff0019,#ff0017,#ff0015,#ff0013,#f01,#ff000f,#ff000e,#ff000c)"></i>
<i style="background:linear-gradient(90deg,#004eff,#004cff,#004aff,#0049ff,#0047ff,#0045ff,#0043ff,#0041ff,#003eff,#003cff,#003aff,#0038ff,#0036ff,#03f,#0031ff,#002eff,#0623ff,#0f21ff,#1a1eff,#261cff,#3219ff,#4016ff,#4e13ff,#5d10ff,#6d0dff,#7e0aff,#9007ff,#a305ff,#b702ff,#c0f,#e200ff,#f900ff,#f0e,#ff00da,#ff00c8,#ff00b8,#ff00a9,#ff009c,#ff0091,#ff0086,#ff007c,#ff0074,#ff006b,#ff0064,#ff005d,#ff0057,#ff0051,#ff004c,#ff0047,#ff0042,#ff003d,#ff0039,#ff0035,#ff0032,#ff002e,#ff002b,#ff0028,#ff0025,#ff0023,#ff0020,#ff001e,#ff001b,#ff0019,#ff0017,#ff0015,#ff0013,#ff0012,#ff0010,#ff000f,#ff000d)"></i>
<i style="background:linear-gradient(90deg,#004bff,#0049ff,#0047ff,#0045ff,#0043ff,#0041ff,#003fff,#003dff,#003bff,#0039ff,#0037ff,#0035ff,#0032ff,#0030ff,#002dff,#002bff,#0620ff,#101eff,#1b1bff,#2618ff,#3316ff,#4013ff,#4e10ff,#5d0dff,#6d0aff,#7e07ff,#9005ff,#a202ff,#b600ff,#cb00ff,#e000ff,#f700ff,#ff00f0,#ff00db,#ff00c9,#ff00b9,#f0a,#ff009e,#ff0092,#ff0087,#ff007e,#ff0075,#ff006d,#ff0065,#ff005e,#ff0058,#ff0052,#ff004d,#ff0048,#ff0043,#ff003e,#ff003a,#ff0036,#f03,#ff002f,#ff002c,#ff0029,#ff0026,#ff0023,#ff0021,#ff001e,#ff001c,#ff001a,#ff0018,#ff0016,#ff0014,#ff0012,#f01,#ff000f,#ff000e)"></i>
<i style="background:linear-gradient(90deg,#0048ff,#0046ff,#04f,#0042ff,#0040ff,#003eff,#003cff,#003aff,#0038ff,#0036ff,#0034ff,#0031ff,#002fff,#002dff,#002aff,#0028ff,#071dff,#111bff,#1b18ff,#2715ff,#3313ff,#4110ff,#4f0dff,#5e0aff,#6d07ff,#7e05ff,#9002ff,#a200ff,#b500ff,#ca00ff,#df00ff,#f600ff,#ff00f1,#ff00dc,#ff00ca,#ff00ba,#ff00ac,#ff009f,#ff0093,#ff0089,#ff007f,#ff0076,#ff006e,#f06,#ff005f,#ff0059,#ff0053,#ff004e,#ff0049,#f04,#ff003f,#ff003b,#ff0037,#ff0034,#ff0030,#ff002d,#ff002a,#ff0027,#ff0024,#f02,#ff001f,#ff001d,#ff001b,#ff0019,#ff0017,#ff0015,#ff0013,#f01,#ff0010,#ff000e)"></i>
<i style="background:linear-gradient(90deg,#0045ff,#0043ff,#0041ff,#003fff,#003dff,#003bff,#0039ff,#0037ff,#0035ff,#03f,#0030ff,#002eff,#002cff,#0029ff,#0027ff,#001dff,#081aff,#1118ff,#1c15ff,#2712ff,#3410ff,#410dff,#4f0aff,#5e08ff,#6d05ff,#7e02ff,#8f00ff,#a200ff,#b500ff,#c900ff,#de00ff,#f500ff,#ff00f2,#ff00de,#f0c,#ff00bc,#ff00ad,#ff00a0,#ff0094,#ff008a,#ff0080,#f07,#ff006f,#ff0067,#ff0061,#ff005a,#ff0054,#ff004f,#ff004a,#ff0045,#ff0040,#ff003c,#ff0038,#ff0034,#ff0031,#ff002e,#ff002b,#ff0028,#ff0025,#f02,#ff0020,#ff001e,#ff001b,#ff0019,#ff0017,#ff0015,#ff0014,#ff0012,#ff0010,#ff000f)"></i>
<i style="background:linear-gradient(90deg,#0042ff,#0040ff,#003eff,#003cff,#003aff,#0038ff,#0036ff,#0034ff,#0032ff,#002fff,#002dff,#002bff,#0029ff,#0026ff,#0024ff,#011aff,#0817ff,#1215ff,#1d12ff,#2810ff,#340dff,#410aff,#4f08ff,#5e05ff,#6e02ff,#7e00ff,#8f00ff,#a100ff,#b400ff,#c800ff,#d0f,#f300ff,#ff00f4,#ff00df,#ff00cd,#ff00bd,#ff00af,#ff00a1,#ff0096,#ff008b,#ff0081,#ff0078,#ff0070,#ff0069,#ff0062,#ff005b,#f05,#ff0050,#ff004b,#ff0046,#ff0041,#ff003d,#ff0039,#ff0035,#ff0032,#ff002f,#ff002b,#ff0028,#ff0026,#ff0023,#ff0021,#ff001e,#ff001c,#ff001a,#ff0018,#ff0016,#ff0014,#ff0012,#f01,#ff000f)"></i>
<i style="background:linear-gradient(90deg,#003fff,#003dff,#003bff,#0039ff,#0037ff,#0035ff,#03f,#0031ff,#002fff,#002cff,#002aff,#0028ff,#0026ff,#0023ff,#0021ff,#0117ff,#0914ff,#1312ff,#1d0fff,#290dff,#350aff,#4208ff,#5005ff,#5e03ff,#6e00ff,#7e00ff,#8f00ff,#a100ff,#b400ff,#c800ff,#dc00ff,#f200ff,#ff00f5,#ff00e1,#ff00ce,#ff00be,#ff00b0,#ff00a3,#ff0097,#ff008c,#ff0082,#ff007a,#ff0071,#ff006a,#ff0063,#ff005c,#ff0056,#ff0051,#ff004c,#ff0047,#ff0042,#ff003e,#ff003a,#ff0036,#f03,#ff002f,#ff002c,#ff0029,#ff0026,#ff0024,#ff0021,#ff001f,#ff001d,#ff001b,#ff0019,#ff0017,#ff0015,#ff0013,#f01,#ff0010)"></i>
<i style="background:linear-gradient(90deg,#003cff,#003aff,#0038ff,#0036ff,#0034ff,#0032ff,#0030ff,#002eff,#002cff,#0029ff,#0027ff,#0025ff,#0023ff,#0020ff,#001eff,#0214ff,#0a12ff,#130fff,#1e0dff,#290aff,#3508ff,#4205ff,#5003ff,#5e01ff,#6e00ff,#7e00ff,#8f00ff,#a000ff,#b300ff,#c700ff,#db00ff,#f100ff,#ff00f6,#ff00e2,#ff00d0,#ff00c0,#ff00b1,#ff00a4,#ff0098,#ff008d,#ff0084,#ff007b,#ff0072,#ff006b,#ff0064,#ff005d,#ff0057,#ff0052,#ff004d,#ff0048,#ff0043,#ff003f,#ff003b,#ff0037,#ff0034,#ff0030,#ff002d,#ff002a,#ff0027,#ff0025,#f02,#ff0020,#ff001d,#ff001b,#ff0019,#ff0017,#ff0015,#ff0014,#ff0012,#ff0010)"></i>
<i style="background:linear-gradient(90deg,#0039ff,#0037ff,#0035ff,#03f,#0031ff,#002fff,#002dff,#002bff,#0029ff,#0027ff,#0024ff,#02f,#0020ff,#001dff,#001bff,#0212ff,#0a0fff,#140dff,#1e0aff,#2a08ff,#3605ff,#4303ff,#5001ff,#5f00ff,#6e00ff,#7e00ff,#8e00ff,#a000ff,#b300ff,#c600ff,#da00ff,#f000ff,#ff00f8,#ff00e3,#ff00d1,#ff00c1,#ff00b2,#ff00a5,#ff009a,#ff008f,#ff0085,#ff007c,#ff0074,#ff006c,#ff0065,#ff005e,#ff0058,#ff0053,#ff004d,#ff0049,#f04,#ff0040,#ff003c,#ff0038,#ff0034,#ff0031,#ff002e,#ff002b,#ff0028,#ff0025,#ff0023,#ff0020,#ff001e,#ff001c,#ff001a,#ff0018,#ff0016,#ff0014,#ff0013,#f01)"></i>
<i style="background:linear-gradient(90deg,#0036ff,#0034ff,#0032ff,#0030ff,#002eff,#002cff,#002aff,#0028ff,#0026ff,#0024ff,#0021ff,#001fff,#001dff,#001aff,#0018ff,#030fff,#0b0dff,#140aff,#1f08ff,#2a05ff,#3603ff,#4301ff,#5000ff,#5f00ff,#6e00ff,#7e00ff,#8e00ff,#a000ff,#b200ff,#c500ff,#da00ff,#ef00ff,#ff00f9,#ff00e5,#ff00d3,#ff00c2,#ff00b4,#ff00a7,#ff009b,#ff0090,#ff0086,#ff007d,#ff0075,#ff006d,#f06,#ff005f,#ff0059,#ff0054,#ff004e,#ff004a,#ff0045,#ff0041,#ff003d,#ff0039,#ff0035,#ff0032,#ff002f,#ff002c,#ff0029,#ff0026,#ff0024,#ff0021,#ff001f,#ff001d,#ff001b,#ff0019,#ff0017,#ff0015,#ff0013,#ff0012)"></i>
<i style="background:linear-gradient(90deg,#0034ff,#0032ff,#0030ff,#002eff,#002cff,#002aff,#0028ff,#0025ff,#0023ff,#0021ff,#001fff,#001cff,#001aff,#0018ff,#0015ff,#030dff,#0c0aff,#1508ff,#1f05ff,#2b03ff,#3701ff,#4300ff,#5100ff,#5f00ff,#6e00ff,#7e00ff,#8e00ff,#9f00ff,#b200ff,#c500ff,#d900ff,#e0f,#ff00fa,#ff00e6,#ff00d4,#ff00c4,#ff00b5,#ff00a8,#ff009c,#ff0091,#ff0087,#ff007e,#ff0076,#ff006e,#ff0067,#ff0061,#ff005a,#f05,#ff004f,#ff004b,#ff0046,#ff0042,#ff003d,#ff003a,#ff0036,#f03,#ff002f,#ff002c,#ff002a,#ff0027,#ff0024,#f02,#ff001f,#ff001d,#ff001b,#ff0019,#ff0017,#ff0016,#ff0014,#ff0012)"></i>
<i style="background:linear-gradient(90deg,#0031ff,#002fff,#002dff,#002bff,#0029ff,#0027ff,#0025ff,#0023ff,#0021ff,#001eff,#001cff,#001aff,#0017ff,#0015ff,#0013ff,#040aff,#0c08ff,#1606ff,#2003ff,#2b01ff,#3700ff,#40f,#5100ff,#5f00ff,#6e00ff,#7e00ff,#8e00ff,#9f00ff,#b100ff,#c400ff,#d800ff,#ec00ff,#ff00fc,#ff00e7,#ff00d5,#ff00c5,#ff00b6,#ff00a9,#ff009d,#ff0092,#f08,#ff007f,#f07,#ff006f,#ff0068,#ff0062,#ff005b,#ff0056,#ff0050,#ff004b,#ff0047,#ff0042,#ff003e,#ff003a,#ff0037,#f03,#ff0030,#ff002d,#ff002a,#ff0028,#ff0025,#f02,#ff0020,#ff001e,#ff001c,#ff001a,#ff0018,#ff0016,#ff0014,#ff0013)"></i>
<i style="background:linear-gradient(90deg,#002eff,#002cff,#002aff,#0028ff,#0026ff,#0024ff,#02f,#0020ff,#001eff,#001cff,#0019ff,#0017ff,#0015ff,#0012ff,#0010ff,#0408ff,#0d06ff,#1603ff,#2101ff,#2c00ff,#3800ff,#40f,#5100ff,#5f00ff,#6e00ff,#7d00ff,#8e00ff,#9f00ff,#b100ff,#c300ff,#d700ff,#eb00ff,#ff00fd,#ff00e9,#ff00d6,#ff00c6,#ff00b8,#f0a,#ff009e,#ff0094,#ff008a,#ff0081,#ff0078,#ff0070,#ff0069,#ff0063,#ff005c,#ff0057,#ff0051,#ff004c,#ff0048,#ff0043,#ff003f,#ff003b,#ff0038,#ff0034,#ff0031,#ff002e,#ff002b,#ff0028,#ff0026,#ff0023,#ff0021,#ff001f,#ff001c,#ff001a,#ff0019,#ff0017,#ff0015,#ff0013)"></i>
<i style="background:linear-gradient(90deg,#002cff,#002aff,#0028ff,#0026ff,#0024ff,#02f,#0020ff,#001dff,#001bff,#0019ff,#0017ff,#0015ff,#0012ff,#0010ff,#000eff,#0506ff,#0d04ff,#1701ff,#2100ff,#2c00ff,#3800ff,#40f,#5200ff,#5f00ff,#6e00ff,#7d00ff,#8d00ff,#9e00ff,#b000ff,#c300ff,#d600ff,#ea00ff,#ff00fe,#ff00ea,#ff00d8,#ff00c7,#ff00b9,#ff00ac,#ff00a0,#ff0095,#ff008b,#ff0082,#ff0079,#ff0071,#ff006a,#ff0064,#ff005d,#ff0058,#ff0052,#ff004d,#ff0049,#f04,#ff0040,#ff003c,#ff0039,#ff0035,#ff0032,#ff002f,#ff002c,#ff0029,#ff0026,#ff0024,#f02,#ff001f,#ff001d,#ff001b,#ff0019,#ff0017,#ff0016,#ff0014)"></i>
<i style="background:linear-gradient(90deg,#0029ff,#0027ff,#0025ff,#0023ff,#0021ff,#001fff,#001dff,#001bff,#0019ff,#0017ff,#0014ff,#0012ff,#0010ff,#000eff,#000bff,#0604ff,#0e02ff,#1700ff,#20f,#2d00ff,#3800ff,#4500ff,#5200ff,#6000ff,#6e00ff,#7d00ff,#8d00ff,#9e00ff,#b000ff,#c200ff,#d500ff,#e900ff,#fe00ff,#ff00eb,#ff00d9,#ff00c9,#ff00ba,#ff00ad,#ff00a1,#ff0096,#ff008c,#ff0083,#ff007a,#ff0073,#ff006b,#ff0065,#ff005e,#ff0059,#ff0053,#ff004e,#ff004a,#ff0045,#ff0041,#ff003d,#ff0039,#ff0036,#f03,#ff002f,#ff002d,#ff002a,#ff0027,#ff0025,#f02,#ff0020,#ff001e,#ff001c,#ff001a,#ff0018,#ff0016,#ff0014)"></i>
<i style="background:linear-gradient(90deg,#0027ff,#0025ff,#0023ff,#0021ff,#001fff,#001dff,#001bff,#0018ff,#0016ff,#0014ff,#0012ff,#0010ff,#000dff,#000bff,#0009ff,#0602ff,#0f00ff,#1800ff,#20f,#2d00ff,#3900ff,#4500ff,#5200ff,#6000ff,#6e00ff,#7d00ff,#8d00ff,#9e00ff,#af00ff,#c100ff,#d400ff,#e800ff,#fd00ff,#ff00ec,#ff00da,#ff00ca,#f0b,#ff00ae,#ff00a2,#ff0097,#ff008d,#ff0084,#ff007b,#ff0074,#ff006c,#f06,#ff005f,#ff005a,#ff0054,#ff004f,#ff004a,#ff0046,#ff0042,#ff003e,#ff003a,#ff0037,#f03,#ff0030,#ff002d,#ff002a,#ff0028,#ff0025,#ff0023,#ff0021,#ff001e,#ff001c,#ff001a,#ff0019,#ff0017,#ff0015)"></i>
<i style="background:linear-gradient(90deg,#0024ff,#02f,#0020ff,#001eff,#001cff,#001aff,#0018ff,#0016ff,#0014ff,#0012ff,#0010ff,#000dff,#000bff,#0009ff,#0002ff,#0700ff,#0f00ff,#1900ff,#2300ff,#2e00ff,#3900ff,#4500ff,#5200ff,#6000ff,#6e00ff,#7d00ff,#8d00ff,#9d00ff,#af00ff,#c100ff,#d300ff,#e700ff,#fc00ff,#f0e,#ff00dc,#ff00cb,#ff00bd,#ff00af,#ff00a3,#ff0098,#ff008e,#ff0085,#ff007d,#ff0075,#ff006d,#ff0067,#ff0060,#ff005b,#f05,#ff0050,#ff004b,#ff0047,#ff0043,#ff003f,#ff003b,#ff0037,#ff0034,#ff0031,#ff002e,#ff002b,#ff0029,#ff0026,#ff0024,#ff0021,#ff001f,#ff001d,#ff001b,#ff0019,#ff0017,#ff0016)"></i>
<i style="background:linear-gradient(90deg,#02f,#0020ff,#001eff,#001cff,#001aff,#0018ff,#0016ff,#0014ff,#0012ff,#000fff,#000dff,#000bff,#0009ff,#0007ff,#00f,#0700ff,#1000ff,#1900ff,#2300ff,#2e00ff,#3a00ff,#4600ff,#5300ff,#6000ff,#6e00ff,#7d00ff,#8d00ff,#9d00ff,#ae00ff,#c000ff,#d300ff,#e600ff,#fb00ff,#ff00ef,#f0d,#ff00cd,#ff00be,#ff00b1,#ff00a4,#f09,#ff008f,#ff0086,#ff007e,#ff0076,#ff006f,#ff0068,#ff0061,#ff005c,#ff0056,#ff0051,#ff004c,#ff0048,#f04,#ff0040,#ff003c,#ff0038,#ff0035,#ff0032,#ff002f,#ff002c,#ff0029,#ff0027,#ff0024,#f02,#ff0020,#ff001e,#ff001c,#ff001a,#ff0018,#ff0016)"></i>
<i style="background:linear-gradient(90deg,#0020ff,#001eff,#001cff,#001aff,#0018ff,#0016ff,#0014ff,#01f,#000fff,#000dff,#000bff,#0009ff,#0007ff,#0005ff,#0100ff,#0800ff,#1000ff,#1a00ff,#2400ff,#2f00ff,#3a00ff,#4600ff,#5300ff,#6000ff,#6e00ff,#7d00ff,#8d00ff,#9d00ff,#ae00ff,#bf00ff,#d200ff,#e500ff,#f900ff,#ff00f0,#ff00de,#ff00ce,#ff00bf,#ff00b2,#ff00a6,#ff009b,#ff0091,#ff0087,#ff007f,#f07,#ff0070,#ff0069,#ff0062,#ff005d,#ff0057,#ff0052,#ff004d,#ff0049,#f04,#ff0040,#ff003d,#ff0039,#ff0036,#f03,#ff0030,#ff002d,#ff002a,#ff0027,#ff0025,#ff0023,#ff0020,#ff001e,#ff001c,#ff001a,#ff0019,#ff0017)"></i>
<i style="background:linear-gradient(90deg,#001dff,#001bff,#0019ff,#0017ff,#0015ff,#0013ff,#01f,#000fff,#000dff,#000bff,#0009ff,#0007ff,#0005ff,#0003ff,#0100ff,#0800ff,#10f,#1a00ff,#2400ff,#2f00ff,#3a00ff,#4600ff,#5300ff,#6000ff,#6e00ff,#7d00ff,#8c00ff,#9c00ff,#ad00ff,#bf00ff,#d100ff,#e400ff,#f800ff,#ff00f1,#ff00df,#ff00cf,#ff00c0,#ff00b3,#ff00a7,#ff009c,#ff0092,#f08,#ff0080,#ff0078,#ff0071,#ff006a,#ff0063,#ff005e,#ff0058,#ff0053,#ff004e,#ff004a,#ff0045,#ff0041,#ff003d,#ff003a,#ff0037,#f03,#ff0030,#ff002d,#ff002b,#ff0028,#ff0026,#ff0023,#ff0021,#ff001f,#ff001d,#ff001b,#ff0019,#ff0017)"></i>
<i style="background:linear-gradient(90deg,#001bff,#0019ff,#0017ff,#0015ff,#0013ff,#01f,#000fff,#000dff,#000bff,#0009ff,#0007ff,#0005ff,#0003ff,#0001ff,#0200ff,#0900ff,#1200ff,#1b00ff,#2500ff,#3000ff,#3b00ff,#4700ff,#5300ff,#6100ff,#6e00ff,#7d00ff,#8c00ff,#9c00ff,#ad00ff,#be00ff,#d000ff,#e300ff,#f700ff,#ff00f3,#ff00e1,#ff00d0,#ff00c1,#ff00b4,#ff00a8,#ff009d,#ff0093,#ff008a,#ff0081,#ff0079,#ff0072,#ff006b,#ff0064,#ff005f,#ff0059,#ff0054,#ff004f,#ff004a,#ff0046,#ff0042,#ff003e,#ff003b,#ff0037,#ff0034,#ff0031,#ff002e,#ff002b,#ff0029,#ff0026,#ff0024,#f02,#ff0020,#ff001e,#ff001c,#ff001a,#ff0018)"></i>
<i style="background:linear-gradient(90deg,#0019ff,#0017ff,#0015ff,#0013ff,#01f,#000fff,#000dff,#000bff,#0009ff,#0007ff,#0005ff,#0003ff,#0001ff,#00f,#0200ff,#0a00ff,#1200ff,#1b00ff,#2500ff,#3000ff,#3b00ff,#4700ff,#5400ff,#6100ff,#6f00ff,#7d00ff,#8c00ff,#9c00ff,#ac00ff,#be00ff,#d000ff,#e200ff,#f600ff,#ff00f4,#ff00e2,#ff00d1,#ff00c3,#ff00b5,#ff00a9,#ff009e,#ff0094,#ff008b,#ff0082,#ff007a,#ff0073,#ff006c,#ff0065,#ff0060,#ff005a,#f05,#ff0050,#ff004b,#ff0047,#ff0043,#ff003f,#ff003b,#ff0038,#ff0035,#ff0032,#ff002f,#ff002c,#ff0029,#ff0027,#ff0025,#f02,#ff0020,#ff001e,#ff001c,#ff001a,#ff0019)"></i>
<i style="background:linear-gradient(90deg,#0017ff,#0015ff,#0013ff,#01f,#000fff,#000dff,#000bff,#0009ff,#0007ff,#0005ff,#0003ff,#0001ff,#00f,#00f,#0300ff,#0a00ff,#1300ff,#1c00ff,#2600ff,#3000ff,#3c00ff,#4700ff,#5400ff,#6100ff,#6f00ff,#7d00ff,#8c00ff,#9c00ff,#ac00ff,#bd00ff,#cf00ff,#e100ff,#f500ff,#ff00f5,#ff00e3,#ff00d3,#ff00c4,#ff00b7,#f0a,#ff009f,#ff0095,#ff008c,#ff0083,#ff007b,#ff0074,#ff006d,#f06,#ff0060,#ff005b,#ff0056,#ff0051,#ff004c,#ff0048,#f04,#ff0040,#ff003c,#ff0039,#ff0036,#f03,#ff0030,#ff002d,#ff002a,#ff0028,#ff0025,#ff0023,#ff0021,#ff001f,#ff001d,#ff001b,#ff0019)"></i>
<i style="background:linear-gradient(90deg,#0015ff,#0013ff,#01f,#000fff,#000dff,#000bff,#0009ff,#0007ff,#0005ff,#0003ff,#0002ff,#00f,#00f,#00f,#0300ff,#0b00ff,#1300ff,#1c00ff,#2600ff,#3100ff,#3c00ff,#4800ff,#5400ff,#6100ff,#6f00ff,#7d00ff,#8c00ff,#9b00ff,#ab00ff,#bc00ff,#ce00ff,#e100ff,#f400ff,#ff00f6,#ff00e4,#ff00d4,#ff00c5,#ff00b8,#ff00ab,#ff00a0,#ff0096,#ff008d,#ff0084,#ff007c,#ff0075,#ff006e,#ff0067,#ff0061,#ff005c,#ff0057,#ff0052,#ff004d,#ff0049,#ff0045,#ff0041,#ff003d,#ff003a,#ff0036,#f03,#ff0030,#ff002e,#ff002b,#ff0028,#ff0026,#ff0024,#ff0021,#ff001f,#ff001d,#ff001b,#ff001a)"></i>
<i style="background:linear-gradient(90deg,#0012ff,#01f,#000fff,#000dff,#000bff,#0009ff,#0007ff,#0005ff,#0003ff,#0002ff,#00f,#00f,#00f,#00f,#0400ff,#0b00ff,#1400ff,#1d00ff,#2700ff,#3100ff,#3c00ff,#4800ff,#5400ff,#6100ff,#6f00ff,#7d00ff,#8c00ff,#9b00ff,#ab00ff,#bc00ff,#cd00ff,#e000ff,#f300ff,#ff00f8,#ff00e5,#ff00d5,#ff00c6,#ff00b9,#ff00ad,#ff00a1,#ff0097,#ff008e,#ff0085,#ff007d,#ff0076,#ff006f,#ff0068,#ff0062,#ff005d,#ff0057,#ff0053,#ff004e,#ff004a,#ff0045,#ff0042,#ff003e,#ff003a,#ff0037,#ff0034,#ff0031,#ff002e,#ff002c,#ff0029,#ff0027,#ff0024,#f02,#ff0020,#ff001e,#ff001c,#ff001a)"></i>
<i style="background:linear-gradient(90deg,#0010ff,#000fff,#000dff,#000bff,#0009ff,#0007ff,#0005ff,#0004ff,#0002ff,#00f,#00f,#00f,#00f,#00f,#0400ff,#0c00ff,#1400ff,#1d00ff,#2700ff,#3200ff,#3d00ff,#4800ff,#50f,#6100ff,#6f00ff,#7d00ff,#8b00ff,#9b00ff,#ab00ff,#b0f,#cd00ff,#df00ff,#f200ff,#ff00f9,#ff00e7,#ff00d6,#ff00c7,#ff00ba,#ff00ae,#ff00a3,#ff0098,#ff008f,#ff0086,#ff007e,#f07,#ff0070,#ff0069,#ff0063,#ff005e,#ff0058,#ff0053,#ff004f,#ff004a,#ff0046,#ff0042,#ff003f,#ff003b,#ff0038,#ff0035,#ff0032,#ff002f,#ff002c,#ff002a,#ff0027,#ff0025,#ff0023,#ff0021,#ff001f,#ff001d,#ff001b)"></i>
<i style="background:linear-gradient(90deg,#000fff,#000dff,#000bff,#0009ff,#0007ff,#0005ff,#0004ff,#0002ff,#00f,#00f,#00f,#00f,#00f,#00f,#0500ff,#0c00ff,#1500ff,#1e00ff,#2800ff,#3200ff,#3d00ff,#4900ff,#50f,#6100ff,#6f00ff,#7d00ff,#8b00ff,#9a00ff,#a0f,#b0f,#c0f,#de00ff,#f100ff,#ff00fa,#ff00e8,#ff00d7,#ff00c9,#f0b,#ff00af,#ff00a4,#f09,#ff0090,#ff0087,#ff007f,#ff0078,#ff0071,#ff006a,#ff0064,#ff005f,#ff0059,#ff0054,#ff0050,#ff004b,#ff0047,#ff0043,#ff003f,#ff003c,#ff0039,#ff0035,#ff0032,#ff0030,#ff002d,#ff002a,#ff0028,#ff0026,#ff0023,#ff0021,#ff001f,#ff001d,#ff001b)"></i>
<i style="background:linear-gradient(90deg,#000dff,#000bff,#0009ff,#0007ff,#0005ff,#0004ff,#0002ff,#0001ff,#00f,#00f,#00f,#00f,#00f,#00f,#0500ff,#0d00ff,#1500ff,#1e00ff,#2800ff,#30f,#3d00ff,#4900ff,#50f,#6200ff,#6f00ff,#7d00ff,#8b00ff,#9a00ff,#a0f,#ba00ff,#cb00ff,#d0f,#f000ff,#ff00fb,#ff00e9,#ff00d9,#ff00ca,#ff00bc,#ff00b0,#ff00a5,#ff009b,#ff0091,#f08,#ff0080,#ff0079,#ff0072,#ff006b,#ff0065,#ff0060,#ff005a,#f05,#ff0051,#ff004c,#ff0048,#f04,#ff0040,#ff003d,#ff0039,#ff0036,#f03,#ff0030,#ff002e,#ff002b,#ff0029,#ff0026,#ff0024,#f02,#ff0020,#ff001e,#ff001c)"></i>
<i style="background:linear-gradient(90deg,#000bff,#0009ff,#0007ff,#0006ff,#0004ff,#0002ff,#0001ff,#00f,#00f,#00f,#00f,#00f,#00f,#00f,#0600ff,#0d00ff,#1600ff,#1f00ff,#2900ff,#30f,#3e00ff,#4900ff,#50f,#6200ff,#6f00ff,#7d00ff,#8b00ff,#9a00ff,#a900ff,#ba00ff,#cb00ff,#dc00ff,#ef00ff,#ff00fc,#ff00ea,#ff00da,#ff00cb,#ff00bd,#ff00b1,#ff00a6,#ff009c,#ff0092,#ff0089,#ff0081,#ff007a,#ff0073,#ff006c,#f06,#ff0060,#ff005b,#ff0056,#ff0051,#ff004d,#ff0049,#ff0045,#ff0041,#ff003d,#ff003a,#ff0037,#ff0034,#ff0031,#ff002e,#ff002c,#ff0029,#ff0027,#ff0025,#f02,#ff0020,#ff001e,#ff001d)"></i>
<i style="background:linear-gradient(90deg,#0009ff,#0007ff,#0006ff,#0004ff,#0002ff,#0001ff,#00f,#00f,#00f,#00f,#00f,#00f,#00f,#00f,#0600ff,#0e00ff,#1600ff,#1f00ff,#2900ff,#30f,#3e00ff,#4a00ff,#50f,#6200ff,#6f00ff,#7d00ff,#8b00ff,#9a00ff,#a900ff,#b900ff,#ca00ff,#db00ff,#e0f,#ff00fd,#ff00eb,#ff00db,#f0c,#ff00bf,#ff00b2,#ff00a7,#ff009d,#ff0093,#ff008a,#ff0082,#ff007b,#ff0074,#ff006d,#ff0067,#ff0061,#ff005c,#ff0057,#ff0052,#ff004e,#ff004a,#ff0046,#ff0042,#ff003e,#ff003b,#ff0038,#ff0035,#ff0032,#ff002f,#ff002c,#ff002a,#ff0028,#ff0025,#ff0023,#ff0021,#ff001f,#ff001d)"></i>
<i style="background:linear-gradient(90deg,#0008ff,#0006ff,#0004ff,#0003ff,#0001ff,#00f,#00f,#00f,#00f,#00f,#00f,#00f,#00f,#0100ff,#0700ff,#0e00ff,#1700ff,#2000ff,#2a00ff,#3400ff,#3e00ff,#4a00ff,#5600ff,#6200ff,#6f00ff,#7d00ff,#8b00ff,#90f,#a900ff,#b900ff,#c900ff,#db00ff,#ed00ff,#ff00fe,#ff00ec,#ff00dc,#ff00cd,#ff00bf,#ff00b3,#ff00a8,#ff009e,#ff0094,#ff008b,#ff0083,#ff007c,#ff0075,#ff006e,#ff0068,#ff0062,#ff005d,#ff0058,#ff0053,#ff004e,#ff004a,#ff0046,#ff0042,#ff003f,#ff003b,#ff0038,#ff0035,#ff0032,#ff0030,#ff002d,#ff002a,#ff0028,#ff0026,#ff0024,#f02,#ff0020,#ff001e)"></i>
</div>
<svg width="1200" height="555" viewBox="0 0 1200 555">
<path d="M822.7,376.6 821.2,376.6 821.1,376.5 820.9,376.5 820.7,376.4 820.6,376.3 820.4,376.2 820.2,376.1 820.0,376.0 819.8,375.8 819.5,375.7 819.3,375.5 819.0,375.3 818.7,375.1 818.4,374.9 818.0,374.7 817.7,374.4 817.3,374.2 816.9,373.9 816.4,373.6 816.0,373.3 815.5,373.0 814.9,372.6 814.3,372.2 813.6,371.8 813.0,371.3 812.2,370.9 811.5,370.4 810.7,369.9 809.9,369.3 809.0,368.6 808.0,368.0 807.0,367.2 806.0,366.4 804.9,365.5 803.8,364.5 802.6,363.4 801.2,362.1 799.8,360.6 798.3,358.9 796.7,356.9 794.9,354.7 793.1,352.2 791.1,349.4 789.1,346.3 786.9,342.6 784.5,338.6 782.1,334.1 779.5,329.2 776.7,323.6 773.7,317.4 770.6,310.7 767.4,303.4 764.1,295.3 760.9,286.5 757.7,277.0 754.4,266.9 751.2,256.2 748.0,244.7 744.9,232.5 741.8,219.9 739.0,207.3 736.5,194.4 734.2,181.1 732.2,167.9 730.6,155.0 729.3,142.5 728.5,130.1 728.1,118.1 728.2,106.7 728.8,95.8 729.9,85.5 731.6,75.8 733.7,67.1 736.5,59.3 739.8,52.3 743.5,46.3 747.6,41.4 752.1,37.7 756.9,35.1 762.0,33.4 767.3,32.3 772.6,32.1 778.2,32.8 783.8,34.1 789.4,35.5 795.0,37.2 800.7,39.3 806.4,41.6 811.9,43.9 817.3,46.3 822.6,48.8 827.9,51.4 833.1,54.0 838.3,56.7 843.4,59.5 848.4,62.4 853.5,65.4 858.5,68.4 863.6,71.5 868.6,74.6 873.6,77.8 878.6,81.1 883.6,84.4 888.5,87.7 893.5,91.1 898.4,94.5 903.4,98.0 908.3,101.5 913.3,105.0 918.3,108.5 923.2,112.1 928.2,115.7 933.2,119.3 938.1,122.9 943.1,126.5 948.0,130.2 953.0,133.8 957.9,137.4 962.8,141.0 967.7,144.7 972.6,148.3 977.5,151.9 982.3,155.5 987.1,159.1 991.9,162.6 996.6,166.1 1001.3,169.6 1006.0,173.1 1010.6,176.6 1015.2,180.0 1019.7,183.3 1024.1,186.7 1028.5,189.9 1032.9,193.2 1037.1,196.3 1041.3,199.4 1045.4,202.5 1049.4,205.5 1053.3,208.4 1057.1,211.2 1060.8,214.0 1064.3,216.6 1067.7,219.2 1071.0,221.6 1074.2,224.0 1077.3,226.3 1080.3,228.5 1083.2,230.7 1085.9,232.7 1088.6,234.7 1091.1,236.5 1093.5,238.3 1095.7,240.0 1097.9,241.6 1099.9,243.1 1101.8,244.5 1103.7,245.9 1105.4,247.2 1107.0,248.4 1108.5,249.5 1110.0,250.6 1111.4,251.7 1112.7,252.6 1113.9,253.5 1115.0,254.4 1116.1,255.2 1117.2,256.0 1118.2,256.7 1119.1,257.4 1120.0,258.1 1120.9,258.7 1121.7,259.3 1122.5,259.9 1123.2,260.5 1123.9,261.0 1124.6,261.5 1125.3,262.0 1125.9,262.5 1126.4,262.9 1127.0,263.3 1127.5,263.6 1127.9,264.0 1128.4,264.3 1128.8,264.6 1129.1,264.9 1129.5,265.1 1129.8,265.4 1130.1,265.6 1130.4,265.8 1130.7,266.0 1130.9,266.2 1131.2,266.4 1131.4,266.5 1131.5,266.7 1131.7,266.8 1131.8,266.9 1132.0,267.0 1132.1,267.1 1132.2,267.2 1132.4,267.3 1132.5,267.4 1132.6,267.5 1132.7,267.5 1132.8,267.6 1132.9,267.7 1133.0,267.7 1133.1,267.8 1133.2,267.9 1133.3,268.0 1133.3,268.0 1133.4,268.1 1133.5,268.1 1133.6,268.2 1133.7,268.3 1133.7,268.3 1133.8,268.3 1133.8,268.4 1133.8,268.4 1133.9,268.4 1133.9,268.4 1133.9,268.5 1133.9,268.5 1134.0,268.5 1134.0,268.5 1134.0,268.5Z M1100.6,247.6 873.5,93.4 810.4,351.6Z" fill="rgba(0,0,0,0.385)" fill-rule="evenodd"/>
</svg>
<div id="inset">
<i style="background:linear-gradient(90deg,#84ffc7,#8affc6,#91ffc6,#98ffc5,#9fffc5,#a6ffc4,#aeffc4,#b5ffc3,#bdffc3,#c5ffc3,#cdffc2,#d6ffc2,#deffc1,#e7ffc1,#f0ffc0,#f9ffbf,#fffbbc,#fff2b5,#ffeaae,#ffe2a7,#ffdaa1)"></i>
<i style="background:linear-gradient(90deg,#85ffc9,#8cffc9,#93ffc8,#9affc8,#a1ffc7,#a8ffc7,#b0ffc6,#b7ffc6,#bfffc6,#c7ffc5,#d0ffc5,#d8ffc4,#e1ffc4,#eaffc3,#f3ffc3,#fcffc2,#fff9bd,#fff0b6,#ffe7af,#ffdfa8,#ffd8a2)"></i>
<i style="background:linear-gradient(90deg,#87ffcc,#8dffcb,#94ffcb,#9bffca,#a3ffca,#aaffca,#b2ffc9,#b9ffc9,#c1ffc8,#c9ffc8,#d2ffc7,#daffc7,#e3ffc6,#ecffc6,#f5ffc5,#ffffc5,#fff6bd,#ffedb6,#ffe5af,#ffdda9,#ffd5a2)"></i>
<i style="background:linear-gradient(90deg,#88ffce,#8fffce,#96ffcd,#9dffcd,#a4ffcd,#acffcc,#b3ffcc,#bbffcb,#c3ffcb,#ccffca,#d4ffca,#ddffc9,#e6ffc9,#efffc8,#f8ffc8,#fffdc6,#fff4be,#ffebb7,#ffe2b0,#ffdba9,#ffd3a3)"></i>
<i style="background:linear-gradient(90deg,#8affd1,#90ffd0,#97ffd0,#9fffd0,#a6ffcf,#aeffcf,#b5ffce,#bdffce,#c5ffcd,#ceffcd,#d6ffcd,#dfffcc,#e8ffcc,#f1ffcb,#faffcb,#fffac6,#fff1bf,#ffe8b7,#ffe0b1,#ffd8aa,#ffd1a4)"></i>
<i style="background:linear-gradient(90deg,#8bffd3,#92ffd3,#99ffd3,#a0ffd2,#a8ffd2,#afffd1,#b7ffd1,#bfffd1,#c8ffd0,#d0ffd0,#d9ffcf,#e1ffcf,#eaffce,#f4ffce,#fdffce,#fff7c7,#ffeebf,#ffe6b8,#ffdeb1,#ffd6ab,#ffcfa4)"></i>
<i style="background:linear-gradient(90deg,#8dffd6,#94ffd6,#9bffd5,#a2ffd5,#aaffd5,#b1ffd4,#b9ffd4,#c1ffd3,#caffd3,#d2ffd3,#dbffd2,#e4ffd2,#edffd1,#f6ffd1,#fffed0,#fff5c8,#ffecc0,#ffe3b9,#ffdbb2,#ffd4ab,#ffcca5)"></i>
<i style="background:linear-gradient(90deg,#8effd9,#95ffd8,#9cffd8,#a4ffd8,#abffd7,#b3ffd7,#bbffd7,#c3ffd6,#ccffd6,#d4ffd5,#ddffd5,#e6ffd5,#efffd4,#f9ffd4,#fffbd0,#fff2c8,#ffe9c1,#ffe1b9,#ffd9b2,#ffd2ac,#ffcaa5)"></i>
<i style="background:linear-gradient(90deg,#90ffdc,#97ffdb,#9effdb,#a6ffda,#adffda,#b5ffda,#bdffd9,#c6ffd9,#ceffd9,#d7ffd8,#e0ffd8,#e9ffd7,#f2ffd7,#fcffd7,#fff9d1,#fff0c9,#ffe7c1,#ffdfba,#ffd7b3,#ffcfac,#ffc8a6)"></i>
<i style="background:linear-gradient(90deg,#91ffde,#99ffde,#a0ffde,#a7ffdd,#afffdd,#b7ffdd,#bfffdc,#c8ffdc,#d0ffdc,#d9ffdb,#e2ffdb,#ebffda,#f5ffda,#feffda,#fff6d2,#ffedca,#ffe4c2,#ffdcbb,#ffd5b4,#ffcdad,#ffc6a7)"></i>
<i style="background:linear-gradient(90deg,#93ffe1,#9affe1,#a2ffe1,#a9ffe0,#b1ffe0,#b9ffdf,#c1ffdf,#caffdf,#d3ffde,#dbffde,#e4ffde,#efd,#f7ffdd,#fffddb,#fff4d2,#ffebca,#ffe2c3,#ffdabb,#ffd2b4,#ffcbae,#ffc4a7)"></i>
<i style="background:linear-gradient(90deg,#95ffe4,#9cffe4,#a3ffe3,#abffe3,#b3ffe3,#bbffe2,#c4ffe2,#ccffe2,#d5ffe1,#deffe1,#e7ffe1,#f0ffe0,#faffe0,#fffadb,#fff1d3,#ffe8cb,#ffe0c3,#ffd8bc,#ffd0b5,#ffc9ae,#ffc2a8)"></i>
<i style="background:linear-gradient(90deg,#96ffe7,#9effe7,#a5ffe6,#adffe6,#b5ffe6,#bdffe5,#c6ffe5,#ceffe5,#d7ffe4,#e0ffe4,#e9ffe4,#f3ffe3,#fdffe3,#fff8dc,#ffeed4,#ffe6cb,#ffddc4,#ffd5bc,#ffceb5,#ffc7af,#ffc0a8)"></i>
<i style="background:linear-gradient(90deg,#98ffea,#9fffea,#a7ffe9,#afffe9,#b7ffe9,#bfffe8,#c8ffe8,#d1ffe8,#daffe8,#e3ffe7,#ecffe7,#f6ffe7,#ffffe6,#fff5dd,#ffecd4,#ffe3cc,#ffdbc4,#ffd3bd,#ffcbb6,#ffc4af,#ffbea9)"></i>
<i style="background:linear-gradient(90deg,#9affed,#a1ffed,#a9ffec,#b1ffec,#b9ffec,#c2ffec,#caffeb,#d3ffeb,#dcffeb,#e5ffea,#efffea,#f8ffea,#fffce6,#fff2dd,#ffe9d5,#ffe1cd,#ffd8c5,#ffd1be,#ffc9b7,#ffc2b0,#fba)"></i>
<i style="background:linear-gradient(90deg,#9bfff0,#a3fff0,#abffef,#b3ffef,#bbffef,#c4ffef,#cfe,#d5ffee,#deffee,#e8ffee,#f1ffed,#fbffed,#fff9e7,#fff0de,#ffe7d5,#ffdecd,#ffd6c6,#ffcebe,#ffc7b7,#ffc0b1,#ffb9aa)"></i>
<i style="background:linear-gradient(90deg,#9dfff3,#a5fff3,#adfff3,#b5fff2,#bdfff2,#c6fff2,#cffff2,#d8fff1,#e1fff1,#eafff1,#f4fff0,#fefff0,#fff6e8,#ffeddf,#ffe4d6,#ffdcce,#ffd4c6,#ffccbf,#ffc5b8,#ffbeb1,#ffb7ab)"></i>
<i style="background:linear-gradient(90deg,#9ffff6,#a7fff6,#affff6,#b7fff5,#bffff5,#c8fff5,#d1fff5,#dafff5,#e3fff4,#edfff4,#f7fff4,#fffdf2,#fff4e8,#ffeadf,#ffe2d7,#ffd9cf,#ffd1c7,#ffcac0,#ffc3b8,#ffbcb2,#ffb5ab)"></i>
<i style="background:linear-gradient(90deg,#a1fff9,#a9fff9,#b1fff9,#b9fff9,#c2fff9,#cafff8,#d3fff8,#dcfff8,#e6fff8,#f0fff7,#f9fff7,#fffaf3,#fff1e9,#ffe8e0,#ffdfd7,#ffd7cf,#ffcfc7,#ffc8c0,#ffc0b9,#ffbab2,#ffb3ac)"></i>
<i style="background:linear-gradient(90deg,#a3fffd,#abfffc,#b3fffc,#bbfffc,#c4fffc,#cdfffc,#d6fffb,#dffffb,#e9fffb,#f2fffb,#fcfffb,#fff8f3,#ffeeea,#ffe5e1,#ffddd8,#ffd4d0,#ffcdc8,#ffc5c1,#ffbeba,#ffb8b3,#ffb1ad)"></i>
<i style="background:linear-gradient(90deg,#a4feff,#acfeff,#b4feff,#bdffff,#c6ffff,#cfffff,#d8ffff,#e2ffff,#ebfffe,#f5fffe,#fffffe,#fff5f4,#ffecea,#ffe3e1,#ffdad9,#ffd2d0,#ffcac9,#ffc3c1,#ffbcba,#ffb6b4,#ffafad)"></i>
<i style="background:linear-gradient(90deg,#a4fbff,#acfbff,#b4fbff,#bdfbff,#c6fbff,#cffcff,#d8fcff,#e1fcff,#ebfcff,#f5fcff,#fffcff,#fff2f4,#ffe9eb,#ffe0e2,#ffd8d9,#ffd0d1,#ffc8c9,#ffc1c2,#ffbabb,#ffb4b4,#ffadae)"></i>
<i style="background:linear-gradient(90deg,#a3f8ff,#acf8ff,#b4f8ff,#bcf8ff,#c5f8ff,#cef8ff,#d7f8ff,#e1f9ff,#ebf9ff,#f5f9ff,#fff9ff,#ffeff5,#ffe6ec,#ffdee2,#ffd5da,#ffcdd2,#ffc6ca,#ffbfc3,#ffb8bb,#ffb1b5,#ffabae)"></i>
<i style="background:linear-gradient(90deg,#a3f4ff,#abf5ff,#b4f5ff,#bcf5ff,#c5f5ff,#cef5ff,#d7f5ff,#e0f5ff,#eaf5ff,#f4f5ff,#fef6ff,#ffedf6,#ffe4ec,#ffdbe3,#ffd3da,#ffcbd2,#ffc4cb,#ffbdc3,#ffb6bc,#ffafb5,#ffa9af)"></i>
<i style="background:linear-gradient(90deg,#a3f1ff,#abf1ff,#b3f1ff,#bcf2ff,#c4f2ff,#cdf2ff,#d6f2ff,#e0f2ff,#eaf2ff,#f3f2ff,#fef2ff,#ffeaf6,#ffe1ed,#ffd9e4,#ffd0db,#ffc9d3,#ffc1cb,#ffbac4,#ffb4bd,#ffadb6,#ffa7b0)"></i>
<i style="background:linear-gradient(90deg,#a3eeff,#abeeff,#b3eeff,#bef,#c4eeff,#cdeeff,#d6efff,#dfefff,#e9efff,#f3efff,#fdefff,#ffe7f7,#ffdeed,#ffd6e4,#ffcedc,#ffc6d4,#ffbfcc,#ffb8c4,#ffb2bd,#ffabb7,#ffa5b0)"></i>
<i style="background:linear-gradient(90deg,#a3ebff,#abebff,#b3ebff,#bbebff,#c4ebff,#cdebff,#d6ebff,#dfebff,#e8ebff,#f2ebff,#fcebff,#ffe5f8,#ffdcee,#ffd4e5,#ffccdc,#ffc4d4,#ffbdcc,#ffb6c5,#ffb0be,#ffa9b7,#ffa4b1)"></i>
<i style="background:linear-gradient(90deg,#a2e8ff,#aae8ff,#b2e8ff,#bbe8ff,#c3e8ff,#cce8ff,#d5e8ff,#dee8ff,#e8e8ff,#f2e8ff,#fce8ff,#ffe2f8,#ffd9ef,#ffd1e6,#ffc9dd,#ffc2d5,#ffbbcd,#ffb4c6,#ffaebe,#ffa7b8,#ffa2b1)"></i>
<i style="background:linear-gradient(90deg,#a2e5ff,#aae5ff,#b2e5ff,#bae5ff,#c3e5ff,#cce5ff,#d5e5ff,#dee5ff,#e7e5ff,#f1e5ff,#fbe5ff,#ffdff9,#ffd7ef,#ffcfe6,#ffc7de,#ffc0d5,#ffb9ce,#ffb2c6,#ffacbf,#ffa6b8,#ffa0b2)"></i>
<i style="background:linear-gradient(90deg,#a2e2ff,#aae2ff,#b2e2ff,#bae2ff,#c3e2ff,#cbe2ff,#d4e2ff,#dde2ff,#e7e2ff,#f1e2ff,#fae2ff,#ffddf9,#ffd4f0,#ffcce7,#ffc5de,#ffbdd6,#ffb6ce,#ffb0c7,#ffaac0,#ffa4b9,#ff9eb2)"></i>
<i style="background:linear-gradient(90deg,#a2dfff,#aadfff,#b2dfff,#badfff,#c2dfff,#cbdfff,#d4dfff,#dddfff,#e6dfff,#f0dfff,#fadfff,#ffdafa,#ffd2f1,#ffcae7,#ffc2df,#ffbbd7,#ffb4cf,#ffaec7,#ffa8c0,#ffa2b9,#ff9cb3)"></i>
<i style="background:linear-gradient(90deg,#a1dcff,#a9dcff,#b1dcff,#b9dcff,#c2dcff,#cbdcff,#d3dcff,#dddcff,#e6dcff,#efdcff,#f9dbff,#ffd8fb,#ffcff1,#ffc8e8,#ffc0df,#ffb9d7,#ffb2cf,#ffacc8,#ffa6c1,#ffa0ba,#ff9ab4)"></i>
<i style="background:linear-gradient(90deg,#a1d9ff,#a9d9ff,#b1d9ff,#b9d9ff,#c2d9ff,#cad9ff,#d3d9ff,#dcd9ff,#e5d9ff,#efd8ff,#f9d8ff,#ffd5fb,#ffcdf2,#ffc5e9,#ffbee0,#ffb7d8,#ffb0d0,#ffaac9,#ffa4c1,#ff9ebb,#ff98b4)"></i>
<i style="background:linear-gradient(90deg,#a1d6ff,#a9d6ff,#b1d6ff,#b9d6ff,#c1d6ff,#cad6ff,#d3d6ff,#dcd6ff,#e5d6ff,#eed5ff,#f8d5ff,#ffd3fc,#ffcbf2,#ffc3e9,#ffbbe1,#ffb5d8,#ffaed1,#ffa8c9,#ffa2c2,#ff9cbb,#ff96b5)"></i>
<i style="background:linear-gradient(90deg,#a1d3ff,#a9d3ff,#b0d3ff,#b9d3ff,#c1d3ff,#c9d3ff,#d2d3ff,#dbd3ff,#e4d3ff,#eed2ff,#f8d2ff,#ffd0fd,#ffc8f3,#ffc0ea,#ffb9e1,#ffb2d9,#ffacd1,#ffa6ca,#ffa0c3,#ff9abc,#ff95b5)"></i>
<i style="background:linear-gradient(90deg,#a1d1ff,#a8d0ff,#b0d0ff,#b8d0ff,#c1d0ff,#c9d0ff,#d2d0ff,#dbd0ff,#e4d0ff,#edcfff,#f7cfff,#ffcefd,#ffc6f4,#ffbeea,#ffb7e2,#ffb0da,#ffaad2,#ffa4ca,#ff9ec3,#ff98bc,#ff93b6)"></i>
<i style="background:linear-gradient(90deg,#a0ceff,#a8ceff,#b0ceff,#b8cdff,#c0cdff,#c9cdff,#d1cdff,#dacdff,#e3cdff,#edccff,#f6ccff,#ffcbfe,#ffc3f4,#ffbceb,#ffb5e2,#ffaeda,#ffa8d2,#ffa2cb,#ff9cc4,#ff96bd,#ff91b6)"></i>
<i style="background:linear-gradient(90deg,#a0cbff,#a8cbff,#b0cbff,#b8cbff,#c0caff,#c8caff,#d1caff,#dacaff,#e3caff,#eccaff,#f6c9ff,#ffc9fe,#ffc1f5,#ffbaec,#ffb3e3,#ffacdb,#ffa6d3,#ffa0cb,#ff9ac4,#ff94be,#ff8fb7)"></i>
<i style="background:linear-gradient(90deg,#a0c8ff,#a8c8ff,#afc8ff,#b7c8ff,#c0c8ff,#c8c7ff,#d1c7ff,#d9c7ff,#e2c7ff,#ecc7ff,#f5c6ff,#ffc6ff,#ffbff5,#ffb7ec,#ffb0e4,#ffaadb,#ffa4d4,#ff9ecc,#ff98c5,#ff93be,#ff8db8)"></i>
<i style="background:linear-gradient(90deg,#a0c6ff,#a7c5ff,#afc5ff,#b7c5ff,#bfc5ff,#c8c5ff,#d0c4ff,#d9c4ff,#e2c4ff,#ebc4ff,#f5c4ff,#fec3ff,#ffbcf6,#ffb5ed,#ffaee4,#ffa8dc,#ffa2d4,#ff9ccd,#ff96c5,#ff91bf,#ff8cb8)"></i>
<i style="background:linear-gradient(90deg,#a0c3ff,#a7c3ff,#afc3ff,#b7c2ff,#bfc2ff,#c7c2ff,#d0c2ff,#d9c1ff,#e2c1ff,#ebc1ff,#f4c1ff,#fec1ff,#ffbaf7,#ffb3ed,#fface5,#ffa6dd,#ffa0d5,#ff9acd,#ff94c6,#ff8fbf,#ff8ab9)"></i>
<i style="background:linear-gradient(90deg,#9fc0ff,#a7c0ff,#afc0ff,#b6c0ff,#bfbfff,#c7bfff,#cfbfff,#d8bfff,#e1beff,#eabeff,#f4beff,#fdbeff,#ffb8f7,#ffb1ee,#ffaae5,#ffa4dd,#ff9ed5,#ff98ce,#ff92c7,#ff8dc0,#ff88b9)"></i>
</div>
<svg width="1200" height="555" viewBox="0 0 1200 555">
<line x1="726.4" y1="379.5" x2="726.4" y2="383.5" stroke="#a0a0a0" stroke-width="1" />
<text x="726.4" y="394.6" font-size="10.8" text-anchor="middle" fill="#dcdcdc" textLength="5.4" lengthAdjust="spacingAndGlyphs" >0</text>
<line x1="781.8" y1="379.5" x2="781.8" y2="383.5" stroke="#a0a0a0" stroke-width="1" />
<text x="781.8" y="394.6" font-size="10.8" text-anchor="middle" fill="#dcdcdc" textLength="13.5" lengthAdjust="spacingAndGlyphs" >0.1</text>
<line x1="837.2" y1="379.5" x2="837.2" y2="383.5" stroke="#a0a0a0" stroke-width="1" />
<text x="837.2" y="394.6" font-size="10.8" text-anchor="middle" fill="#dcdcdc" textLength="13.5" lengthAdjust="spacingAndGlyphs" >0.2</text>
<line x1="892.6" y1="379.5" x2="892.6" y2="383.5" stroke="#a0a0a0" stroke-width="1" />
<text x="892.6" y="394.6" font-size="10.8" text-anchor="middle" fill="#dcdcdc" textLength="13.5" lengthAdjust="spacingAndGlyphs" >0.3</text>
<line x1="948.0" y1="379.5" x2="948.0" y2="383.5" stroke="#a0a0a0" stroke-width="1" />
<text x="948.0" y="394.6" font-size="10.8" text-anchor="middle" fill="#dcdcdc" textLength="13.5" lengthAdjust="spacingAndGlyphs" >0.4</text>
<line x1="1003.5" y1="379.5" x2="1003.5" y2="383.5" stroke="#a0a0a0" stroke-width="1" />
<text x="1003.5" y="394.6" font-size="10.8" text-anchor="middle" fill="#dcdcdc" textLength="13.5" lengthAdjust="spacingAndGlyphs" >0.5</text>
<line x1="1058.9" y1="379.5" x2="1058.9" y2="383.5" stroke="#a0a0a0" stroke-width="1" />
<text x="1058.9" y="394.6" font-size="10.8" text-anchor="middle" fill="#dcdcdc" textLength="13.5" lengthAdjust="spacingAndGlyphs" >0.6</text>
<line x1="1114.3" y1="379.5" x2="1114.3" y2="383.5" stroke="#a0a0a0" stroke-width="1" />
<text x="1114.3" y="394.6" font-size="10.8" text-anchor="middle" fill="#dcdcdc" textLength="13.5" lengthAdjust="spacingAndGlyphs" >0.7</text>
<line x1="1169.7" y1="379.5" x2="1169.7" y2="383.5" stroke="#a0a0a0" stroke-width="1" />
<text x="1169.7" y="394.6" font-size="10.8" text-anchor="middle" fill="#dcdcdc" textLength="13.5" lengthAdjust="spacingAndGlyphs" >0.8</text>
<line x1="722.5" y1="379.5" x2="726.5" y2="379.5" stroke="#a0a0a0" stroke-width="1" />
<text x="722.0" y="384.2" font-size="10.8" text-anchor="end" fill="#dcdcdc" textLength="5.4" lengthAdjust="spacingAndGlyphs" >0</text>
<line x1="722.5" y1="338.0" x2="726.5" y2="338.0" stroke="#a0a0a0" stroke-width="1" />
<text x="722.0" y="342.7" font-size="10.8" text-anchor="end" fill="#dcdcdc" textLength="13.5" lengthAdjust="spacingAndGlyphs" >0.1</text>
<line x1="722.5" y1="296.6" x2="726.5" y2="296.6" stroke="#a0a0a0" stroke-width="1" />
<text x="722.0" y="301.3" font-size="10.8" text-anchor="end" fill="#dcdcdc" textLength="13.5" lengthAdjust="spacingAndGlyphs" >0.2</text>
<line x1="722.5" y1="255.1" x2="726.5" y2="255.1" stroke="#a0a0a0" stroke-width="1" />
<text x="722.0" y="259.8" font-size="10.8" text-anchor="end" fill="#dcdcdc" textLength="13.5" lengthAdjust="spacingAndGlyphs" >0.3</text>
<line x1="722.5" y1="213.7" x2="726.5" y2="213.7" stroke="#a0a0a0" stroke-width="1" />
<text x="722.0" y="218.4" font-size="10.8" text-anchor="end" fill="#dcdcdc" textLength="13.5" lengthAdjust="spacingAndGlyphs" >0.4</text>
<line x1="722.5" y1="172.2" x2="726.5" y2="172.2" stroke="#a0a0a0" stroke-width="1" />
<text x="722.0" y="176.9" font-size="10.8" text-anchor="end" fill="#dcdcdc" textLength="13.5" lengthAdjust="spacingAndGlyphs" >0.5</text>
<line x1="722.5" y1="130.7" x2="726.5" y2="130.7" stroke="#a0a0a0" stroke-width="1" />
<text x="722.0" y="135.4" font-size="10.8" text-anchor="end" fill="#dcdcdc" textLength="13.5" lengthAdjust="spacingAndGlyphs" >0.6</text>
<line x1="722.5" y1="89.3" x2="726.5" y2="89.3" stroke="#a0a0a0" stroke-width="1" />
<text x="722.0" y="94.0" font-size="10.8" text-anchor="end" fill="#dcdcdc" textLength="13.5" lengthAdjust="spacingAndGlyphs" >0.7</text>
<line x1="722.5" y1="47.8" x2="726.5" y2="47.8" stroke="#a0a0a0" stroke-width="1" />
<text x="722.0" y="52.5" font-size="10.8" text-anchor="end" fill="#dcdcdc" textLength="13.5" lengthAdjust="spacingAndGlyphs" >0.8</text>
<text x="950.3" y="26.9" font-size="10.6" text-anchor="middle" fill="#dcdcdc" textLength="54.5" lengthAdjust="spacingAndGlyphs" >CIE 1931 xy</text>
<rect x="868.5" y="87.4" width="9.4" height="9.4" fill="none" stroke="rgba(255,255,255,0.85)" stroke-width="1.3" />
<rect x="964.4" y="151.4" width="9.4" height="9.4" fill="none" stroke="rgba(255,255,255,0.85)" stroke-width="1.3" />
<rect x="1098.9" y="241.1" width="9.4" height="9.4" fill="none" stroke="rgba(255,255,255,0.85)" stroke-width="1.3" />
<rect x="908.0" y="311.1" width="9.4" height="9.4" fill="none" stroke="rgba(255,255,255,0.85)" stroke-width="1.3" />
<rect x="804.6" y="349.1" width="9.4" height="9.4" fill="none" stroke="rgba(255,255,255,0.85)" stroke-width="1.3" />
<rect x="832.1" y="236.2" width="9.4" height="9.4" fill="none" stroke="rgba(255,255,255,0.85)" stroke-width="1.3" />
<rect x="895.0" y="237.4" width="9.2" height="9.2" fill="none" stroke="#fff" stroke-width="2.6" />
<rect x="895.0" y="237.4" width="9.2" height="9.2" fill="none" stroke="#111" stroke-width="1.2" />
<circle cx="1105.7" cy="247.6" r="3.1" fill="#e00000" stroke="#400" stroke-width="1"/>
<circle cx="848.1" cy="76.6" r="3.1" fill="#38e058" stroke="#032" stroke-width="1"/>
<circle cx="807.8" cy="362.3" r="3.1" fill="#1414f0" stroke="#006" stroke-width="1"/>
<circle cx="824.0" cy="246.8" r="3.1" fill="#30f0f0" stroke="#022" stroke-width="1"/>
<circle cx="921.5" cy="318.6" r="3.1" fill="#e020e0" stroke="#303" stroke-width="1"/>
<circle cx="961.9" cy="152.1" r="3.1" fill="#f0f020" stroke="#220" stroke-width="1"/>
<circle cx="892.8" cy="249.6" r="3.1" fill="#ffffff" stroke="#111" stroke-width="1"/>
<rect x="1103.2" y="89.7" width="9.2" height="9.2" fill="rgba(255,255,255,.6)" stroke="#fff" stroke-width="2.6" />
<rect x="1103.2" y="89.7" width="9.2" height="9.2" fill="none" stroke="#222" stroke-width="1.2" />
<circle cx="1068" cy="140.8" r="3" fill="#fff" stroke="#111" stroke-width="1"/>
</svg>

<div id="tbl">
<div class="hd"><b></b></div>
<div class="r0" style="top:26.5px"></div>
<div class="r1" style="top:50.3px"></div>
<div class="r0" style="top:74.1px"></div>
<div class="r1" style="top:97.9px"></div>
<div class="r0" style="top:121.7px"></div>
<div style="top:26.5px;width:11px;height:113px;background:rgba(0,0,0,.32)"></div>
</div>
<svg width="1181" height="544" viewBox="0 0 1181 544">
<text x="772.0" y="423.3" font-size="13.6" text-anchor="start" fill="#f4f4f4" textLength="29.0" lengthAdjust="spacingAndGlyphs" stroke="#f4f4f4" stroke-width="0.2">White</text>
<text x="833.2" y="423.3" font-size="13.6" text-anchor="start" fill="#f4f4f4" textLength="20.8" lengthAdjust="spacingAndGlyphs" stroke="#f4f4f4" stroke-width="0.2">Red</text>
<text x="894.5" y="423.3" font-size="13.6" text-anchor="start" fill="#f4f4f4" textLength="31.6" lengthAdjust="spacingAndGlyphs" stroke="#f4f4f4" stroke-width="0.2">Green</text>
<text x="955.8" y="423.3" font-size="13.6" text-anchor="start" fill="#f4f4f4" textLength="22.7" lengthAdjust="spacingAndGlyphs" stroke="#f4f4f4" stroke-width="0.2">Blue</text>
<text x="1017.0" y="423.3" font-size="13.6" text-anchor="start" fill="#f4f4f4" textLength="26.5" lengthAdjust="spacingAndGlyphs" stroke="#f4f4f4" stroke-width="0.2">Cyan</text>
<text x="1078.2" y="423.3" font-size="13.6" text-anchor="start" fill="#f4f4f4" textLength="44.2" lengthAdjust="spacingAndGlyphs" stroke="#f4f4f4" stroke-width="0.2">Magenta</text>
<text x="1139.5" y="423.3" font-size="13.6" text-anchor="start" fill="#f4f4f4" textLength="32.4" lengthAdjust="spacingAndGlyphs" stroke="#f4f4f4" stroke-width="0.2">Yellow</text>
<text x="714.0" y="448.3" font-size="15.6" text-anchor="start" fill="#f0f0f0" textLength="8.2" lengthAdjust="spacingAndGlyphs" >X</text>
<text x="772.0" y="448.3" font-size="15.6" text-anchor="start" fill="#f0f0f0" textLength="52.7" lengthAdjust="spacingAndGlyphs" >397.1708</text>
<text x="833.2" y="448.3" font-size="15.6" text-anchor="start" fill="#f0f0f0" textLength="52.7" lengthAdjust="spacingAndGlyphs" >256.0798</text>
<text x="894.5" y="448.3" font-size="15.6" text-anchor="start" fill="#f0f0f0" textLength="45.7" lengthAdjust="spacingAndGlyphs" >94.4999</text>
<text x="955.8" y="448.3" font-size="15.6" text-anchor="start" fill="#f0f0f0" textLength="45.7" lengthAdjust="spacingAndGlyphs" >85.6612</text>
<text x="1017.0" y="448.3" font-size="15.6" text-anchor="start" fill="#f0f0f0" textLength="52.7" lengthAdjust="spacingAndGlyphs" >157.5042</text>
<text x="1078.2" y="448.3" font-size="15.6" text-anchor="start" fill="#f0f0f0" textLength="52.7" lengthAdjust="spacingAndGlyphs" >307.4662</text>
<text x="1139.5" y="448.3" font-size="15.6" text-anchor="start" fill="#f0f0f0" textLength="52.7" lengthAdjust="spacingAndGlyphs" >291.9062</text>
<text x="714.0" y="472.1" font-size="15.6" text-anchor="start" fill="#f0f0f0" textLength="46.0" lengthAdjust="spacingAndGlyphs" >Y cd/m²</text>
<text x="772.0" y="472.1" font-size="15.6" text-anchor="start" fill="#f0f0f0" textLength="51.8" lengthAdjust="spacingAndGlyphs" >411.0902</text>
<text x="833.2" y="472.1" font-size="15.6" text-anchor="start" fill="#f0f0f0" textLength="51.8" lengthAdjust="spacingAndGlyphs" >118.1988</text>
<text x="894.5" y="472.1" font-size="15.6" text-anchor="start" fill="#f0f0f0" textLength="52.7" lengthAdjust="spacingAndGlyphs" >312.6307</text>
<text x="955.8" y="472.1" font-size="15.6" text-anchor="start" fill="#f0f0f0" textLength="45.7" lengthAdjust="spacingAndGlyphs" >23.0034</text>
<text x="1017.0" y="472.1" font-size="15.6" text-anchor="start" fill="#f0f0f0" textLength="52.7" lengthAdjust="spacingAndGlyphs" >283.4508</text>
<text x="1078.2" y="472.1" font-size="15.6" text-anchor="start" fill="#f0f0f0" textLength="52.7" lengthAdjust="spacingAndGlyphs" >126.4156</text>
<text x="1139.5" y="472.1" font-size="15.6" text-anchor="start" fill="#f0f0f0" textLength="52.7" lengthAdjust="spacingAndGlyphs" >374.7850</text>
<text x="714.0" y="495.9" font-size="15.6" text-anchor="start" fill="#f0f0f0" textLength="7.5" lengthAdjust="spacingAndGlyphs" >Z</text>
<text x="772.0" y="495.9" font-size="15.6" text-anchor="start" fill="#f0f0f0" textLength="52.7" lengthAdjust="spacingAndGlyphs" >513.8195</text>
<text x="833.2" y="495.9" font-size="15.6" text-anchor="start" fill="#f0f0f0" textLength="38.6" lengthAdjust="spacingAndGlyphs" >0.1934</text>
<text x="894.5" y="495.9" font-size="15.6" text-anchor="start" fill="#f0f0f0" textLength="45.7" lengthAdjust="spacingAndGlyphs" >22.7502</text>
<text x="955.8" y="495.9" font-size="15.6" text-anchor="start" fill="#f0f0f0" textLength="52.7" lengthAdjust="spacingAndGlyphs" >472.8351</text>
<text x="1017.0" y="495.9" font-size="15.6" text-anchor="start" fill="#f0f0f0" textLength="52.7" lengthAdjust="spacingAndGlyphs" >451.7242</text>
<text x="1078.2" y="495.9" font-size="15.6" text-anchor="start" fill="#f0f0f0" textLength="52.7" lengthAdjust="spacingAndGlyphs" >439.6884</text>
<text x="1139.5" y="495.9" font-size="15.6" text-anchor="start" fill="#f0f0f0" textLength="45.7" lengthAdjust="spacingAndGlyphs" >20.4476</text>
<text x="714.0" y="519.7" font-size="15.6" text-anchor="start" fill="#f0f0f0" textLength="47.0" lengthAdjust="spacingAndGlyphs" >x: CIE31</text>
<text x="772.0" y="519.7" font-size="15.6" text-anchor="start" fill="#f0f0f0" textLength="38.6" lengthAdjust="spacingAndGlyphs" >0.3004</text>
<text x="833.2" y="519.7" font-size="15.6" text-anchor="start" fill="#f0f0f0" textLength="38.6" lengthAdjust="spacingAndGlyphs" >0.6838</text>
<text x="894.5" y="519.7" font-size="15.6" text-anchor="start" fill="#f0f0f0" textLength="38.6" lengthAdjust="spacingAndGlyphs" >0.2198</text>
<text x="955.8" y="519.7" font-size="15.6" text-anchor="start" fill="#f0f0f0" textLength="38.6" lengthAdjust="spacingAndGlyphs" >0.1473</text>
<text x="1017.0" y="519.7" font-size="15.6" text-anchor="start" fill="#f0f0f0" textLength="38.6" lengthAdjust="spacingAndGlyphs" >0.1764</text>
<text x="1078.2" y="519.7" font-size="15.6" text-anchor="start" fill="#f0f0f0" textLength="38.6" lengthAdjust="spacingAndGlyphs" >0.3520</text>
<text x="1139.5" y="519.7" font-size="15.6" text-anchor="start" fill="#f0f0f0" textLength="38.6" lengthAdjust="spacingAndGlyphs" >0.4248</text>
<text x="714.0" y="543.5" font-size="15.6" text-anchor="start" fill="#f0f0f0" textLength="47.0" lengthAdjust="spacingAndGlyphs" >y: CIE31</text>
<text x="772.0" y="543.5" font-size="15.6" text-anchor="start" fill="#f0f0f0" textLength="38.6" lengthAdjust="spacingAndGlyphs" >0.3109</text>
<text x="833.2" y="543.5" font-size="15.6" text-anchor="start" fill="#f0f0f0" textLength="38.6" lengthAdjust="spacingAndGlyphs" >0.3156</text>
<text x="894.5" y="543.5" font-size="15.6" text-anchor="start" fill="#f0f0f0" textLength="38.6" lengthAdjust="spacingAndGlyphs" >0.7272</text>
<text x="955.8" y="543.5" font-size="15.6" text-anchor="start" fill="#f0f0f0" textLength="38.6" lengthAdjust="spacingAndGlyphs" >0.0396</text>
<text x="1017.0" y="543.5" font-size="15.6" text-anchor="start" fill="#f0f0f0" textLength="38.6" lengthAdjust="spacingAndGlyphs" >0.3175</text>
<text x="1078.2" y="543.5" font-size="15.6" text-anchor="start" fill="#f0f0f0" textLength="38.6" lengthAdjust="spacingAndGlyphs" >0.1447</text>
<text x="1139.5" y="543.5" font-size="15.6" text-anchor="start" fill="#f0f0f0" textLength="38.6" lengthAdjust="spacingAndGlyphs" >0.5454</text>
</svg>
<div id="hsb"><u style="left:11px"></u><b></b><u style="left:469px"></u><i style="position:absolute;left:0;top:0;width:11px;height:11px;background:#333"></i></div>
<div id="vsb"><div class="btn" style="top:1px"></div><div class="thumb"></div><div class="btn" style="top:98px"></div></div>
<svg width="1200" height="555" viewBox="0 0 1200 555">
<path d="M1184.5 441.5 L1187.5 437 L1190.5 441.5Z M1184.5 534 L1187.5 538.5 L1190.5 534Z M716.5 549.5 L720.5 546.5 L720.5 552.5Z M1177.5 549.5 L1173.5 546.5 L1173.5 552.5Z" fill="#3a3a3a"/>
<g opacity="0.84">
<rect x="1011.2" y="511.3" width="24.6" height="24.2" rx="3.5" fill="#ff8208"/>
<path d="M1018.8 514.8 h5.6 l6 10.2 l-5.6 9.6 h-5.4 l5.4 -9.6z" fill="#626262"/>
</g>
<text x="1041" y="531.6" font-size="25.5" fill="rgba(24,24,24,0.7)" textLength="138.5" lengthAdjust="spacingAndGlyphs">Soomal.com</text>
</svg>
</div></body></html>
